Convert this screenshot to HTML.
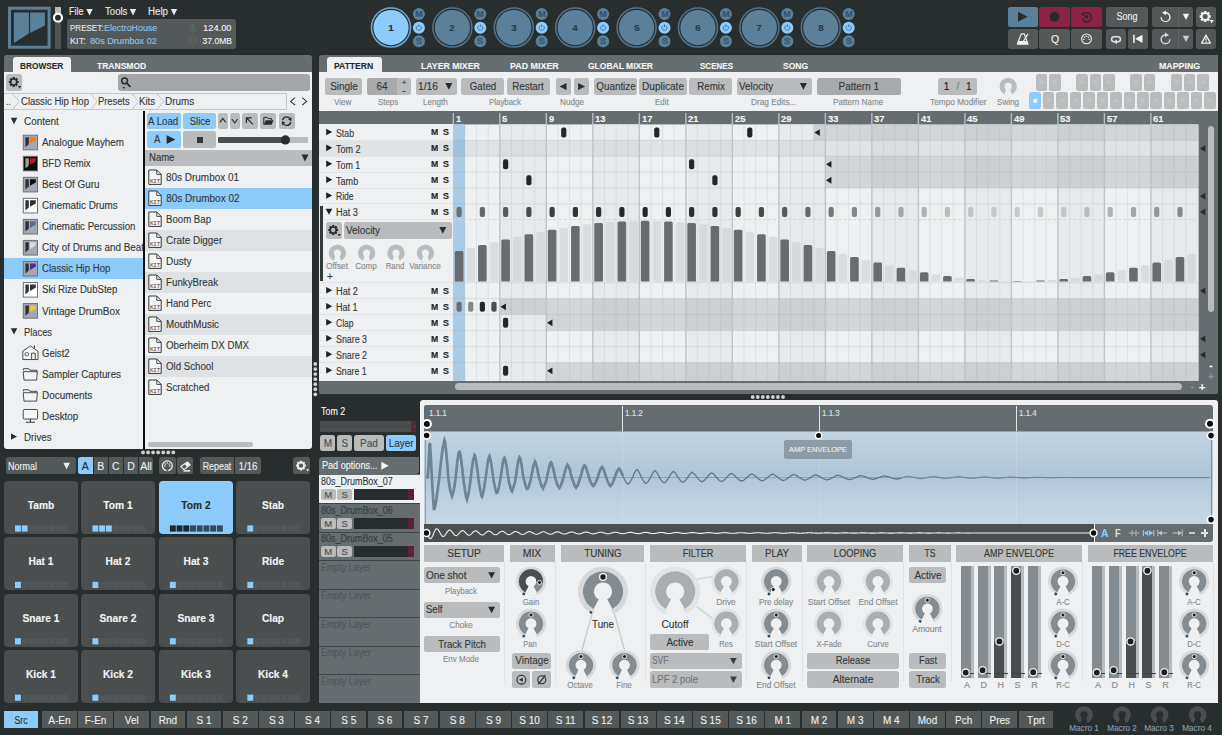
<!DOCTYPE html>
<html><head><meta charset="utf-8"><title>Geist2</title>
<style>
html,body{margin:0;padding:0;}
body{width:1222px;height:735px;overflow:hidden;background:#282e2e;position:relative;font-family:"Liberation Sans",sans-serif;}
div,span,svg{position:absolute;}
.t{white-space:nowrap;line-height:14px;height:14px;-webkit-text-stroke:0.12px currentColor;}
</style></head><body>
<svg style="left:6px;top:5px;" width="49" height="47" viewBox="0 0 49 47"><rect x="3.5" y="3.2" width="39.6" height="39" fill="none" stroke="#5a809a" stroke-width="3"/><polygon points="7.9,7.6 22.9,7.6 22.9,28.5 7.9,38" fill="#5a809a"/><polygon points="24.1,7.6 38.9,7.6 38.9,20.5 24.1,27.9" fill="#5a809a"/></svg>
<div style="left:55.20px;top:6.70px;width:5.70px;height:42.00px;background:#4e5354;"></div>
<div style="left:55.20px;top:6.70px;width:5.70px;height:6.30px;background:#b9bbbc;"></div>
<svg style="left:52px;top:11px;" width="13" height="13" viewBox="0 0 13 13"><g transform="translate(0.00,0.70)"><circle cx="6" cy="6" r="4" fill="#282e2e" stroke="#fff" stroke-width="2.2"/></g></svg>
<span class="t" style="top:5.00px;left:69.00px;transform-origin:0 50%;transform:scaleX(0.894);font-size:10px;color:#e8eaeb;">File</span>
<span class="t" style="top:5.00px;left:104.60px;transform-origin:0 50%;transform:scaleX(0.960);font-size:10px;color:#e8eaeb;">Tools</span>
<span class="t" style="top:5.00px;left:148.00px;transform-origin:0 50%;transform:scaleX(0.972);font-size:10px;color:#e8eaeb;">Help</span>
<svg style="left:85px;top:8px;" width="9" height="9" viewBox="0 0 9 9"><g transform="translate(0.50,0.00)"><polygon points="0.8,1 7.2,1 4,7.4" fill="#e8eaeb"/></g></svg>
<svg style="left:129px;top:8px;" width="9" height="9" viewBox="0 0 9 9"><polygon points="0.8,1 7.2,1 4,7.4" fill="#e8eaeb"/></svg>
<svg style="left:170px;top:8px;" width="9" height="9" viewBox="0 0 9 9"><polygon points="0.8,1 7.2,1 4,7.4" fill="#e8eaeb"/></svg>
<div style="left:67.40px;top:19.40px;width:168.20px;height:29.40px;background:#535858;border-radius:3px;"></div>
<span class="t" style="top:21.00px;left:69.60px;transform-origin:0 50%;transform:scaleX(0.890);font-size:9px;color:#e3e5e6;">PRESET:</span>
<span class="t" style="top:21.00px;left:103.80px;transform-origin:0 50%;transform:scaleX(0.985);font-size:9px;color:#8fc3ec;">ElectroHouse</span>
<span class="t" style="top:34.00px;left:69.60px;transform-origin:0 50%;transform:scaleX(1.019);font-size:9px;color:#e3e5e6;">KIT:</span>
<span class="t" style="top:34.00px;left:89.60px;transform-origin:0 50%;transform:scaleX(1.012);font-size:9px;color:#8fc3ec;">80s Drumbox 02</span>
<span class="t" style="top:21.00px;right:990.40px;transform-origin:100% 50%;transform:scaleX(1.032);font-size:9px;color:#f2f3f3;">124.00</span>
<span class="t" style="top:34.00px;right:990.00px;transform-origin:100% 50%;transform:scaleX(0.948);font-size:9px;color:#f2f3f3;">37.0MB</span>
<svg style="left:188px;top:23px;" width="9" height="9" viewBox="0 0 9 9"><g transform="translate(0.40,0.40)"><polygon points="4,0.8 7.4,7.2 0.6,7.2" fill="none" stroke="#666b6c" stroke-width="0.9"/><rect x="3.6" y="3" width="0.8" height="3" fill="#666b6c"/></g></svg>
<svg style="left:188px;top:36px;" width="9" height="9" viewBox="0 0 9 9"><g transform="translate(0.40,0.00)"><circle cx="4" cy="4" r="3.4" fill="none" stroke="#666b6c" stroke-width="0.9"/></g></svg>
<svg style="left:370px;top:6px;" width="43" height="43" viewBox="0 0 43 43"><g transform="translate(0.00,0.60)"><circle cx="21" cy="21" r="19.5" fill="none" stroke="#6ea6d6" stroke-width="1.5"/><circle cx="21" cy="21" r="17.6" fill="#8ccbfa"/></g></svg>
<span class="t" style="top:21.00px;left:391.00px;transform:translateX(-50%) scaleX(1.150);font-size:8.5px;color:#1f2a3a;font-weight:bold;">1</span>
<svg style="left:411px;top:7px;" width="15" height="15" viewBox="0 0 15 15"><g transform="translate(0.90,0.00)"><circle cx="7" cy="7" r="6" fill="#5a809a"/></g></svg>
<span class="t" style="top:7.00px;left:418.90px;transform:translateX(-50%) scaleX(1.080);font-size:8.5px;color:#35526a;font-weight:bold;">M</span>
<svg style="left:411px;top:20px;" width="15" height="15" viewBox="0 0 15 15"><g transform="translate(0.90,0.70)"><circle cx="7" cy="7" r="6" fill="#8ccbfa"/><path d="M5.4,5 A2.6,2.6 0 1 0 8.6,5" fill="none" stroke="#3b6d94" stroke-width="0.9"/><line x1="7" y1="3.6" x2="7" y2="6.6" stroke="#3b6d94" stroke-width="0.9"/></g></svg>
<svg style="left:411px;top:34px;" width="15" height="15" viewBox="0 0 15 15"><g transform="translate(0.90,0.20)"><circle cx="7" cy="7" r="6" fill="#5a809a"/></g></svg>
<span class="t" style="top:34.00px;left:418.90px;transform:translateX(-50%) scaleX(1.080);font-size:8.5px;color:#35526a;font-weight:bold;">S</span>
<svg style="left:431px;top:6px;" width="43" height="43" viewBox="0 0 43 43"><g transform="translate(0.40,0.60)"><circle cx="21" cy="21" r="19.5" fill="none" stroke="#4f748d" stroke-width="1.5"/><circle cx="21" cy="21" r="17.6" fill="#5a809a"/></g></svg>
<span class="t" style="top:21.00px;left:452.40px;transform:translateX(-50%) scaleX(1.150);font-size:8.5px;color:#2a3a46;font-weight:bold;">2</span>
<svg style="left:473px;top:7px;" width="15" height="15" viewBox="0 0 15 15"><g transform="translate(0.30,0.00)"><circle cx="7" cy="7" r="6" fill="#5a809a"/></g></svg>
<span class="t" style="top:7.00px;left:480.30px;transform:translateX(-50%) scaleX(1.080);font-size:8.5px;color:#35526a;font-weight:bold;">M</span>
<svg style="left:473px;top:20px;" width="15" height="15" viewBox="0 0 15 15"><g transform="translate(0.30,0.70)"><circle cx="7" cy="7" r="6" fill="#8ccbfa"/><path d="M5.4,5 A2.6,2.6 0 1 0 8.6,5" fill="none" stroke="#3b6d94" stroke-width="0.9"/><line x1="7" y1="3.6" x2="7" y2="6.6" stroke="#3b6d94" stroke-width="0.9"/></g></svg>
<svg style="left:473px;top:34px;" width="15" height="15" viewBox="0 0 15 15"><g transform="translate(0.30,0.20)"><circle cx="7" cy="7" r="6" fill="#5a809a"/></g></svg>
<span class="t" style="top:34.00px;left:480.30px;transform:translateX(-50%) scaleX(1.080);font-size:8.5px;color:#35526a;font-weight:bold;">S</span>
<svg style="left:492px;top:6px;" width="43" height="43" viewBox="0 0 43 43"><g transform="translate(0.80,0.60)"><circle cx="21" cy="21" r="19.5" fill="none" stroke="#4f748d" stroke-width="1.5"/><circle cx="21" cy="21" r="17.6" fill="#5a809a"/></g></svg>
<span class="t" style="top:21.00px;left:513.80px;transform:translateX(-50%) scaleX(1.150);font-size:8.5px;color:#2a3a46;font-weight:bold;">3</span>
<svg style="left:534px;top:7px;" width="15" height="15" viewBox="0 0 15 15"><g transform="translate(0.70,0.00)"><circle cx="7" cy="7" r="6" fill="#5a809a"/></g></svg>
<span class="t" style="top:7.00px;left:541.70px;transform:translateX(-50%) scaleX(1.080);font-size:8.5px;color:#35526a;font-weight:bold;">M</span>
<svg style="left:534px;top:20px;" width="15" height="15" viewBox="0 0 15 15"><g transform="translate(0.70,0.70)"><circle cx="7" cy="7" r="6" fill="#8ccbfa"/><path d="M5.4,5 A2.6,2.6 0 1 0 8.6,5" fill="none" stroke="#3b6d94" stroke-width="0.9"/><line x1="7" y1="3.6" x2="7" y2="6.6" stroke="#3b6d94" stroke-width="0.9"/></g></svg>
<svg style="left:534px;top:34px;" width="15" height="15" viewBox="0 0 15 15"><g transform="translate(0.70,0.20)"><circle cx="7" cy="7" r="6" fill="#5a809a"/></g></svg>
<span class="t" style="top:34.00px;left:541.70px;transform:translateX(-50%) scaleX(1.080);font-size:8.5px;color:#35526a;font-weight:bold;">S</span>
<svg style="left:554px;top:6px;" width="43" height="43" viewBox="0 0 43 43"><g transform="translate(0.20,0.60)"><circle cx="21" cy="21" r="19.5" fill="none" stroke="#4f748d" stroke-width="1.5"/><circle cx="21" cy="21" r="17.6" fill="#5a809a"/></g></svg>
<span class="t" style="top:21.00px;left:575.20px;transform:translateX(-50%) scaleX(1.150);font-size:8.5px;color:#2a3a46;font-weight:bold;">4</span>
<svg style="left:596px;top:7px;" width="15" height="15" viewBox="0 0 15 15"><g transform="translate(0.10,0.00)"><circle cx="7" cy="7" r="6" fill="#5a809a"/></g></svg>
<span class="t" style="top:7.00px;left:603.10px;transform:translateX(-50%) scaleX(1.080);font-size:8.5px;color:#35526a;font-weight:bold;">M</span>
<svg style="left:596px;top:20px;" width="15" height="15" viewBox="0 0 15 15"><g transform="translate(0.10,0.70)"><circle cx="7" cy="7" r="6" fill="#8ccbfa"/><path d="M5.4,5 A2.6,2.6 0 1 0 8.6,5" fill="none" stroke="#3b6d94" stroke-width="0.9"/><line x1="7" y1="3.6" x2="7" y2="6.6" stroke="#3b6d94" stroke-width="0.9"/></g></svg>
<svg style="left:596px;top:34px;" width="15" height="15" viewBox="0 0 15 15"><g transform="translate(0.10,0.20)"><circle cx="7" cy="7" r="6" fill="#5a809a"/></g></svg>
<span class="t" style="top:34.00px;left:603.10px;transform:translateX(-50%) scaleX(1.080);font-size:8.5px;color:#35526a;font-weight:bold;">S</span>
<svg style="left:615px;top:6px;" width="43" height="43" viewBox="0 0 43 43"><g transform="translate(0.60,0.60)"><circle cx="21" cy="21" r="19.5" fill="none" stroke="#4f748d" stroke-width="1.5"/><circle cx="21" cy="21" r="17.6" fill="#5a809a"/></g></svg>
<span class="t" style="top:21.00px;left:636.60px;transform:translateX(-50%) scaleX(1.150);font-size:8.5px;color:#2a3a46;font-weight:bold;">5</span>
<svg style="left:657px;top:7px;" width="15" height="15" viewBox="0 0 15 15"><g transform="translate(0.50,0.00)"><circle cx="7" cy="7" r="6" fill="#5a809a"/></g></svg>
<span class="t" style="top:7.00px;left:664.50px;transform:translateX(-50%) scaleX(1.080);font-size:8.5px;color:#35526a;font-weight:bold;">M</span>
<svg style="left:657px;top:20px;" width="15" height="15" viewBox="0 0 15 15"><g transform="translate(0.50,0.70)"><circle cx="7" cy="7" r="6" fill="#8ccbfa"/><path d="M5.4,5 A2.6,2.6 0 1 0 8.6,5" fill="none" stroke="#3b6d94" stroke-width="0.9"/><line x1="7" y1="3.6" x2="7" y2="6.6" stroke="#3b6d94" stroke-width="0.9"/></g></svg>
<svg style="left:657px;top:34px;" width="15" height="15" viewBox="0 0 15 15"><g transform="translate(0.50,0.20)"><circle cx="7" cy="7" r="6" fill="#5a809a"/></g></svg>
<span class="t" style="top:34.00px;left:664.50px;transform:translateX(-50%) scaleX(1.080);font-size:8.5px;color:#35526a;font-weight:bold;">S</span>
<svg style="left:677px;top:6px;" width="43" height="43" viewBox="0 0 43 43"><g transform="translate(0.00,0.60)"><circle cx="21" cy="21" r="19.5" fill="none" stroke="#4f748d" stroke-width="1.5"/><circle cx="21" cy="21" r="17.6" fill="#5a809a"/></g></svg>
<span class="t" style="top:21.00px;left:698.00px;transform:translateX(-50%) scaleX(1.150);font-size:8.5px;color:#2a3a46;font-weight:bold;">6</span>
<svg style="left:718px;top:7px;" width="15" height="15" viewBox="0 0 15 15"><g transform="translate(0.90,0.00)"><circle cx="7" cy="7" r="6" fill="#5a809a"/></g></svg>
<span class="t" style="top:7.00px;left:725.90px;transform:translateX(-50%) scaleX(1.080);font-size:8.5px;color:#35526a;font-weight:bold;">M</span>
<svg style="left:718px;top:20px;" width="15" height="15" viewBox="0 0 15 15"><g transform="translate(0.90,0.70)"><circle cx="7" cy="7" r="6" fill="#8ccbfa"/><path d="M5.4,5 A2.6,2.6 0 1 0 8.6,5" fill="none" stroke="#3b6d94" stroke-width="0.9"/><line x1="7" y1="3.6" x2="7" y2="6.6" stroke="#3b6d94" stroke-width="0.9"/></g></svg>
<svg style="left:718px;top:34px;" width="15" height="15" viewBox="0 0 15 15"><g transform="translate(0.90,0.20)"><circle cx="7" cy="7" r="6" fill="#5a809a"/></g></svg>
<span class="t" style="top:34.00px;left:725.90px;transform:translateX(-50%) scaleX(1.080);font-size:8.5px;color:#35526a;font-weight:bold;">S</span>
<svg style="left:738px;top:6px;" width="43" height="43" viewBox="0 0 43 43"><g transform="translate(0.40,0.60)"><circle cx="21" cy="21" r="19.5" fill="none" stroke="#4f748d" stroke-width="1.5"/><circle cx="21" cy="21" r="17.6" fill="#5a809a"/></g></svg>
<span class="t" style="top:21.00px;left:759.40px;transform:translateX(-50%) scaleX(1.150);font-size:8.5px;color:#2a3a46;font-weight:bold;">7</span>
<svg style="left:780px;top:7px;" width="15" height="15" viewBox="0 0 15 15"><g transform="translate(0.30,0.00)"><circle cx="7" cy="7" r="6" fill="#5a809a"/></g></svg>
<span class="t" style="top:7.00px;left:787.30px;transform:translateX(-50%) scaleX(1.080);font-size:8.5px;color:#35526a;font-weight:bold;">M</span>
<svg style="left:780px;top:20px;" width="15" height="15" viewBox="0 0 15 15"><g transform="translate(0.30,0.70)"><circle cx="7" cy="7" r="6" fill="#8ccbfa"/><path d="M5.4,5 A2.6,2.6 0 1 0 8.6,5" fill="none" stroke="#3b6d94" stroke-width="0.9"/><line x1="7" y1="3.6" x2="7" y2="6.6" stroke="#3b6d94" stroke-width="0.9"/></g></svg>
<svg style="left:780px;top:34px;" width="15" height="15" viewBox="0 0 15 15"><g transform="translate(0.30,0.20)"><circle cx="7" cy="7" r="6" fill="#5a809a"/></g></svg>
<span class="t" style="top:34.00px;left:787.30px;transform:translateX(-50%) scaleX(1.080);font-size:8.5px;color:#35526a;font-weight:bold;">S</span>
<svg style="left:799px;top:6px;" width="43" height="43" viewBox="0 0 43 43"><g transform="translate(0.80,0.60)"><circle cx="21" cy="21" r="19.5" fill="none" stroke="#4f748d" stroke-width="1.5"/><circle cx="21" cy="21" r="17.6" fill="#5a809a"/></g></svg>
<span class="t" style="top:21.00px;left:820.80px;transform:translateX(-50%) scaleX(1.150);font-size:8.5px;color:#2a3a46;font-weight:bold;">8</span>
<svg style="left:841px;top:7px;" width="15" height="15" viewBox="0 0 15 15"><g transform="translate(0.70,0.00)"><circle cx="7" cy="7" r="6" fill="#5a809a"/></g></svg>
<span class="t" style="top:7.00px;left:848.70px;transform:translateX(-50%) scaleX(1.080);font-size:8.5px;color:#35526a;font-weight:bold;">M</span>
<svg style="left:841px;top:20px;" width="15" height="15" viewBox="0 0 15 15"><g transform="translate(0.70,0.70)"><circle cx="7" cy="7" r="6" fill="#8ccbfa"/><path d="M5.4,5 A2.6,2.6 0 1 0 8.6,5" fill="none" stroke="#3b6d94" stroke-width="0.9"/><line x1="7" y1="3.6" x2="7" y2="6.6" stroke="#3b6d94" stroke-width="0.9"/></g></svg>
<svg style="left:841px;top:34px;" width="15" height="15" viewBox="0 0 15 15"><g transform="translate(0.70,0.20)"><circle cx="7" cy="7" r="6" fill="#5a809a"/></g></svg>
<span class="t" style="top:34.00px;left:848.70px;transform:translateX(-50%) scaleX(1.080);font-size:8.5px;color:#35526a;font-weight:bold;">S</span>
<div style="left:1007.60px;top:6.60px;width:30.20px;height:20.20px;background:#5a809a;border-radius:2.5px;"></div>
<div style="left:1039.40px;top:6.60px;width:30.20px;height:20.20px;background:#8e2246;border-radius:2.5px;"></div>
<div style="left:1071.40px;top:6.60px;width:30.40px;height:20.20px;background:#8e2246;border-radius:2.5px;"></div>
<div style="left:1106.00px;top:6.60px;width:42.00px;height:20.20px;background:#535858;border-radius:2.5px;"></div>
<div style="left:1152.20px;top:6.60px;width:41.20px;height:20.20px;background:#535858;border-radius:2.5px;"></div>
<div style="left:1178.00px;top:6.60px;width:1.00px;height:20.20px;background:#5f6465;"></div>
<div style="left:1196.00px;top:6.60px;width:20.00px;height:20.20px;background:#535858;border-radius:2.5px;"></div>
<div style="left:1007.60px;top:28.80px;width:30.20px;height:20.10px;background:#535858;border-radius:2.5px;"></div>
<div style="left:1039.40px;top:28.80px;width:30.20px;height:20.10px;background:#535858;border-radius:2.5px;"></div>
<div style="left:1071.40px;top:28.80px;width:30.40px;height:20.10px;background:#535858;border-radius:2.5px;"></div>
<div style="left:1106.00px;top:28.80px;width:20.00px;height:20.10px;background:#535858;border-radius:2.5px;"></div>
<div style="left:1128.00px;top:28.80px;width:20.00px;height:20.10px;background:#535858;border-radius:2.5px;"></div>
<div style="left:1152.20px;top:28.80px;width:41.20px;height:20.10px;background:#535858;border-radius:2.5px;"></div>
<div style="left:1178.00px;top:28.80px;width:1.00px;height:20.10px;background:#5f6465;"></div>
<div style="left:1196.00px;top:28.80px;width:20.00px;height:20.10px;background:#535858;border-radius:2.5px;"></div>
<svg style="left:1017px;top:10px;" width="13" height="13" viewBox="0 0 13 13"><g transform="translate(0.00,0.70)"><polygon points="1,1 10.5,6 1,11" fill="#272d2e"/></g></svg>
<svg style="left:1048px;top:10px;" width="13" height="13" viewBox="0 0 13 13"><g transform="translate(0.50,0.70)"><circle cx="6" cy="6" r="5" fill="#272d2e"/></g></svg>
<svg style="left:1080px;top:10px;" width="14" height="14" viewBox="0 0 14 14"><g transform="translate(0.00,0.20)"><path d="M3.2,4.2 A4.6,4.6 0 1 1 2.3,8.2" fill="none" stroke="#272d2e" stroke-width="1.5"/><polygon points="0.6,3.2 5,2.2 4.2,6.4" fill="#272d2e"/><circle cx="6.6" cy="6.6" r="1.7" fill="#272d2e"/></g></svg>
<span class="t" style="top:10.00px;left:1127.00px;transform:translateX(-50%) scaleX(0.899);font-size:10px;color:#eceeee;">Song</span>
<svg style="left:1159px;top:10px;" width="14" height="14" viewBox="0 0 14 14"><g transform="translate(0.00,0.40)"><path d="M6.5,2.4 A4.4,4.4 0 1 1 2.1,6.8" fill="none" stroke="#f0f1f1" stroke-width="1.4"/><polygon points="7,0 7,4.8 3,2.4" fill="#f0f1f1"/></g></svg>
<svg style="left:1182px;top:12px;" width="9" height="9" viewBox="0 0 9 9"><g transform="translate(0.00,0.70)"><polygon points="0.8,1 7.2,1 4,7.2" fill="#f0f1f1"/></g></svg>
<svg style="left:1198px;top:9px;" width="14" height="15" viewBox="0 0 14 15"><g transform="translate(0.50,0.80)"><path fill-rule="evenodd" fill="#f0f1f1" d="M12.29,5.57 L12.29,7.83 L10.50,8.26 L10.49,8.28 L11.45,9.85 L9.85,11.45 L8.28,10.49 L8.26,10.50 L7.83,12.29 L5.57,12.29 L5.14,10.50 L5.12,10.49 L3.55,11.45 L1.95,9.85 L2.91,8.28 L2.90,8.26 L1.11,7.83 L1.11,5.57 L2.90,5.14 L2.91,5.12 L1.95,3.55 L3.55,1.95 L5.12,2.91 L5.14,2.90 L5.57,1.11 L7.83,1.11 L8.26,2.90 L8.28,2.91 L9.85,1.95 L11.45,3.55 L10.49,5.12 L10.50,5.14 Z M9.2,6.7 a2.5,2.5 0 1 0 -5.0,0 a2.5,2.5 0 1 0 5.0,0 Z"/></g></svg>
<svg style="left:1209px;top:20px;" width="6" height="4" viewBox="0 0 6 4"><g transform="translate(0.60,0.10)"><polygon points="0,0 4.2,0 2.1,3.2" fill="#f0f1f1"/></g></svg>
<svg style="left:1016px;top:32px;" width="15" height="14" viewBox="0 0 15 14"><g transform="translate(0.00,0.65)"><polygon points="5.2,1.2 8.2,1.2 12,11.4 1.4,11.4" fill="none" stroke="#f0f1f1" stroke-width="1.2" stroke-linejoin="round"/><polygon points="2.3,8.4 11.1,8.4 12.2,11.6 1.2,11.6" fill="#f0f1f1"/><line x1="12" y1="1.2" x2="7.4" y2="8.6" stroke="#f0f1f1" stroke-width="1.2"/></g></svg>
<span class="t" style="top:33.00px;left:1054.50px;transform:translateX(-50%) scaleX(1.050);font-size:10px;color:#f0f1f1;">Q</span>
<svg style="left:1080px;top:32px;" width="13" height="13" viewBox="0 0 13 13"><g transform="translate(0.50,0.85)"><circle cx="6" cy="6" r="4.9" fill="none" stroke="#f0f1f1" stroke-width="1.1"/><circle cx="3.4" cy="6.4" r="0.8" fill="#f0f1f1"/><circle cx="8.6" cy="6.4" r="0.8" fill="#f0f1f1"/><circle cx="6" cy="3.4" r="0.8" fill="#f0f1f1"/><circle cx="4.1" cy="4.2" r="0.8" fill="#f0f1f1"/><circle cx="7.9" cy="4.2" r="0.8" fill="#f0f1f1"/></g></svg>
<svg style="left:1110px;top:34px;" width="13" height="12" viewBox="0 0 13 12"><g transform="translate(0.40,0.25)"><path d="M4,7.4 H3.6 A2.4,2.4 0 0 1 3.6,2.6 H7.6 A2.4,2.4 0 0 1 7.6,7.4 H6.6" fill="none" stroke="#dfe1e2" stroke-width="1.5"/><polygon points="3,7.6 6.6,5.2 6.6,10" fill="#dfe1e2"/></g></svg>
<svg style="left:1132px;top:34px;" width="12" height="10" viewBox="0 0 12 10"><g transform="translate(0.50,0.35)"><rect x="0.6" y="0.4" width="1.6" height="8.2" fill="#f0f1f1"/><polygon points="10,0.4 10,8.6 2.6,4.5" fill="#f0f1f1"/></g></svg>
<svg style="left:1159px;top:32px;" width="14" height="14" viewBox="0 0 14 14"><g transform="translate(0.00,0.55)"><path d="M6.5,2.4 A4.4,4.4 0 1 0 10.9,6.8" fill="none" stroke="#d3d6d7" stroke-width="1.4"/><polygon points="6,0 6,4.8 10,2.4" fill="#d3d6d7"/></g></svg>
<svg style="left:1182px;top:34px;" width="9" height="9" viewBox="0 0 9 9"><g transform="translate(0.00,0.85)"><polygon points="0.8,1 7.2,1 4,7.2" fill="#c9cccd"/></g></svg>
<svg style="left:1200px;top:33px;" width="13" height="12" viewBox="0 0 13 12"><g transform="translate(0.00,0.35)"><polygon points="6,1.8 10.4,9.8 1.6,9.8" fill="none" stroke="#f0f1f1" stroke-width="1.2" stroke-linejoin="round"/><rect x="5.5" y="4.4" width="1.1" height="3" fill="#f0f1f1"/><rect x="5.5" y="7.9" width="1.1" height="1" fill="#f0f1f1"/></g></svg>
<div style="left:4.00px;top:55.30px;width:308.00px;height:17.70px;background:#656d71;border-radius:3px 3px 0px 0px;"></div>
<div style="left:4.00px;top:72.00px;width:308.00px;height:377.00px;background:#eef0f1;border-radius:0px 0px 3px 3px;"></div>
<div style="left:13.00px;top:57.40px;width:58.00px;height:15.10px;background:#eef0f1;border-radius:3px 3px 0px 0px;"></div>
<span class="t" style="top:59.00px;left:20.40px;transform-origin:0 50%;transform:scaleX(0.919);font-size:9px;color:#272d2e;font-weight:bold;">BROWSER</span>
<span class="t" style="top:59.00px;left:96.60px;transform-origin:0 50%;transform:scaleX(0.946);font-size:9px;color:#f4f5f5;font-weight:bold;">TRANSMOD</span>
<div style="left:6.00px;top:74.40px;width:16.40px;height:16.20px;background:#b9bbbc;border-radius:2.5px;"></div>
<svg style="left:7px;top:76px;" width="13" height="13" viewBox="0 0 13 13"><g transform="translate(0.70,0.00)"><path fill-rule="evenodd" fill="#272d2e" d="M10.90,5.01 L10.90,6.99 L9.33,7.37 L9.32,7.39 L10.17,8.76 L8.76,10.17 L7.39,9.32 L7.37,9.33 L6.99,10.90 L5.01,10.90 L4.63,9.33 L4.61,9.32 L3.24,10.17 L1.83,8.76 L2.68,7.39 L2.67,7.37 L1.10,6.99 L1.10,5.01 L2.67,4.63 L2.68,4.61 L1.83,3.24 L3.24,1.83 L4.61,2.68 L4.63,2.67 L5.01,1.10 L6.99,1.10 L7.37,2.67 L7.39,2.68 L8.76,1.83 L10.17,3.24 L9.32,4.61 L9.33,4.63 Z M8.2,6.0 a2.2,2.2 0 1 0 -4.4,0 a2.2,2.2 0 1 0 4.4,0 Z"/></g></svg>
<svg style="left:18px;top:86px;" width="5" height="4" viewBox="0 0 5 4"><polygon points="0,0 3.2,0 1.6,2.4" fill="#272d2e"/></svg>
<div style="left:118.00px;top:74.40px;width:192.00px;height:16.20px;background:#a4a6a7;border-radius:3px;"></div>
<svg style="left:120px;top:76px;" width="13" height="15" viewBox="0 0 13 15"><circle cx="4.6" cy="4.8" r="2.9" fill="none" stroke="#272d2e" stroke-width="1.5"/><line x1="6.8" y1="7.2" x2="10.4" y2="11" stroke="#272d2e" stroke-width="1.8"/><polygon points="2.4,11 5.2,11 3.8,13" fill="#272d2e"/></svg>
<div style="left:4.00px;top:92.60px;width:282.50px;height:17.80px;background:#eef0f1;border:1px solid #c6c9ca;box-sizing:border-box;border-left:none;"></div>
<span class="t" style="top:95.00px;left:5.60px;transform-origin:0 50%;transform:scaleX(0.864);font-size:10px;color:#33383a;">..</span>
<span class="t" style="top:95.00px;left:21.00px;transform-origin:0 50%;transform:scaleX(0.956);font-size:10px;color:#33383a;">Classic Hip Hop</span>
<span class="t" style="top:95.00px;left:98.40px;transform-origin:0 50%;transform:scaleX(0.932);font-size:10px;color:#33383a;">Presets</span>
<span class="t" style="top:95.00px;left:139.40px;transform-origin:0 50%;transform:scaleX(0.960);font-size:10px;color:#33383a;">Kits</span>
<span class="t" style="top:95.00px;left:164.60px;transform-origin:0 50%;transform:scaleX(0.992);font-size:10px;color:#33383a;">Drums</span>
<svg style="left:11px;top:93px;" width="10" height="18" viewBox="0 0 10 18"><g transform="translate(0.60,0.40)"><polyline points="0.5,0 7.6,8.1 0.5,16.4" fill="none" stroke="#c0c3c4" stroke-width="1"/></g></svg>
<svg style="left:89px;top:93px;" width="10" height="18" viewBox="0 0 10 18"><g transform="translate(0.80,0.40)"><polyline points="0.5,0 7.6,8.1 0.5,16.4" fill="none" stroke="#c0c3c4" stroke-width="1"/></g></svg>
<svg style="left:131px;top:93px;" width="10" height="18" viewBox="0 0 10 18"><g transform="translate(0.00,0.40)"><polyline points="0.5,0 7.6,8.1 0.5,16.4" fill="none" stroke="#c0c3c4" stroke-width="1"/></g></svg>
<svg style="left:156px;top:93px;" width="10" height="18" viewBox="0 0 10 18"><g transform="translate(0.20,0.40)"><polyline points="0.5,0 7.6,8.1 0.5,16.4" fill="none" stroke="#c0c3c4" stroke-width="1"/></g></svg>
<svg style="left:289px;top:97px;" width="8" height="10" viewBox="0 0 8 10"><g transform="translate(0.50,0.00)"><polyline points="5.6,0.6 1.2,4.4 5.6,8.2" fill="none" stroke="#33383a" stroke-width="1.1"/></g></svg>
<svg style="left:301px;top:97px;" width="8" height="10" viewBox="0 0 8 10"><polyline points="1.2,0.6 5.6,4.4 1.2,8.2" fill="none" stroke="#33383a" stroke-width="1.1"/></svg>
<div style="left:4px;top:111px;width:139px;height:338px;overflow:hidden;">
<svg style="left:6px;top:6px;" width="8" height="8" viewBox="0 0 8 8"><g transform="translate(0.80,0.80)"><polygon points="0,0 6.4,0 3.2,6.4" fill="#272d2e"/></g></svg>
<span class="t" style="top:4.00px;left:19.60px;transform-origin:0 50%;transform:scaleX(0.994);font-size:10px;color:#33383a;">Content</span>
<svg style="left:18px;top:23px;" width="17" height="17" viewBox="0 0 17 17"><g transform="translate(0.80,0.74)"><rect x="0.5" y="0.5" width="14.2" height="14.6" fill="#a3a8b3" stroke="#6e7275" stroke-width="1"/><polygon points="2.6,2.4 6,2.4 6,9.6 2.6,12.6" fill="#2e3133"/><polygon points="7.2,2.4 13,2.4 13,5.6 7.2,9" fill="#f47b20"/></g></svg>
<span class="t" style="top:25.00px;left:37.60px;transform-origin:0 50%;transform:scaleX(0.983);font-size:10px;color:#33383a;">Analogue Mayhem</span>
<svg style="left:18px;top:44px;" width="17" height="17" viewBox="0 0 17 17"><g transform="translate(0.80,0.78)"><rect x="0.5" y="0.5" width="14.2" height="14.6" fill="#0a0a0a" stroke="#6e7275" stroke-width="1"/><polygon points="2.6,2.4 6,2.4 6,9.6 2.6,12.6" fill="#a0a29f"/><polygon points="7.2,2.4 13,2.4 13,5.6 7.2,9" fill="#b5172b"/></g></svg>
<span class="t" style="top:46.00px;left:37.60px;transform-origin:0 50%;transform:scaleX(0.951);font-size:10px;color:#33383a;">BFD Remix</span>
<svg style="left:18px;top:65px;" width="17" height="17" viewBox="0 0 17 17"><g transform="translate(0.80,0.82)"><rect x="0.5" y="0.5" width="14.2" height="14.6" fill="#a3a8b3" stroke="#6e7275" stroke-width="1"/><polygon points="2.6,2.4 6,2.4 6,9.6 2.6,12.6" fill="#2e3133"/><polygon points="7.2,2.4 13,2.4 13,5.6 7.2,9" fill="#0a0a0a"/></g></svg>
<span class="t" style="top:67.00px;left:37.60px;transform-origin:0 50%;transform:scaleX(0.984);font-size:10px;color:#33383a;">Best Of Guru</span>
<svg style="left:18px;top:86px;" width="17" height="17" viewBox="0 0 17 17"><g transform="translate(0.80,0.86)"><rect x="0.5" y="0.5" width="14.2" height="14.6" fill="#ffffff" stroke="#6e7275" stroke-width="1"/><polygon points="2.6,2.4 6,2.4 6,9.6 2.6,12.6" fill="#2e3133"/><polygon points="7.2,2.4 13,2.4 13,5.6 7.2,9" fill="#2e3133"/></g></svg>
<span class="t" style="top:88.00px;left:37.60px;transform-origin:0 50%;transform:scaleX(0.988);font-size:10px;color:#33383a;">Cinematic Drums</span>
<svg style="left:18px;top:107px;" width="17" height="17" viewBox="0 0 17 17"><g transform="translate(0.80,0.90)"><rect x="0.5" y="0.5" width="14.2" height="14.6" fill="#a3a8b3" stroke="#6e7275" stroke-width="1"/><polygon points="2.6,2.4 6,2.4 6,9.6 2.6,12.6" fill="#2e3133"/><polygon points="7.2,2.4 13,2.4 13,5.6 7.2,9" fill="#5a6e8c"/></g></svg>
<span class="t" style="top:109.00px;left:37.60px;transform-origin:0 50%;transform:scaleX(0.966);font-size:10px;color:#33383a;">Cinematic Percussion</span>
<svg style="left:18px;top:128px;" width="17" height="17" viewBox="0 0 17 17"><g transform="translate(0.80,0.94)"><rect x="0.5" y="0.5" width="14.2" height="14.6" fill="#a3a8b3" stroke="#6e7275" stroke-width="1"/><polygon points="2.6,2.4 6,2.4 6,9.6 2.6,12.6" fill="#2e3133"/><polygon points="7.2,2.4 13,2.4 13,5.6 7.2,9" fill="#d9dce2"/></g></svg>
<span class="t" style="top:130.00px;left:37.60px;transform-origin:0 50%;transform:scaleX(0.987);font-size:10px;color:#33383a;">City of Drums and Beats</span>
<div style="left:0.00px;top:147.40px;width:139.00px;height:20.40px;background:#8ccbfa;"></div>
<svg style="left:18px;top:149px;" width="17" height="17" viewBox="0 0 17 17"><g transform="translate(0.80,0.98)"><rect x="0.5" y="0.5" width="14.2" height="14.6" fill="#a3a8b3" stroke="#6e7275" stroke-width="1"/><polygon points="2.6,2.4 6,2.4 6,9.6 2.6,12.6" fill="#2e3133"/><polygon points="7.2,2.4 13,2.4 13,5.6 7.2,9" fill="#4a2c9a"/></g></svg>
<span class="t" style="top:151.00px;left:37.60px;transform-origin:0 50%;transform:scaleX(0.962);font-size:10px;color:#33383a;">Classic Hip Hop</span>
<svg style="left:18px;top:171px;" width="17" height="16" viewBox="0 0 17 16"><g transform="translate(0.80,0.02)"><rect x="0.5" y="0.5" width="14.2" height="14.6" fill="#ffffff" stroke="#6e7275" stroke-width="1"/><polygon points="2.6,2.4 6,2.4 6,9.6 2.6,12.6" fill="#2e3133"/><polygon points="7.2,2.4 13,2.4 13,5.6 7.2,9" fill="#2e3133"/></g></svg>
<span class="t" style="top:172.00px;left:37.60px;transform-origin:0 50%;transform:scaleX(0.960);font-size:10px;color:#33383a;">Ski Rize DubStep</span>
<svg style="left:18px;top:192px;" width="17" height="16" viewBox="0 0 17 16"><g transform="translate(0.80,0.06)"><rect x="0.5" y="0.5" width="14.2" height="14.6" fill="#a3a8b3" stroke="#6e7275" stroke-width="1"/><polygon points="2.6,2.4 6,2.4 6,9.6 2.6,12.6" fill="#2e3133"/><polygon points="7.2,2.4 13,2.4 13,5.6 7.2,9" fill="#e8c840"/></g></svg>
<span class="t" style="top:194.00px;left:37.60px;transform-origin:0 50%;transform:scaleX(0.998);font-size:10px;color:#33383a;">Vintage DrumBox</span>
<svg style="left:6px;top:217px;" width="8" height="7" viewBox="0 0 8 7"><g transform="translate(0.80,0.20)"><polygon points="0,0 6.4,0 3.2,6.4" fill="#272d2e"/></g></svg>
<span class="t" style="top:215.00px;left:19.60px;transform-origin:0 50%;transform:scaleX(0.933);font-size:10px;color:#33383a;">Places</span>
<svg style="left:18px;top:233px;" width="18" height="17" viewBox="0 0 18 17"><g transform="translate(0.00,0.54)"><path d="M0.8,6.6 L8.4,1.4 L16,6.6 V15 H0.8 Z" fill="#f4f5f6" stroke="#33383a" stroke-width="0.9"/><rect x="3" y="8.2" width="3.6" height="3" rx="1" fill="none" stroke="#33383a" stroke-width="0.8"/><path d="M9.6,15 V8.6 H13.2 V15" fill="none" stroke="#33383a" stroke-width="0.9"/><path d="M12.4,3.6 V0.8" stroke="#33383a" stroke-width="1"/></g></svg>
<span class="t" style="top:236.00px;left:37.60px;transform-origin:0 50%;transform:scaleX(0.955);font-size:10px;color:#33383a;">Geist2</span>
<svg style="left:18px;top:256px;" width="17" height="15" viewBox="0 0 17 15"><g transform="translate(0.40,0.08)"><path d="M1,3.2 V1.6 H6.4 L7.6,3.2 H14.6 V4.6" fill="none" stroke="#33383a" stroke-width="0.9"/><path d="M1.6,13 L0.8,4.6 H15 L14.2,13 Z" fill="#f4f5f6" stroke="#33383a" stroke-width="0.9"/></g></svg>
<span class="t" style="top:257.00px;left:37.60px;transform-origin:0 50%;transform:scaleX(0.980);font-size:10px;color:#33383a;">Sampler Captures</span>
<svg style="left:18px;top:277px;" width="17" height="15" viewBox="0 0 17 15"><g transform="translate(0.40,0.12)"><path d="M1,3.2 V1.6 H6.4 L7.6,3.2 H14.6 V4.6" fill="none" stroke="#33383a" stroke-width="0.9"/><path d="M1.6,13 L0.8,4.6 H15 L14.2,13 Z" fill="#f4f5f6" stroke="#33383a" stroke-width="0.9"/></g></svg>
<span class="t" style="top:278.00px;left:37.60px;transform-origin:0 50%;transform:scaleX(0.993);font-size:10px;color:#33383a;">Documents</span>
<svg style="left:18px;top:297px;" width="17" height="16" viewBox="0 0 17 16"><g transform="translate(0.40,0.66)"><rect x="0.8" y="0.8" width="14.4" height="9.6" rx="1" fill="#f4f5f6" stroke="#33383a" stroke-width="0.9"/><path d="M8,10.4 V13.4 M3.4,13.6 H12.6" stroke="#33383a" stroke-width="1.1"/></g></svg>
<span class="t" style="top:299.00px;left:37.60px;transform-origin:0 50%;transform:scaleX(0.992);font-size:10px;color:#33383a;">Desktop</span>
<svg style="left:7px;top:322px;" width="7" height="7" viewBox="0 0 7 7"><g transform="translate(0.00,0.40)"><polygon points="0,0 6,3.2 0,6.4" fill="#272d2e"/></g></svg>
<span class="t" style="top:320.00px;left:19.60px;transform-origin:0 50%;transform:scaleX(0.974);font-size:10px;color:#33383a;">Drives</span>
</div>
<div style="left:143.00px;top:111.00px;width:2.30px;height:338.00px;background:#0c0e0f;"></div>
<div style="left:147.30px;top:112.90px;width:33.50px;height:16.10px;background:#8ccbfa;border-radius:2.5px;"></div>
<div style="left:183.00px;top:112.90px;width:33.00px;height:16.10px;background:#8ccbfa;border-radius:2.5px;"></div>
<div style="left:218.10px;top:112.90px;width:9.50px;height:16.10px;background:#b9bbbc;border-radius:2.5px;"></div>
<div style="left:230.00px;top:112.90px;width:9.50px;height:16.10px;background:#b9bbbc;border-radius:2.5px;"></div>
<div style="left:241.60px;top:112.90px;width:16.20px;height:16.10px;background:#b9bbbc;border-radius:2.5px;"></div>
<div style="left:260.20px;top:112.90px;width:16.20px;height:16.10px;background:#b9bbbc;border-radius:2.5px;"></div>
<div style="left:278.80px;top:112.90px;width:15.90px;height:16.10px;background:#b9bbbc;border-radius:2.5px;"></div>
<div style="left:147.30px;top:131.40px;width:33.50px;height:16.20px;background:#8ccbfa;border-radius:2.5px;"></div>
<div style="left:183.00px;top:131.40px;width:33.00px;height:16.20px;background:#b9bbbc;border-radius:2.5px;"></div>
<span class="t" style="top:115.00px;left:148.20px;transform-origin:0 50%;transform:scaleX(0.970);font-size:10px;color:#33383a;">A Load</span>
<span class="t" style="top:115.00px;left:199.50px;transform:translateX(-50%) scaleX(0.950);font-size:10px;color:#33383a;">Slice</span>
<svg style="left:219px;top:117px;" width="8" height="7" viewBox="0 0 8 7"><g transform="translate(0.30,0.50)"><polyline points="0.6,4.8 3.5,1 6.4,4.8" fill="none" stroke="#272d2e" stroke-width="1.1"/></g></svg>
<svg style="left:231px;top:118px;" width="8" height="7" viewBox="0 0 8 7"><g transform="translate(0.20,0.00)"><polyline points="0.6,1 3.5,4.8 6.4,1" fill="none" stroke="#272d2e" stroke-width="1.1"/></g></svg>
<svg style="left:245px;top:116px;" width="10" height="10" viewBox="0 0 10 10"><g transform="translate(0.00,0.40)"><path d="M1.4,6.6 V1.4 H6.6 M1.6,1.6 L8,8" fill="none" stroke="#272d2e" stroke-width="1.2"/></g></svg>
<svg style="left:263px;top:116px;" width="12" height="11" viewBox="0 0 12 11"><path d="M0.8,8.6 V1.4 H4.2 L5.2,2.6 H8.6 V4" fill="none" stroke="#272d2e" stroke-width="1"/><path d="M0.8,8.8 L2.8,4.2 H10.6 L8.6,8.8 Z" fill="#272d2e"/></svg>
<svg style="left:281px;top:115px;" width="12" height="12" viewBox="0 0 12 12"><g transform="translate(0.00,0.40)"><path d="M1.6,4.8 A4.2,4.2 0 0 1 9.4,3.6" fill="none" stroke="#272d2e" stroke-width="1.3"/><polygon points="10.6,1.6 10.4,5.6 7,4.2" fill="#272d2e"/><path d="M9.8,6.6 A4.2,4.2 0 0 1 2,7.8" fill="none" stroke="#272d2e" stroke-width="1.3"/><polygon points="0.8,9.8 1,5.8 4.4,7.2" fill="#272d2e"/></g></svg>
<span class="t" style="top:133.00px;left:153.60px;transform-origin:0 50%;transform:scaleX(0.959);font-size:10px;color:#33383a;">A</span>
<svg style="left:166px;top:134px;" width="11" height="11" viewBox="0 0 11 11"><g transform="translate(0.00,0.60)"><polygon points="0.6,0.6 9.4,5 0.6,9.4" fill="#272d2e"/></g></svg>
<div style="left:196.60px;top:136.60px;width:6.00px;height:6.00px;background:#33383a;"></div>
<div style="left:218.00px;top:137.00px;width:68.00px;height:5.80px;background:#4a4e4f;border-radius:1px;"></div>
<div style="left:286.00px;top:137.00px;width:22.00px;height:5.80px;background:#b9bbbc;border-radius:0px 1px 1px 0px;"></div>
<svg style="left:280px;top:134px;" width="11" height="11" viewBox="0 0 11 11"><g transform="translate(0.40,0.90)"><circle cx="5" cy="5" r="4.6" fill="#272d2e"/></g></svg>
<div style="left:145.30px;top:150.20px;width:166.50px;height:15.80px;background:#b9bbbc;"></div>
<span class="t" style="top:151.00px;left:149.00px;transform-origin:0 50%;transform:scaleX(0.952);font-size:10px;color:#33383a;">Name</span>
<svg style="left:301px;top:154px;" width="8" height="8" viewBox="0 0 8 8"><g transform="translate(0.50,0.50)"><polygon points="0,0 7,0 3.5,7" fill="#272d2e"/></g></svg>
<svg style="left:148px;top:169px;" width="15" height="17" viewBox="0 0 15 17"><g transform="translate(0.20,0.40)"><path d="M0.6,0.6 H8.6 L13,5 V15 H0.6 Z" fill="#f4f5f6" stroke="#33383a" stroke-width="1"/><path d="M8.6,0.6 V5 H13" fill="none" stroke="#33383a" stroke-width="0.9"/><text x="6.9" y="13.4" font-size="5.2" font-family="Liberation Mono,monospace" text-anchor="middle" fill="#33383a" textLength="10.4" lengthAdjust="spacingAndGlyphs">KIT</text></g></svg>
<span class="t" style="top:171.00px;left:166.20px;transform-origin:0 50%;transform:scaleX(0.995);font-size:10px;color:#33383a;">80s Drumbox 01</span>
<div style="left:145.30px;top:188.20px;width:166.50px;height:20.40px;background:#8ccbfa;"></div>
<svg style="left:148px;top:190px;" width="15" height="17" viewBox="0 0 15 17"><g transform="translate(0.20,0.40)"><path d="M0.6,0.6 H8.6 L13,5 V15 H0.6 Z" fill="#f4f5f6" stroke="#33383a" stroke-width="1"/><path d="M8.6,0.6 V5 H13" fill="none" stroke="#33383a" stroke-width="0.9"/><text x="6.9" y="13.4" font-size="5.2" font-family="Liberation Mono,monospace" text-anchor="middle" fill="#33383a" textLength="10.4" lengthAdjust="spacingAndGlyphs">KIT</text></g></svg>
<span class="t" style="top:192.00px;left:166.20px;transform-origin:0 50%;transform:scaleX(1.000);font-size:10px;color:#33383a;">80s Drumbox 02</span>
<svg style="left:148px;top:211px;" width="15" height="17" viewBox="0 0 15 17"><g transform="translate(0.20,0.40)"><path d="M0.6,0.6 H8.6 L13,5 V15 H0.6 Z" fill="#f4f5f6" stroke="#33383a" stroke-width="1"/><path d="M8.6,0.6 V5 H13" fill="none" stroke="#33383a" stroke-width="0.9"/><text x="6.9" y="13.4" font-size="5.2" font-family="Liberation Mono,monospace" text-anchor="middle" fill="#33383a" textLength="10.4" lengthAdjust="spacingAndGlyphs">KIT</text></g></svg>
<span class="t" style="top:213.00px;left:166.20px;transform-origin:0 50%;transform:scaleX(0.964);font-size:10px;color:#33383a;">Boom Bap</span>
<div style="left:145.30px;top:230.20px;width:166.50px;height:20.40px;background:#dfe2e5;"></div>
<svg style="left:148px;top:232px;" width="15" height="17" viewBox="0 0 15 17"><g transform="translate(0.20,0.40)"><path d="M0.6,0.6 H8.6 L13,5 V15 H0.6 Z" fill="#f4f5f6" stroke="#33383a" stroke-width="1"/><path d="M8.6,0.6 V5 H13" fill="none" stroke="#33383a" stroke-width="0.9"/><text x="6.9" y="13.4" font-size="5.2" font-family="Liberation Mono,monospace" text-anchor="middle" fill="#33383a" textLength="10.4" lengthAdjust="spacingAndGlyphs">KIT</text></g></svg>
<span class="t" style="top:234.00px;left:166.20px;transform-origin:0 50%;transform:scaleX(0.991);font-size:10px;color:#33383a;">Crate Digger</span>
<svg style="left:148px;top:253px;" width="15" height="17" viewBox="0 0 15 17"><g transform="translate(0.20,0.40)"><path d="M0.6,0.6 H8.6 L13,5 V15 H0.6 Z" fill="#f4f5f6" stroke="#33383a" stroke-width="1"/><path d="M8.6,0.6 V5 H13" fill="none" stroke="#33383a" stroke-width="0.9"/><text x="6.9" y="13.4" font-size="5.2" font-family="Liberation Mono,monospace" text-anchor="middle" fill="#33383a" textLength="10.4" lengthAdjust="spacingAndGlyphs">KIT</text></g></svg>
<span class="t" style="top:255.00px;left:166.20px;transform-origin:0 50%;transform:scaleX(0.994);font-size:10px;color:#33383a;">Dusty</span>
<div style="left:145.30px;top:272.20px;width:166.50px;height:20.40px;background:#dfe2e5;"></div>
<svg style="left:148px;top:274px;" width="15" height="17" viewBox="0 0 15 17"><g transform="translate(0.20,0.40)"><path d="M0.6,0.6 H8.6 L13,5 V15 H0.6 Z" fill="#f4f5f6" stroke="#33383a" stroke-width="1"/><path d="M8.6,0.6 V5 H13" fill="none" stroke="#33383a" stroke-width="0.9"/><text x="6.9" y="13.4" font-size="5.2" font-family="Liberation Mono,monospace" text-anchor="middle" fill="#33383a" textLength="10.4" lengthAdjust="spacingAndGlyphs">KIT</text></g></svg>
<span class="t" style="top:276.00px;left:166.20px;transform-origin:0 50%;transform:scaleX(0.975);font-size:10px;color:#33383a;">FunkyBreak</span>
<svg style="left:148px;top:295px;" width="15" height="17" viewBox="0 0 15 17"><g transform="translate(0.20,0.40)"><path d="M0.6,0.6 H8.6 L13,5 V15 H0.6 Z" fill="#f4f5f6" stroke="#33383a" stroke-width="1"/><path d="M8.6,0.6 V5 H13" fill="none" stroke="#33383a" stroke-width="0.9"/><text x="6.9" y="13.4" font-size="5.2" font-family="Liberation Mono,monospace" text-anchor="middle" fill="#33383a" textLength="10.4" lengthAdjust="spacingAndGlyphs">KIT</text></g></svg>
<span class="t" style="top:297.00px;left:166.20px;transform-origin:0 50%;transform:scaleX(0.957);font-size:10px;color:#33383a;">Hand Perc</span>
<div style="left:145.30px;top:314.20px;width:166.50px;height:20.40px;background:#dfe2e5;"></div>
<svg style="left:148px;top:316px;" width="15" height="17" viewBox="0 0 15 17"><g transform="translate(0.20,0.40)"><path d="M0.6,0.6 H8.6 L13,5 V15 H0.6 Z" fill="#f4f5f6" stroke="#33383a" stroke-width="1"/><path d="M8.6,0.6 V5 H13" fill="none" stroke="#33383a" stroke-width="0.9"/><text x="6.9" y="13.4" font-size="5.2" font-family="Liberation Mono,monospace" text-anchor="middle" fill="#33383a" textLength="10.4" lengthAdjust="spacingAndGlyphs">KIT</text></g></svg>
<span class="t" style="top:318.00px;left:166.20px;transform-origin:0 50%;transform:scaleX(0.983);font-size:10px;color:#33383a;">MouthMusic</span>
<svg style="left:148px;top:337px;" width="15" height="17" viewBox="0 0 15 17"><g transform="translate(0.20,0.40)"><path d="M0.6,0.6 H8.6 L13,5 V15 H0.6 Z" fill="#f4f5f6" stroke="#33383a" stroke-width="1"/><path d="M8.6,0.6 V5 H13" fill="none" stroke="#33383a" stroke-width="0.9"/><text x="6.9" y="13.4" font-size="5.2" font-family="Liberation Mono,monospace" text-anchor="middle" fill="#33383a" textLength="10.4" lengthAdjust="spacingAndGlyphs">KIT</text></g></svg>
<span class="t" style="top:339.00px;left:166.20px;transform-origin:0 50%;transform:scaleX(0.970);font-size:10px;color:#33383a;">Oberheim DX DMX</span>
<div style="left:145.30px;top:356.20px;width:166.50px;height:20.40px;background:#dfe2e5;"></div>
<svg style="left:148px;top:358px;" width="15" height="17" viewBox="0 0 15 17"><g transform="translate(0.20,0.40)"><path d="M0.6,0.6 H8.6 L13,5 V15 H0.6 Z" fill="#f4f5f6" stroke="#33383a" stroke-width="1"/><path d="M8.6,0.6 V5 H13" fill="none" stroke="#33383a" stroke-width="0.9"/><text x="6.9" y="13.4" font-size="5.2" font-family="Liberation Mono,monospace" text-anchor="middle" fill="#33383a" textLength="10.4" lengthAdjust="spacingAndGlyphs">KIT</text></g></svg>
<span class="t" style="top:360.00px;left:166.20px;transform-origin:0 50%;transform:scaleX(0.969);font-size:10px;color:#33383a;">Old School</span>
<svg style="left:148px;top:379px;" width="15" height="17" viewBox="0 0 15 17"><g transform="translate(0.20,0.40)"><path d="M0.6,0.6 H8.6 L13,5 V15 H0.6 Z" fill="#f4f5f6" stroke="#33383a" stroke-width="1"/><path d="M8.6,0.6 V5 H13" fill="none" stroke="#33383a" stroke-width="0.9"/><text x="6.9" y="13.4" font-size="5.2" font-family="Liberation Mono,monospace" text-anchor="middle" fill="#33383a" textLength="10.4" lengthAdjust="spacingAndGlyphs">KIT</text></g></svg>
<span class="t" style="top:381.00px;left:166.20px;transform-origin:0 50%;transform:scaleX(0.964);font-size:10px;color:#33383a;">Scratched</span>
<div style="left:147.50px;top:442.40px;width:105.50px;height:4.60px;background:#b9bbbc;border-radius:2.3px;"></div>
<svg style="left:140px;top:449px;" width="41" height="7" viewBox="0 0 41 7"><g transform="translate(0.00,0.40)"><circle cx="3.00" cy="3" r="1.9" fill="#cfd2d3"/><circle cx="8.05" cy="3" r="1.9" fill="#cfd2d3"/><circle cx="13.10" cy="3" r="1.9" fill="#cfd2d3"/><circle cx="18.15" cy="3" r="1.9" fill="#cfd2d3"/><circle cx="23.20" cy="3" r="1.9" fill="#cfd2d3"/><circle cx="28.25" cy="3" r="1.9" fill="#cfd2d3"/><circle cx="33.30" cy="3" r="1.9" fill="#cfd2d3"/></g></svg>
<div style="left:319.00px;top:55.30px;width:899.00px;height:17.70px;background:#656d71;border-radius:3px 0px 0px 0px;"></div>
<div style="left:319.00px;top:72.00px;width:899.00px;height:39.00px;background:#eef0f1;"></div>
<div style="left:319.00px;top:111.00px;width:899.00px;height:283.00px;background:#656d71;border-radius:0px 0px 2px 2px;"></div>
<div style="left:327.00px;top:57.40px;width:55.00px;height:15.10px;background:#eef0f1;border-radius:3px 3px 0px 0px;"></div>
<span class="t" style="top:59.00px;left:334.40px;transform-origin:0 50%;transform:scaleX(0.952);font-size:9px;color:#272d2e;font-weight:bold;">PATTERN</span>
<span class="t" style="top:59.00px;left:420.80px;transform-origin:0 50%;transform:scaleX(0.969);font-size:9px;color:#f4f5f5;font-weight:bold;">LAYER MIXER</span>
<span class="t" style="top:59.00px;left:510.00px;transform-origin:0 50%;transform:scaleX(0.989);font-size:9px;color:#f4f5f5;font-weight:bold;">PAD MIXER</span>
<span class="t" style="top:59.00px;left:588.00px;transform-origin:0 50%;transform:scaleX(0.944);font-size:9px;color:#f4f5f5;font-weight:bold;">GLOBAL MIXER</span>
<span class="t" style="top:59.00px;left:699.60px;transform-origin:0 50%;transform:scaleX(0.892);font-size:9px;color:#f4f5f5;font-weight:bold;">SCENES</span>
<span class="t" style="top:59.00px;left:782.60px;transform-origin:0 50%;transform:scaleX(0.943);font-size:9px;color:#f4f5f5;font-weight:bold;">SONG</span>
<span class="t" style="top:59.00px;left:1158.80px;transform-origin:0 50%;transform:scaleX(0.978);font-size:9px;color:#f4f5f5;font-weight:bold;">MAPPING</span>
<div style="left:325.00px;top:78.00px;width:37.00px;height:16.60px;background:#b9bbbc;border-radius:2.5px;"></div>
<span class="t" style="top:80.00px;left:343.50px;transform:translateX(-50%) scaleX(0.993);font-size:10px;color:#33383a;">Single</span>
<div style="left:367.00px;top:78.00px;width:30.40px;height:16.60px;background:#a8aaab;border-radius:2.5px 0px 0px 2.5px;"></div>
<div style="left:397.40px;top:78.00px;width:13.60px;height:16.60px;background:#b9bbbc;border-radius:0px 2.5px 2.5px 0px;"></div>
<span class="t" style="top:80.00px;left:382.00px;transform:translateX(-50%) scaleX(0.989);font-size:10px;color:#33383a;">64</span>
<span class="t" style="top:76.00px;left:404.00px;transform:translateX(-50%) scaleX(1.000);font-size:8px;color:#33383a;">+</span>
<span class="t" style="top:84.00px;left:404.00px;transform:translateX(-50%) scaleX(1.300);font-size:9px;color:#33383a;">-</span>
<div style="left:415.60px;top:78.00px;width:41.40px;height:16.60px;background:#b9bbbc;border-radius:2.5px;"></div>
<span class="t" style="top:80.00px;left:418.00px;transform-origin:0 50%;transform:scaleX(1.028);font-size:10px;color:#33383a;">1/16</span>
<svg style="left:445px;top:83px;" width="8" height="7" viewBox="0 0 8 7"><g transform="translate(0.30,0.10)"><polygon points="0,0 7,0 3.5,6.6" fill="#272d2e"/></g></svg>
<div style="left:461.00px;top:78.00px;width:43.00px;height:16.60px;background:#b9bbbc;border-radius:2.5px;"></div>
<span class="t" style="top:80.00px;left:482.50px;transform:translateX(-50%) scaleX(0.969);font-size:10px;color:#33383a;">Gated</span>
<div style="left:506.60px;top:78.00px;width:43.20px;height:16.60px;background:#b9bbbc;border-radius:2.5px;"></div>
<span class="t" style="top:80.00px;left:528.20px;transform:translateX(-50%) scaleX(0.980);font-size:10px;color:#33383a;">Restart</span>
<div style="left:556.00px;top:78.00px;width:14.80px;height:16.60px;background:#b9bbbc;border-radius:2.5px;"></div>
<svg style="left:559px;top:82px;" width="8" height="8" viewBox="0 0 8 8"><g transform="translate(0.50,0.90)"><polygon points="7,0 0,3.5 7,7" fill="#272d2e"/></g></svg>
<div style="left:574.00px;top:78.00px;width:14.60px;height:16.60px;background:#b9bbbc;border-radius:2.5px;"></div>
<svg style="left:578px;top:82px;" width="8" height="8" viewBox="0 0 8 8"><g transform="translate(0.10,0.90)"><polygon points="0,0 7,3.5 0,7" fill="#272d2e"/></g></svg>
<div style="left:594.00px;top:78.00px;width:43.00px;height:16.60px;background:#b9bbbc;border-radius:2.5px;"></div>
<span class="t" style="top:80.00px;left:615.50px;transform:translateX(-50%) scaleX(0.984);font-size:10px;color:#33383a;">Quantize</span>
<div style="left:639.40px;top:78.00px;width:47.20px;height:16.60px;background:#b9bbbc;border-radius:2.5px;"></div>
<span class="t" style="top:80.00px;left:663.00px;transform:translateX(-50%) scaleX(1.007);font-size:10px;color:#33383a;">Duplicate</span>
<div style="left:689.00px;top:78.00px;width:43.40px;height:16.60px;background:#b9bbbc;border-radius:2.5px;"></div>
<span class="t" style="top:80.00px;left:710.70px;transform:translateX(-50%) scaleX(0.974);font-size:10px;color:#33383a;">Remix</span>
<div style="left:737.00px;top:78.00px;width:75.00px;height:16.60px;background:#b9bbbc;border-radius:2.5px;"></div>
<span class="t" style="top:80.00px;left:738.60px;transform-origin:0 50%;transform:scaleX(0.992);font-size:10px;color:#33383a;">Velocity</span>
<svg style="left:799px;top:83px;" width="8" height="7" viewBox="0 0 8 7"><g transform="translate(0.90,0.10)"><polygon points="0,0 7,0 3.5,6.6" fill="#272d2e"/></g></svg>
<div style="left:817.00px;top:78.00px;width:83.60px;height:16.60px;background:#a8aaab;border-radius:2.5px;"></div>
<span class="t" style="top:80.00px;left:858.80px;transform:translateX(-50%) scaleX(1.000);font-size:10px;color:#33383a;">Pattern 1</span>
<div style="left:938.40px;top:78.00px;width:38.60px;height:16.60px;background:#b9bbbc;border-radius:2.5px;"></div>
<span class="t" style="top:80.00px;left:946.60px;transform:translateX(-50%) scaleX(1.000);font-size:10px;color:#1b2021;">1</span>
<span class="t" style="top:80.00px;left:957.80px;transform:translateX(-50%) scaleX(1.000);font-size:10px;color:#7d8285;">/</span>
<span class="t" style="top:80.00px;left:968.80px;transform:translateX(-50%) scaleX(1.000);font-size:10px;color:#1b2021;">1</span>
<span class="t" style="top:95.00px;left:334.00px;transform-origin:0 50%;transform:scaleX(0.899);font-size:9px;color:#858b8e;">View</span>
<span class="t" style="top:95.00px;left:378.40px;transform-origin:0 50%;transform:scaleX(0.878);font-size:9px;color:#858b8e;">Steps</span>
<span class="t" style="top:95.00px;left:423.40px;transform-origin:0 50%;transform:scaleX(0.894);font-size:9px;color:#858b8e;">Length</span>
<span class="t" style="top:95.00px;left:489.00px;transform-origin:0 50%;transform:scaleX(0.876);font-size:9px;color:#858b8e;">Playback</span>
<span class="t" style="top:95.00px;left:560.40px;transform-origin:0 50%;transform:scaleX(0.905);font-size:9px;color:#858b8e;">Nudge</span>
<span class="t" style="top:95.00px;left:655.40px;transform-origin:0 50%;transform:scaleX(0.877);font-size:9px;color:#858b8e;">Edit</span>
<span class="t" style="top:95.00px;left:751.00px;transform-origin:0 50%;transform:scaleX(0.917);font-size:9px;color:#858b8e;">Drag Edits...</span>
<span class="t" style="top:95.00px;left:832.60px;transform-origin:0 50%;transform:scaleX(0.908);font-size:9px;color:#858b8e;">Pattern Name</span>
<span class="t" style="top:95.00px;left:929.80px;transform-origin:0 50%;transform:scaleX(0.920);font-size:9px;color:#858b8e;">Tempo Modifier</span>
<span class="t" style="top:95.00px;left:996.70px;transform-origin:0 50%;transform:scaleX(0.897);font-size:9px;color:#858b8e;">Swing</span>
<svg style="left:998px;top:76px;" width="20" height="21" viewBox="0 0 20 21"><g transform="translate(0.60,0.80)"><circle cx="9.6" cy="9.6" r="8.6" fill="#b9bbbc"/><polygon points="7.61,11.77 11.59,11.77 13.50,18.37 5.70,18.37" fill="#eef0f1"/><circle cx="9.6" cy="9.6" r="3.61" fill="#eef0f1"/></g></svg>
<div style="left:1029.40px;top:92.40px;width:11.60px;height:16.80px;background:#8ccbfa;border-radius:2.5px;"></div>
<svg style="left:1032px;top:98px;" width="6" height="6" viewBox="0 0 6 6"><g transform="translate(0.70,0.40)"><circle cx="2.5" cy="2.5" r="2.1" fill="#ffffff"/></g></svg>
<div style="left:1042.85px;top:92.40px;width:11.60px;height:16.80px;background:#b9bbbc;border-radius:2.5px;"></div>
<svg style="left:1046px;top:98px;" width="6" height="6" viewBox="0 0 6 6"><g transform="translate(0.15,0.40)"><circle cx="2.5" cy="2.5" r="2.1" fill="#c1c3c4"/></g></svg>
<div style="left:1056.30px;top:92.40px;width:11.60px;height:16.80px;background:#b9bbbc;border-radius:2.5px;"></div>
<svg style="left:1059px;top:98px;" width="6" height="6" viewBox="0 0 6 6"><g transform="translate(0.60,0.40)"><circle cx="2.5" cy="2.5" r="2.1" fill="#c1c3c4"/></g></svg>
<div style="left:1069.75px;top:92.40px;width:11.60px;height:16.80px;background:#b9bbbc;border-radius:2.5px;"></div>
<svg style="left:1073px;top:98px;" width="6" height="6" viewBox="0 0 6 6"><g transform="translate(0.05,0.40)"><circle cx="2.5" cy="2.5" r="2.1" fill="#c1c3c4"/></g></svg>
<div style="left:1083.20px;top:92.40px;width:11.60px;height:16.80px;background:#b9bbbc;border-radius:2.5px;"></div>
<svg style="left:1086px;top:98px;" width="6" height="6" viewBox="0 0 6 6"><g transform="translate(0.50,0.40)"><circle cx="2.5" cy="2.5" r="2.1" fill="#c1c3c4"/></g></svg>
<div style="left:1096.65px;top:92.40px;width:11.60px;height:16.80px;background:#b9bbbc;border-radius:2.5px;"></div>
<svg style="left:1099px;top:98px;" width="6" height="6" viewBox="0 0 6 6"><g transform="translate(0.95,0.40)"><circle cx="2.5" cy="2.5" r="2.1" fill="#c1c3c4"/></g></svg>
<div style="left:1110.10px;top:92.40px;width:11.60px;height:16.80px;background:#b9bbbc;border-radius:2.5px;"></div>
<svg style="left:1113px;top:98px;" width="6" height="6" viewBox="0 0 6 6"><g transform="translate(0.40,0.40)"><circle cx="2.5" cy="2.5" r="2.1" fill="#c1c3c4"/></g></svg>
<div style="left:1123.55px;top:92.40px;width:11.60px;height:16.80px;background:#b9bbbc;border-radius:2.5px;"></div>
<svg style="left:1126px;top:98px;" width="6" height="6" viewBox="0 0 6 6"><g transform="translate(0.85,0.40)"><circle cx="2.5" cy="2.5" r="2.1" fill="#c1c3c4"/></g></svg>
<div style="left:1137.00px;top:92.40px;width:11.60px;height:16.80px;background:#b9bbbc;border-radius:2.5px;"></div>
<svg style="left:1140px;top:98px;" width="6" height="6" viewBox="0 0 6 6"><g transform="translate(0.30,0.40)"><circle cx="2.5" cy="2.5" r="2.1" fill="#c1c3c4"/></g></svg>
<div style="left:1150.45px;top:92.40px;width:11.60px;height:16.80px;background:#b9bbbc;border-radius:2.5px;"></div>
<svg style="left:1153px;top:98px;" width="6" height="6" viewBox="0 0 6 6"><g transform="translate(0.75,0.40)"><circle cx="2.5" cy="2.5" r="2.1" fill="#c1c3c4"/></g></svg>
<div style="left:1163.90px;top:92.40px;width:11.60px;height:16.80px;background:#b9bbbc;border-radius:2.5px;"></div>
<svg style="left:1167px;top:98px;" width="6" height="6" viewBox="0 0 6 6"><g transform="translate(0.20,0.40)"><circle cx="2.5" cy="2.5" r="2.1" fill="#c1c3c4"/></g></svg>
<div style="left:1177.35px;top:92.40px;width:11.60px;height:16.80px;background:#b9bbbc;border-radius:2.5px;"></div>
<svg style="left:1180px;top:98px;" width="6" height="6" viewBox="0 0 6 6"><g transform="translate(0.65,0.40)"><circle cx="2.5" cy="2.5" r="2.1" fill="#c1c3c4"/></g></svg>
<div style="left:1190.80px;top:92.40px;width:11.60px;height:16.80px;background:#b9bbbc;border-radius:2.5px;"></div>
<svg style="left:1194px;top:98px;" width="6" height="6" viewBox="0 0 6 6"><g transform="translate(0.10,0.40)"><circle cx="2.5" cy="2.5" r="2.1" fill="#c1c3c4"/></g></svg>
<div style="left:1204.25px;top:92.40px;width:11.60px;height:16.80px;background:#b9bbbc;border-radius:2.5px;"></div>
<svg style="left:1207px;top:98px;" width="6" height="6" viewBox="0 0 6 6"><g transform="translate(0.55,0.40)"><circle cx="2.5" cy="2.5" r="2.1" fill="#c1c3c4"/></g></svg>
<div style="left:1036.00px;top:74.00px;width:11.40px;height:16.60px;background:#b9bbbc;border-radius:2.5px;"></div>
<svg style="left:1039px;top:79px;" width="6" height="6" viewBox="0 0 6 6"><g transform="translate(0.20,0.80)"><circle cx="2.5" cy="2.5" r="2.1" fill="#c1c3c4"/></g></svg>
<div style="left:1049.45px;top:74.00px;width:11.40px;height:16.60px;background:#b9bbbc;border-radius:2.5px;"></div>
<svg style="left:1052px;top:79px;" width="6" height="6" viewBox="0 0 6 6"><g transform="translate(0.65,0.80)"><circle cx="2.5" cy="2.5" r="2.1" fill="#c1c3c4"/></g></svg>
<div style="left:1076.35px;top:74.00px;width:11.40px;height:16.60px;background:#b9bbbc;border-radius:2.5px;"></div>
<svg style="left:1079px;top:79px;" width="6" height="6" viewBox="0 0 6 6"><g transform="translate(0.55,0.80)"><circle cx="2.5" cy="2.5" r="2.1" fill="#c1c3c4"/></g></svg>
<div style="left:1089.80px;top:74.00px;width:11.40px;height:16.60px;background:#b9bbbc;border-radius:2.5px;"></div>
<svg style="left:1093px;top:79px;" width="6" height="6" viewBox="0 0 6 6"><g transform="translate(0.00,0.80)"><circle cx="2.5" cy="2.5" r="2.1" fill="#c1c3c4"/></g></svg>
<div style="left:1103.25px;top:74.00px;width:11.40px;height:16.60px;background:#b9bbbc;border-radius:2.5px;"></div>
<svg style="left:1106px;top:79px;" width="6" height="6" viewBox="0 0 6 6"><g transform="translate(0.45,0.80)"><circle cx="2.5" cy="2.5" r="2.1" fill="#c1c3c4"/></g></svg>
<div style="left:1130.15px;top:74.00px;width:11.40px;height:16.60px;background:#b9bbbc;border-radius:2.5px;"></div>
<svg style="left:1133px;top:79px;" width="6" height="6" viewBox="0 0 6 6"><g transform="translate(0.35,0.80)"><circle cx="2.5" cy="2.5" r="2.1" fill="#c1c3c4"/></g></svg>
<div style="left:1143.60px;top:74.00px;width:11.40px;height:16.60px;background:#b9bbbc;border-radius:2.5px;"></div>
<svg style="left:1146px;top:79px;" width="6" height="6" viewBox="0 0 6 6"><g transform="translate(0.80,0.80)"><circle cx="2.5" cy="2.5" r="2.1" fill="#c1c3c4"/></g></svg>
<div style="left:1170.50px;top:74.00px;width:11.40px;height:16.60px;background:#b9bbbc;border-radius:2.5px;"></div>
<svg style="left:1173px;top:79px;" width="6" height="6" viewBox="0 0 6 6"><g transform="translate(0.70,0.80)"><circle cx="2.5" cy="2.5" r="2.1" fill="#c1c3c4"/></g></svg>
<div style="left:1183.95px;top:74.00px;width:11.40px;height:16.60px;background:#b9bbbc;border-radius:2.5px;"></div>
<svg style="left:1187px;top:79px;" width="6" height="6" viewBox="0 0 6 6"><g transform="translate(0.15,0.80)"><circle cx="2.5" cy="2.5" r="2.1" fill="#c1c3c4"/></g></svg>
<div style="left:1197.40px;top:74.00px;width:11.40px;height:16.60px;background:#b9bbbc;border-radius:2.5px;"></div>
<svg style="left:1200px;top:79px;" width="6" height="6" viewBox="0 0 6 6"><g transform="translate(0.60,0.80)"><circle cx="2.5" cy="2.5" r="2.1" fill="#c1c3c4"/></g></svg>
<svg style="left:451px;top:113px;" width="5" height="12" viewBox="0 0 5 12"><g transform="translate(0.30,0.00)"><rect x="1.3" y="0" width="1.4" height="11.4" fill="#b9bdbf"/></g></svg>
<span class="t" style="top:112.00px;left:455.50px;transform-origin:0 50%;transform:scaleX(1.100);font-size:8.5px;color:#f4f5f5;font-weight:bold;">1</span>
<svg style="left:497px;top:113px;" width="5" height="12" viewBox="0 0 5 12"><g transform="translate(0.81,0.00)"><rect x="1.3" y="0" width="1.4" height="11.4" fill="#b9bdbf"/></g></svg>
<span class="t" style="top:112.00px;left:502.01px;transform-origin:0 50%;transform:scaleX(1.100);font-size:8.5px;color:#f4f5f5;font-weight:bold;">5</span>
<svg style="left:544px;top:113px;" width="5" height="12" viewBox="0 0 5 12"><g transform="translate(0.32,0.00)"><rect x="1.3" y="0" width="1.4" height="11.4" fill="#b9bdbf"/></g></svg>
<span class="t" style="top:112.00px;left:548.52px;transform-origin:0 50%;transform:scaleX(1.100);font-size:8.5px;color:#f4f5f5;font-weight:bold;">9</span>
<svg style="left:590px;top:113px;" width="5" height="12" viewBox="0 0 5 12"><g transform="translate(0.82,0.00)"><rect x="1.3" y="0" width="1.4" height="11.4" fill="#b9bdbf"/></g></svg>
<span class="t" style="top:112.00px;left:595.02px;transform-origin:0 50%;transform:scaleX(1.100);font-size:8.5px;color:#f4f5f5;font-weight:bold;">13</span>
<svg style="left:637px;top:113px;" width="5" height="12" viewBox="0 0 5 12"><g transform="translate(0.33,0.00)"><rect x="1.3" y="0" width="1.4" height="11.4" fill="#b9bdbf"/></g></svg>
<span class="t" style="top:112.00px;left:641.53px;transform-origin:0 50%;transform:scaleX(1.100);font-size:8.5px;color:#f4f5f5;font-weight:bold;">17</span>
<svg style="left:683px;top:113px;" width="5" height="12" viewBox="0 0 5 12"><g transform="translate(0.84,0.00)"><rect x="1.3" y="0" width="1.4" height="11.4" fill="#b9bdbf"/></g></svg>
<span class="t" style="top:112.00px;left:688.04px;transform-origin:0 50%;transform:scaleX(1.100);font-size:8.5px;color:#f4f5f5;font-weight:bold;">21</span>
<svg style="left:730px;top:113px;" width="5" height="12" viewBox="0 0 5 12"><g transform="translate(0.35,0.00)"><rect x="1.3" y="0" width="1.4" height="11.4" fill="#b9bdbf"/></g></svg>
<span class="t" style="top:112.00px;left:734.55px;transform-origin:0 50%;transform:scaleX(1.100);font-size:8.5px;color:#f4f5f5;font-weight:bold;">25</span>
<svg style="left:776px;top:113px;" width="5" height="12" viewBox="0 0 5 12"><g transform="translate(0.86,0.00)"><rect x="1.3" y="0" width="1.4" height="11.4" fill="#b9bdbf"/></g></svg>
<span class="t" style="top:112.00px;left:781.06px;transform-origin:0 50%;transform:scaleX(1.100);font-size:8.5px;color:#f4f5f5;font-weight:bold;">29</span>
<svg style="left:823px;top:113px;" width="5" height="12" viewBox="0 0 5 12"><g transform="translate(0.36,0.00)"><rect x="1.3" y="0" width="1.4" height="11.4" fill="#b9bdbf"/></g></svg>
<span class="t" style="top:112.00px;left:827.56px;transform-origin:0 50%;transform:scaleX(1.100);font-size:8.5px;color:#f4f5f5;font-weight:bold;">33</span>
<svg style="left:869px;top:113px;" width="5" height="12" viewBox="0 0 5 12"><g transform="translate(0.87,0.00)"><rect x="1.3" y="0" width="1.4" height="11.4" fill="#b9bdbf"/></g></svg>
<span class="t" style="top:112.00px;left:874.07px;transform-origin:0 50%;transform:scaleX(1.100);font-size:8.5px;color:#f4f5f5;font-weight:bold;">37</span>
<svg style="left:916px;top:113px;" width="5" height="12" viewBox="0 0 5 12"><g transform="translate(0.38,0.00)"><rect x="1.3" y="0" width="1.4" height="11.4" fill="#b9bdbf"/></g></svg>
<span class="t" style="top:112.00px;left:920.58px;transform-origin:0 50%;transform:scaleX(1.100);font-size:8.5px;color:#f4f5f5;font-weight:bold;">41</span>
<svg style="left:962px;top:113px;" width="5" height="12" viewBox="0 0 5 12"><g transform="translate(0.89,0.00)"><rect x="1.3" y="0" width="1.4" height="11.4" fill="#b9bdbf"/></g></svg>
<span class="t" style="top:112.00px;left:967.09px;transform-origin:0 50%;transform:scaleX(1.100);font-size:8.5px;color:#f4f5f5;font-weight:bold;">45</span>
<svg style="left:1009px;top:113px;" width="5" height="12" viewBox="0 0 5 12"><g transform="translate(0.40,0.00)"><rect x="1.3" y="0" width="1.4" height="11.4" fill="#b9bdbf"/></g></svg>
<span class="t" style="top:112.00px;left:1013.60px;transform-origin:0 50%;transform:scaleX(1.100);font-size:8.5px;color:#f4f5f5;font-weight:bold;">49</span>
<svg style="left:1055px;top:113px;" width="5" height="12" viewBox="0 0 5 12"><g transform="translate(0.90,0.00)"><rect x="1.3" y="0" width="1.4" height="11.4" fill="#b9bdbf"/></g></svg>
<span class="t" style="top:112.00px;left:1060.10px;transform-origin:0 50%;transform:scaleX(1.100);font-size:8.5px;color:#f4f5f5;font-weight:bold;">53</span>
<svg style="left:1102px;top:113px;" width="5" height="12" viewBox="0 0 5 12"><g transform="translate(0.41,0.00)"><rect x="1.3" y="0" width="1.4" height="11.4" fill="#b9bdbf"/></g></svg>
<span class="t" style="top:112.00px;left:1106.61px;transform-origin:0 50%;transform:scaleX(1.100);font-size:8.5px;color:#f4f5f5;font-weight:bold;">57</span>
<svg style="left:1148px;top:113px;" width="5" height="12" viewBox="0 0 5 12"><g transform="translate(0.92,0.00)"><rect x="1.3" y="0" width="1.4" height="11.4" fill="#b9bdbf"/></g></svg>
<span class="t" style="top:112.00px;left:1153.12px;transform-origin:0 50%;transform:scaleX(1.100);font-size:8.5px;color:#f4f5f5;font-weight:bold;">61</span>
<svg style="left:453px;top:124px;" width="746" height="258" viewBox="0 0 746 258"><g transform="translate(0.30,0.40)"><rect x="0.00" y="0.00" width="745.30" height="256.60" fill="#eef0f1"/><rect x="46.51" y="0.00" width="46.51" height="256.60" fill="#e7eaec"/><rect x="139.52" y="0.00" width="46.51" height="256.60" fill="#e7eaec"/><rect x="232.54" y="0.00" width="46.51" height="256.60" fill="#e7eaec"/><rect x="325.56" y="0.00" width="46.51" height="256.60" fill="#e7eaec"/><rect x="418.57" y="0.00" width="46.51" height="256.60" fill="#e7eaec"/><rect x="511.59" y="0.00" width="46.51" height="256.60" fill="#e7eaec"/><rect x="604.60" y="0.00" width="46.51" height="256.60" fill="#e7eaec"/><rect x="697.62" y="0.00" width="46.51" height="256.60" fill="#e7eaec"/><rect x="360.44" y="0.00" width="384.86" height="15.90" fill="rgba(40,45,48,0.135)"/><rect x="0.00" y="15.90" width="745.30" height="15.90" fill="rgba(120,140,160,0.12)"/><rect x="372.06" y="31.80" width="373.24" height="15.90" fill="rgba(40,45,48,0.135)"/><rect x="372.06" y="47.70" width="373.24" height="15.90" fill="rgba(40,45,48,0.135)"/><rect x="46.51" y="174.20" width="698.79" height="16.00" fill="rgba(40,45,48,0.135)"/><rect x="93.02" y="190.20" width="652.28" height="16.00" fill="rgba(40,45,48,0.135)"/><rect x="93.02" y="238.20" width="652.28" height="18.40" fill="rgba(40,45,48,0.135)"/><rect x="0.00" y="0.00" width="11.60" height="256.60" fill="#a9cbe6"/><rect x="0.00" y="15.90" width="11.60" height="15.90" fill="#a0c2df"/><rect x="11.13" y="0.00" width="1.00" height="256.60" fill="rgba(150,156,160,0.17)"/><rect x="22.75" y="0.00" width="1.00" height="256.60" fill="rgba(150,156,160,0.17)"/><rect x="34.38" y="0.00" width="1.00" height="256.60" fill="rgba(150,156,160,0.17)"/><rect x="45.81" y="0.00" width="1.40" height="256.60" fill="#c0c4c6"/><rect x="57.63" y="0.00" width="1.00" height="256.60" fill="rgba(150,156,160,0.17)"/><rect x="69.26" y="0.00" width="1.00" height="256.60" fill="rgba(150,156,160,0.17)"/><rect x="80.89" y="0.00" width="1.00" height="256.60" fill="rgba(150,156,160,0.17)"/><rect x="92.32" y="0.00" width="1.40" height="256.60" fill="#c0c4c6"/><rect x="104.14" y="0.00" width="1.00" height="256.60" fill="rgba(150,156,160,0.17)"/><rect x="115.77" y="0.00" width="1.00" height="256.60" fill="rgba(150,156,160,0.17)"/><rect x="127.40" y="0.00" width="1.00" height="256.60" fill="rgba(150,156,160,0.17)"/><rect x="138.82" y="0.00" width="1.40" height="256.60" fill="#c0c4c6"/><rect x="150.65" y="0.00" width="1.00" height="256.60" fill="rgba(150,156,160,0.17)"/><rect x="162.28" y="0.00" width="1.00" height="256.60" fill="rgba(150,156,160,0.17)"/><rect x="173.91" y="0.00" width="1.00" height="256.60" fill="rgba(150,156,160,0.17)"/><rect x="185.33" y="0.00" width="1.40" height="256.60" fill="#c0c4c6"/><rect x="197.16" y="0.00" width="1.00" height="256.60" fill="rgba(150,156,160,0.17)"/><rect x="208.79" y="0.00" width="1.00" height="256.60" fill="rgba(150,156,160,0.17)"/><rect x="220.41" y="0.00" width="1.00" height="256.60" fill="rgba(150,156,160,0.17)"/><rect x="231.84" y="0.00" width="1.40" height="256.60" fill="#c0c4c6"/><rect x="243.67" y="0.00" width="1.00" height="256.60" fill="rgba(150,156,160,0.17)"/><rect x="255.29" y="0.00" width="1.00" height="256.60" fill="rgba(150,156,160,0.17)"/><rect x="266.92" y="0.00" width="1.00" height="256.60" fill="rgba(150,156,160,0.17)"/><rect x="278.35" y="0.00" width="1.40" height="256.60" fill="#c0c4c6"/><rect x="290.18" y="0.00" width="1.00" height="256.60" fill="rgba(150,156,160,0.17)"/><rect x="301.80" y="0.00" width="1.00" height="256.60" fill="rgba(150,156,160,0.17)"/><rect x="313.43" y="0.00" width="1.00" height="256.60" fill="rgba(150,156,160,0.17)"/><rect x="324.86" y="0.00" width="1.40" height="256.60" fill="#c0c4c6"/><rect x="336.68" y="0.00" width="1.00" height="256.60" fill="rgba(150,156,160,0.17)"/><rect x="348.31" y="0.00" width="1.00" height="256.60" fill="rgba(150,156,160,0.17)"/><rect x="359.94" y="0.00" width="1.00" height="256.60" fill="rgba(150,156,160,0.17)"/><rect x="371.36" y="0.00" width="1.40" height="256.60" fill="#c0c4c6"/><rect x="383.19" y="0.00" width="1.00" height="256.60" fill="rgba(150,156,160,0.17)"/><rect x="394.82" y="0.00" width="1.00" height="256.60" fill="rgba(150,156,160,0.17)"/><rect x="406.45" y="0.00" width="1.00" height="256.60" fill="rgba(150,156,160,0.17)"/><rect x="417.87" y="0.00" width="1.40" height="256.60" fill="#c0c4c6"/><rect x="429.70" y="0.00" width="1.00" height="256.60" fill="rgba(150,156,160,0.17)"/><rect x="441.33" y="0.00" width="1.00" height="256.60" fill="rgba(150,156,160,0.17)"/><rect x="452.95" y="0.00" width="1.00" height="256.60" fill="rgba(150,156,160,0.17)"/><rect x="464.38" y="0.00" width="1.40" height="256.60" fill="#c0c4c6"/><rect x="476.21" y="0.00" width="1.00" height="256.60" fill="rgba(150,156,160,0.17)"/><rect x="487.83" y="0.00" width="1.00" height="256.60" fill="rgba(150,156,160,0.17)"/><rect x="499.46" y="0.00" width="1.00" height="256.60" fill="rgba(150,156,160,0.17)"/><rect x="510.89" y="0.00" width="1.40" height="256.60" fill="#c0c4c6"/><rect x="522.72" y="0.00" width="1.00" height="256.60" fill="rgba(150,156,160,0.17)"/><rect x="534.34" y="0.00" width="1.00" height="256.60" fill="rgba(150,156,160,0.17)"/><rect x="545.97" y="0.00" width="1.00" height="256.60" fill="rgba(150,156,160,0.17)"/><rect x="557.40" y="0.00" width="1.40" height="256.60" fill="#c0c4c6"/><rect x="569.22" y="0.00" width="1.00" height="256.60" fill="rgba(150,156,160,0.17)"/><rect x="580.85" y="0.00" width="1.00" height="256.60" fill="rgba(150,156,160,0.17)"/><rect x="592.48" y="0.00" width="1.00" height="256.60" fill="rgba(150,156,160,0.17)"/><rect x="603.90" y="0.00" width="1.40" height="256.60" fill="#c0c4c6"/><rect x="615.73" y="0.00" width="1.00" height="256.60" fill="rgba(150,156,160,0.17)"/><rect x="627.36" y="0.00" width="1.00" height="256.60" fill="rgba(150,156,160,0.17)"/><rect x="638.99" y="0.00" width="1.00" height="256.60" fill="rgba(150,156,160,0.17)"/><rect x="650.41" y="0.00" width="1.40" height="256.60" fill="#c0c4c6"/><rect x="662.24" y="0.00" width="1.00" height="256.60" fill="rgba(150,156,160,0.17)"/><rect x="673.87" y="0.00" width="1.00" height="256.60" fill="rgba(150,156,160,0.17)"/><rect x="685.49" y="0.00" width="1.00" height="256.60" fill="rgba(150,156,160,0.17)"/><rect x="696.92" y="0.00" width="1.40" height="256.60" fill="#c0c4c6"/><rect x="708.75" y="0.00" width="1.00" height="256.60" fill="rgba(150,156,160,0.17)"/><rect x="720.37" y="0.00" width="1.00" height="256.60" fill="rgba(150,156,160,0.17)"/><rect x="732.00" y="0.00" width="1.00" height="256.60" fill="rgba(150,156,160,0.17)"/><rect x="0.00" y="15.40" width="745.30" height="1.00" fill="rgba(150,156,160,0.22)"/><rect x="0.00" y="31.30" width="745.30" height="1.00" fill="rgba(150,156,160,0.22)"/><rect x="0.00" y="47.20" width="745.30" height="1.00" fill="rgba(150,156,160,0.22)"/><rect x="0.00" y="63.10" width="745.30" height="1.00" fill="rgba(150,156,160,0.22)"/><rect x="0.00" y="79.00" width="745.30" height="1.00" fill="rgba(150,156,160,0.22)"/><line x1="0" y1="95.20" x2="745.30" y2="95.20" stroke="#d3d6d8" stroke-width="1" stroke-dasharray="3 2"/><rect x="0.00" y="157.70" width="745.30" height="1.00" fill="rgba(150,156,160,0.22)"/><rect x="0.00" y="173.70" width="745.30" height="1.00" fill="rgba(150,156,160,0.22)"/><rect x="0.00" y="189.70" width="745.30" height="1.00" fill="rgba(150,156,160,0.22)"/><rect x="0.00" y="205.70" width="745.30" height="1.00" fill="rgba(150,156,160,0.22)"/><rect x="0.00" y="221.70" width="745.30" height="1.00" fill="rgba(150,156,160,0.22)"/><rect x="0.00" y="237.70" width="745.30" height="1.00" fill="rgba(150,156,160,0.22)"/><rect x="107.86" y="3.05" width="5.20" height="10.00" fill="#22282a" rx="2"/><rect x="200.87" y="3.05" width="5.20" height="10.00" fill="#22282a" rx="2"/><rect x="293.89" y="3.05" width="5.20" height="10.00" fill="#22282a" rx="2"/><rect x="49.72" y="34.85" width="5.20" height="10.00" fill="#22282a" rx="2"/><rect x="235.75" y="34.85" width="5.20" height="10.00" fill="#22282a" rx="2"/><rect x="72.98" y="50.75" width="5.20" height="10.00" fill="#22282a" rx="2"/><rect x="259.01" y="50.75" width="5.20" height="10.00" fill="#22282a" rx="2"/><rect x="3.21" y="177.30" width="5.20" height="10.00" fill="#6c7072" rx="2"/><rect x="14.84" y="177.30" width="5.20" height="10.00" fill="#85898a" rx="2"/><rect x="26.47" y="177.30" width="5.20" height="10.00" fill="#22282a" rx="2"/><rect x="38.09" y="177.30" width="5.20" height="10.00" fill="#4a4e4f" rx="2"/><rect x="49.72" y="193.30" width="5.20" height="10.00" fill="#22282a" rx="2"/><rect x="49.72" y="241.30" width="5.20" height="10.00" fill="#22282a" rx="2"/><rect x="3.21" y="82.55" width="5.20" height="10.00" fill="#6a7074" rx="2"/><path d="M1.50,157.20 V128.10 Q1.50,126.60 3.00,126.60 H8.60 Q10.10,126.60 10.10,128.10 V157.20 Z" fill="#686c6e"/><path d="M13.13,157.20 V125.14 Q13.13,123.64 14.63,123.64 H20.23 Q21.73,123.64 21.73,125.14 V157.20 Z" fill="rgba(205,208,210,0.62)"/><rect x="26.47" y="82.55" width="5.20" height="10.00" fill="rgb(101,104,105)" rx="2"/><path d="M24.75,157.20 V122.21 Q24.75,120.71 26.25,120.71 H31.85 Q33.35,120.71 33.35,122.21 V157.20 Z" fill="#686c6e"/><path d="M36.38,157.20 V119.33 Q36.38,117.83 37.88,117.83 H43.48 Q44.98,117.83 44.98,119.33 V157.20 Z" fill="rgba(205,208,210,0.62)"/><rect x="49.72" y="82.55" width="5.20" height="10.00" fill="rgb(86,89,90)" rx="2"/><path d="M48.01,157.20 V116.54 Q48.01,115.04 49.51,115.04 H55.11 Q56.61,115.04 56.61,116.54 V157.20 Z" fill="#686c6e"/><path d="M59.63,157.20 V113.86 Q59.63,112.36 61.13,112.36 H66.73 Q68.23,112.36 68.23,113.86 V157.20 Z" fill="rgba(205,208,210,0.62)"/><rect x="72.98" y="82.55" width="5.20" height="10.00" fill="rgb(72,75,76)" rx="2"/><path d="M71.26,157.20 V111.32 Q71.26,109.82 72.76,109.82 H78.36 Q79.86,109.82 79.86,111.32 V157.20 Z" fill="#686c6e"/><path d="M82.89,157.20 V108.94 Q82.89,107.44 84.39,107.44 H89.99 Q91.49,107.44 91.49,108.94 V157.20 Z" fill="rgba(205,208,210,0.62)"/><rect x="96.23" y="82.55" width="5.20" height="10.00" fill="rgb(59,62,63)" rx="2"/><path d="M94.52,157.20 V106.75 Q94.52,105.25 96.02,105.25 H101.62 Q103.12,105.25 103.12,106.75 V157.20 Z" fill="#686c6e"/><path d="M106.14,157.20 V104.76 Q106.14,103.26 107.64,103.26 H113.24 Q114.74,103.26 114.74,104.76 V157.20 Z" fill="rgba(205,208,210,0.62)"/><rect x="119.48" y="82.55" width="5.20" height="10.00" fill="rgb(49,52,53)" rx="2"/><path d="M117.77,157.20 V102.99 Q117.77,101.49 119.27,101.49 H124.87 Q126.37,101.49 126.37,102.99 V157.20 Z" fill="#686c6e"/><path d="M129.40,157.20 V101.47 Q129.40,99.97 130.90,99.97 H136.50 Q138.00,99.97 138.00,101.47 V157.20 Z" fill="rgba(205,208,210,0.62)"/><rect x="142.74" y="82.55" width="5.20" height="10.00" fill="rgb(42,45,46)" rx="2"/><path d="M141.02,157.20 V100.20 Q141.02,98.70 142.52,98.70 H148.12 Q149.62,98.70 149.62,100.20 V157.20 Z" fill="#686c6e"/><path d="M152.65,157.20 V99.20 Q152.65,97.70 154.15,97.70 H159.75 Q161.25,97.70 161.25,99.20 V157.20 Z" fill="rgba(205,208,210,0.62)"/><rect x="165.99" y="82.55" width="5.20" height="10.00" fill="rgb(37,40,41)" rx="2"/><path d="M164.28,157.20 V98.48 Q164.28,96.98 165.78,96.98 H171.38 Q172.88,96.98 172.88,98.48 V157.20 Z" fill="#686c6e"/><path d="M175.91,157.20 V98.05 Q175.91,96.55 177.41,96.55 H183.01 Q184.51,96.55 184.51,98.05 V157.20 Z" fill="rgba(205,208,210,0.62)"/><rect x="189.25" y="82.55" width="5.20" height="10.00" fill="rgb(36,39,40)" rx="2"/><path d="M187.53,157.20 V97.90 Q187.53,96.40 189.03,96.40 H194.63 Q196.13,96.40 196.13,97.90 V157.20 Z" fill="#686c6e"/><path d="M199.16,157.20 V98.05 Q199.16,96.55 200.66,96.55 H206.26 Q207.76,96.55 207.76,98.05 V157.20 Z" fill="rgba(205,208,210,0.62)"/><rect x="212.50" y="82.55" width="5.20" height="10.00" fill="rgb(37,40,41)" rx="2"/><path d="M210.79,157.20 V98.48 Q210.79,96.98 212.29,96.98 H217.89 Q219.39,96.98 219.39,98.48 V157.20 Z" fill="#686c6e"/><path d="M222.41,157.20 V99.20 Q222.41,97.70 223.91,97.70 H229.51 Q231.01,97.70 231.01,99.20 V157.20 Z" fill="rgba(205,208,210,0.62)"/><rect x="235.75" y="82.55" width="5.20" height="10.00" fill="rgb(42,45,46)" rx="2"/><path d="M234.04,157.20 V100.20 Q234.04,98.70 235.54,98.70 H241.14 Q242.64,98.70 242.64,100.20 V157.20 Z" fill="#686c6e"/><path d="M245.67,157.20 V101.47 Q245.67,99.97 247.17,99.97 H252.77 Q254.27,99.97 254.27,101.47 V157.20 Z" fill="rgba(205,208,210,0.62)"/><rect x="259.01" y="82.55" width="5.20" height="10.00" fill="rgb(49,52,53)" rx="2"/><path d="M257.29,157.20 V102.99 Q257.29,101.49 258.79,101.49 H264.39 Q265.89,101.49 265.89,102.99 V157.20 Z" fill="#686c6e"/><path d="M268.92,157.20 V104.76 Q268.92,103.26 270.42,103.26 H276.02 Q277.52,103.26 277.52,104.76 V157.20 Z" fill="rgba(205,208,210,0.62)"/><rect x="282.26" y="82.55" width="5.20" height="10.00" fill="rgb(59,62,63)" rx="2"/><path d="M280.55,157.20 V106.75 Q280.55,105.25 282.05,105.25 H287.65 Q289.15,105.25 289.15,106.75 V157.20 Z" fill="#686c6e"/><path d="M292.18,157.20 V108.94 Q292.18,107.44 293.68,107.44 H299.28 Q300.78,107.44 300.78,108.94 V157.20 Z" fill="rgba(205,208,210,0.62)"/><rect x="305.52" y="82.55" width="5.20" height="10.00" fill="rgb(72,75,76)" rx="2"/><path d="M303.80,157.20 V111.32 Q303.80,109.82 305.30,109.82 H310.90 Q312.40,109.82 312.40,111.32 V157.20 Z" fill="#686c6e"/><path d="M315.43,157.20 V113.86 Q315.43,112.36 316.93,112.36 H322.53 Q324.03,112.36 324.03,113.86 V157.20 Z" fill="rgba(205,208,210,0.62)"/><rect x="328.77" y="82.55" width="5.20" height="10.00" fill="rgb(86,89,90)" rx="2"/><path d="M327.06,157.20 V116.54 Q327.06,115.04 328.56,115.04 H334.16 Q335.66,115.04 335.66,116.54 V157.20 Z" fill="#686c6e"/><path d="M338.68,157.20 V119.33 Q338.68,117.83 340.18,117.83 H345.78 Q347.28,117.83 347.28,119.33 V157.20 Z" fill="rgba(205,208,210,0.62)"/><rect x="352.02" y="82.55" width="5.20" height="10.00" fill="rgb(101,104,105)" rx="2"/><path d="M350.31,157.20 V122.21 Q350.31,120.71 351.81,120.71 H357.41 Q358.91,120.71 358.91,122.21 V157.20 Z" fill="#686c6e"/><path d="M361.94,157.20 V125.14 Q361.94,123.64 363.44,123.64 H369.04 Q370.54,123.64 370.54,125.14 V157.20 Z" fill="rgba(205,208,210,0.62)"/><rect x="375.28" y="82.55" width="5.20" height="10.00" fill="rgb(117,120,121)" rx="2"/><path d="M373.56,157.20 V128.10 Q373.56,126.60 375.06,126.60 H380.66 Q382.16,126.60 382.16,128.10 V157.20 Z" fill="#686c6e"/><path d="M385.19,157.20 V131.06 Q385.19,129.56 386.69,129.56 H392.29 Q393.79,129.56 393.79,131.06 V157.20 Z" fill="rgba(205,208,210,0.62)"/><rect x="398.53" y="82.55" width="5.20" height="10.00" fill="rgb(133,136,137)" rx="2"/><path d="M396.82,157.20 V133.99 Q396.82,132.49 398.32,132.49 H403.92 Q405.42,132.49 405.42,133.99 V157.20 Z" fill="#686c6e"/><path d="M408.45,157.20 V136.87 Q408.45,135.37 409.95,135.37 H415.55 Q417.05,135.37 417.05,136.87 V157.20 Z" fill="rgba(205,208,210,0.62)"/><rect x="421.79" y="82.55" width="5.20" height="10.00" fill="rgb(148,151,152)" rx="2"/><path d="M420.07,157.20 V139.66 Q420.07,138.16 421.57,138.16 H427.17 Q428.67,138.16 428.67,139.66 V157.20 Z" fill="#686c6e"/><path d="M431.70,157.20 V142.34 Q431.70,140.84 433.20,140.84 H438.80 Q440.30,140.84 440.30,142.34 V157.20 Z" fill="rgba(205,208,210,0.62)"/><rect x="445.04" y="82.55" width="5.20" height="10.00" fill="rgb(163,166,167)" rx="2"/><path d="M443.33,157.20 V144.88 Q443.33,143.38 444.83,143.38 H450.43 Q451.93,143.38 451.93,144.88 V157.20 Z" fill="#686c6e"/><path d="M454.95,157.20 V147.26 Q454.95,145.76 456.45,145.76 H462.05 Q463.55,145.76 463.55,147.26 V157.20 Z" fill="rgba(205,208,210,0.62)"/><rect x="468.29" y="82.55" width="5.20" height="10.00" fill="rgb(175,178,179)" rx="2"/><path d="M466.58,157.20 V149.45 Q466.58,147.95 468.08,147.95 H473.68 Q475.18,147.95 475.18,149.45 V157.20 Z" fill="#686c6e"/><path d="M478.21,157.20 V151.44 Q478.21,149.94 479.71,149.94 H485.31 Q486.81,149.94 486.81,151.44 V157.20 Z" fill="rgba(205,208,210,0.62)"/><rect x="491.55" y="82.55" width="5.20" height="10.00" fill="rgb(185,188,189)" rx="2"/><path d="M489.83,157.20 V153.21 Q489.83,151.71 491.33,151.71 H496.93 Q498.43,151.71 498.43,153.21 V157.20 Z" fill="#686c6e"/><path d="M501.46,157.20 V154.73 Q501.46,153.23 502.96,153.23 H508.56 Q510.06,153.23 510.06,154.73 V157.20 Z" fill="rgba(205,208,210,0.62)"/><rect x="514.80" y="82.55" width="5.20" height="10.00" fill="rgb(193,196,197)" rx="2"/><path d="M513.09,157.20 V155.85 Q513.09,154.50 514.44,154.50 H520.34 Q521.69,154.50 521.69,155.85 V157.20 Z" fill="#686c6e"/><path d="M524.72,157.20 V156.35 Q524.72,155.50 525.57,155.50 H532.46 Q533.32,155.50 533.32,156.35 V157.20 Z" fill="rgba(205,208,210,0.62)"/><rect x="538.06" y="82.55" width="5.20" height="10.00" fill="rgb(197,200,201)" rx="2"/><path d="M536.34,157.20 V156.71 Q536.34,156.22 536.83,156.22 H544.45 Q544.94,156.22 544.94,156.71 V157.20 Z" fill="#686c6e"/><path d="M547.97,157.20 V156.90 Q547.97,156.60 548.27,156.60 H556.27 Q556.57,156.60 556.57,156.90 V157.20 Z" fill="rgba(205,208,210,0.62)"/><rect x="561.31" y="82.55" width="5.20" height="10.00" fill="rgb(198,201,202)" rx="2"/><path d="M559.60,157.20 V156.90 Q559.60,156.60 559.90,156.60 H567.90 Q568.20,156.60 568.20,156.90 V157.20 Z" fill="#686c6e"/><path d="M571.22,157.20 V156.90 Q571.22,156.60 571.52,156.60 H579.52 Q579.82,156.60 579.82,156.90 V157.20 Z" fill="rgba(205,208,210,0.62)"/><rect x="584.56" y="82.55" width="5.20" height="10.00" fill="rgb(197,200,201)" rx="2"/><path d="M582.85,157.20 V156.71 Q582.85,156.22 583.34,156.22 H590.96 Q591.45,156.22 591.45,156.71 V157.20 Z" fill="#686c6e"/><path d="M594.48,157.20 V156.35 Q594.48,155.50 595.33,155.50 H602.23 Q603.08,155.50 603.08,156.35 V157.20 Z" fill="rgba(205,208,210,0.62)"/><rect x="607.82" y="82.55" width="5.20" height="10.00" fill="rgb(193,196,197)" rx="2"/><path d="M606.10,157.20 V155.85 Q606.10,154.50 607.45,154.50 H613.35 Q614.70,154.50 614.70,155.85 V157.20 Z" fill="#686c6e"/><path d="M617.73,157.20 V154.73 Q617.73,153.23 619.23,153.23 H624.83 Q626.33,153.23 626.33,154.73 V157.20 Z" fill="rgba(205,208,210,0.62)"/><rect x="631.07" y="82.55" width="5.20" height="10.00" fill="rgb(185,188,189)" rx="2"/><path d="M629.36,157.20 V153.21 Q629.36,151.71 630.86,151.71 H636.46 Q637.96,151.71 637.96,153.21 V157.20 Z" fill="#686c6e"/><path d="M640.99,157.20 V151.44 Q640.99,149.94 642.49,149.94 H648.09 Q649.59,149.94 649.59,151.44 V157.20 Z" fill="rgba(205,208,210,0.62)"/><rect x="654.33" y="82.55" width="5.20" height="10.00" fill="rgb(175,178,179)" rx="2"/><path d="M652.61,157.20 V149.45 Q652.61,147.95 654.11,147.95 H659.71 Q661.21,147.95 661.21,149.45 V157.20 Z" fill="#686c6e"/><path d="M664.24,157.20 V147.26 Q664.24,145.76 665.74,145.76 H671.34 Q672.84,145.76 672.84,147.26 V157.20 Z" fill="rgba(205,208,210,0.62)"/><rect x="677.58" y="82.55" width="5.20" height="10.00" fill="rgb(163,166,167)" rx="2"/><path d="M675.87,157.20 V144.88 Q675.87,143.38 677.37,143.38 H682.97 Q684.47,143.38 684.47,144.88 V157.20 Z" fill="#686c6e"/><path d="M687.49,157.20 V142.34 Q687.49,140.84 688.99,140.84 H694.59 Q696.09,140.84 696.09,142.34 V157.20 Z" fill="rgba(205,208,210,0.62)"/><rect x="700.83" y="82.55" width="5.20" height="10.00" fill="rgb(148,151,152)" rx="2"/><path d="M699.12,157.20 V139.66 Q699.12,138.16 700.62,138.16 H706.22 Q707.72,138.16 707.72,139.66 V157.20 Z" fill="#686c6e"/><path d="M710.75,157.20 V136.87 Q710.75,135.37 712.25,135.37 H717.85 Q719.35,135.37 719.35,136.87 V157.20 Z" fill="rgba(205,208,210,0.62)"/><rect x="724.09" y="82.55" width="5.20" height="10.00" fill="rgb(133,136,137)" rx="2"/><path d="M722.37,157.20 V133.99 Q722.37,132.49 723.87,132.49 H729.47 Q730.97,132.49 730.97,133.99 V157.20 Z" fill="#686c6e"/><path d="M734.00,157.20 V131.06 Q734.00,129.56 735.50,129.56 H741.10 Q742.60,129.56 742.60,131.06 V157.20 Z" fill="rgba(205,208,210,0.62)"/><polygon points="366.54,4.75 361.14,8.15 366.54,11.55" fill="#1b2021"/><polygon points="378.16,36.55 372.76,39.95 378.16,43.35" fill="#1b2021"/><polygon points="378.16,52.45 372.76,55.85 378.16,59.25" fill="#1b2021"/><polygon points="52.61,179.00 47.21,182.40 52.61,185.80" fill="#1b2021"/><polygon points="99.12,195.00 93.72,198.40 99.12,201.80" fill="#1b2021"/><polygon points="99.12,243.00 93.72,246.40 99.12,249.80" fill="#1b2021"/></g></svg>
<svg style="left:1199px;top:145px;" width="7" height="7" viewBox="0 0 7 7"><g transform="translate(0.90,0.05)"><polygon points="5.4,0 0,3.4 5.4,6.8" fill="#272d2e"/></g></svg>
<svg style="left:1199px;top:192px;" width="7" height="8" viewBox="0 0 7 8"><g transform="translate(0.90,0.75)"><polygon points="5.4,0 0,3.4 5.4,6.8" fill="#272d2e"/></g></svg>
<svg style="left:1199px;top:208px;" width="7" height="8" viewBox="0 0 7 8"><g transform="translate(0.90,0.55)"><polygon points="5.4,0 0,3.4 5.4,6.8" fill="#272d2e"/></g></svg>
<svg style="left:1199px;top:287px;" width="7" height="8" viewBox="0 0 7 8"><g transform="translate(0.90,0.40)"><polygon points="5.4,0 0,3.4 5.4,6.8" fill="#272d2e"/></g></svg>
<svg style="left:1199px;top:335px;" width="7" height="8" viewBox="0 0 7 8"><g transform="translate(0.90,0.40)"><polygon points="5.4,0 0,3.4 5.4,6.8" fill="#272d2e"/></g></svg>
<svg style="left:1199px;top:351px;" width="7" height="8" viewBox="0 0 7 8"><g transform="translate(0.90,0.40)"><polygon points="5.4,0 0,3.4 5.4,6.8" fill="#272d2e"/></g></svg>
<div style="left:319.00px;top:124.40px;width:134.30px;height:256.60px;background:#eef0f1;"></div>
<div style="left:319.00px;top:140.30px;width:134.30px;height:15.90px;background:#dfe3e6;"></div>
<div style="left:319.00px;top:139.80px;width:134.30px;height:1.00px;background:#e1e4e6;"></div>
<div style="left:319.00px;top:155.70px;width:134.30px;height:1.00px;background:#e1e4e6;"></div>
<div style="left:319.00px;top:171.60px;width:134.30px;height:1.00px;background:#e1e4e6;"></div>
<div style="left:319.00px;top:187.50px;width:134.30px;height:1.00px;background:#e1e4e6;"></div>
<div style="left:319.00px;top:203.40px;width:134.30px;height:1.00px;background:#e1e4e6;"></div>
<div style="left:319.00px;top:219.10px;width:134.30px;height:1.00px;background:#e1e4e6;"></div>
<div style="left:319.00px;top:282.10px;width:134.30px;height:1.00px;background:#e1e4e6;"></div>
<div style="left:319.00px;top:298.10px;width:134.30px;height:1.00px;background:#e1e4e6;"></div>
<div style="left:319.00px;top:314.10px;width:134.30px;height:1.00px;background:#e1e4e6;"></div>
<div style="left:319.00px;top:330.10px;width:134.30px;height:1.00px;background:#e1e4e6;"></div>
<div style="left:319.00px;top:346.10px;width:134.30px;height:1.00px;background:#e1e4e6;"></div>
<div style="left:319.00px;top:362.10px;width:134.30px;height:1.00px;background:#e1e4e6;"></div>
<svg style="left:326px;top:128px;" width="7" height="8" viewBox="0 0 7 8"><g transform="translate(0.20,0.65)"><polygon points="0,0 6,3.3 0,6.6" fill="#1b2021"/></g></svg>
<span class="t" style="top:127.00px;left:336.00px;transform-origin:0 50%;transform:scaleX(0.875);font-size:10px;color:#33383a;">Stab</span>
<span class="t" style="top:125.00px;left:430.90px;transform-origin:0 50%;transform:scaleX(0.960);font-size:9px;color:#1b2021;font-weight:bold;">M</span>
<span class="t" style="top:125.00px;left:443.20px;transform-origin:0 50%;transform:scaleX(0.983);font-size:9px;color:#1b2021;font-weight:bold;">S</span>
<svg style="left:326px;top:144px;" width="7" height="8" viewBox="0 0 7 8"><g transform="translate(0.20,0.55)"><polygon points="0,0 6,3.3 0,6.6" fill="#1b2021"/></g></svg>
<span class="t" style="top:143.00px;left:336.00px;transform-origin:0 50%;transform:scaleX(0.903);font-size:10px;color:#33383a;">Tom 2</span>
<span class="t" style="top:141.00px;left:430.90px;transform-origin:0 50%;transform:scaleX(0.960);font-size:9px;color:#1b2021;font-weight:bold;">M</span>
<span class="t" style="top:141.00px;left:443.20px;transform-origin:0 50%;transform:scaleX(0.983);font-size:9px;color:#1b2021;font-weight:bold;">S</span>
<svg style="left:326px;top:160px;" width="7" height="8" viewBox="0 0 7 8"><g transform="translate(0.20,0.45)"><polygon points="0,0 6,3.3 0,6.6" fill="#1b2021"/></g></svg>
<span class="t" style="top:159.00px;left:336.00px;transform-origin:0 50%;transform:scaleX(0.889);font-size:10px;color:#33383a;">Tom 1</span>
<span class="t" style="top:157.00px;left:430.90px;transform-origin:0 50%;transform:scaleX(0.960);font-size:9px;color:#1b2021;font-weight:bold;">M</span>
<span class="t" style="top:157.00px;left:443.20px;transform-origin:0 50%;transform:scaleX(0.983);font-size:9px;color:#1b2021;font-weight:bold;">S</span>
<svg style="left:326px;top:176px;" width="7" height="7" viewBox="0 0 7 7"><g transform="translate(0.20,0.35)"><polygon points="0,0 6,3.3 0,6.6" fill="#1b2021"/></g></svg>
<span class="t" style="top:175.00px;left:336.00px;transform-origin:0 50%;transform:scaleX(0.908);font-size:10px;color:#33383a;">Tamb</span>
<span class="t" style="top:173.00px;left:430.90px;transform-origin:0 50%;transform:scaleX(0.960);font-size:9px;color:#1b2021;font-weight:bold;">M</span>
<span class="t" style="top:173.00px;left:443.20px;transform-origin:0 50%;transform:scaleX(0.983);font-size:9px;color:#1b2021;font-weight:bold;">S</span>
<svg style="left:326px;top:192px;" width="7" height="7" viewBox="0 0 7 7"><g transform="translate(0.20,0.25)"><polygon points="0,0 6,3.3 0,6.6" fill="#1b2021"/></g></svg>
<span class="t" style="top:190.00px;left:336.00px;transform-origin:0 50%;transform:scaleX(0.856);font-size:10px;color:#33383a;">Ride</span>
<span class="t" style="top:189.00px;left:430.90px;transform-origin:0 50%;transform:scaleX(0.960);font-size:9px;color:#1b2021;font-weight:bold;">M</span>
<span class="t" style="top:189.00px;left:443.20px;transform-origin:0 50%;transform:scaleX(0.983);font-size:9px;color:#1b2021;font-weight:bold;">S</span>
<svg style="left:325px;top:208px;" width="8" height="7" viewBox="0 0 8 7"><g transform="translate(0.70,0.75)"><polygon points="0,0 6.6,0 3.3,6" fill="#1b2021"/></g></svg>
<span class="t" style="top:206.00px;left:336.00px;transform-origin:0 50%;transform:scaleX(0.920);font-size:10px;color:#33383a;">Hat 3</span>
<span class="t" style="top:205.00px;left:430.90px;transform-origin:0 50%;transform:scaleX(0.960);font-size:9px;color:#1b2021;font-weight:bold;">M</span>
<span class="t" style="top:205.00px;left:443.20px;transform-origin:0 50%;transform:scaleX(0.983);font-size:9px;color:#1b2021;font-weight:bold;">S</span>
<svg style="left:326px;top:286px;" width="7" height="8" viewBox="0 0 7 8"><g transform="translate(0.20,0.90)"><polygon points="0,0 6,3.3 0,6.6" fill="#1b2021"/></g></svg>
<span class="t" style="top:285.00px;left:336.00px;transform-origin:0 50%;transform:scaleX(0.920);font-size:10px;color:#33383a;">Hat 2</span>
<span class="t" style="top:284.00px;left:430.90px;transform-origin:0 50%;transform:scaleX(0.960);font-size:9px;color:#1b2021;font-weight:bold;">M</span>
<span class="t" style="top:284.00px;left:443.20px;transform-origin:0 50%;transform:scaleX(0.983);font-size:9px;color:#1b2021;font-weight:bold;">S</span>
<svg style="left:326px;top:302px;" width="7" height="8" viewBox="0 0 7 8"><g transform="translate(0.20,0.90)"><polygon points="0,0 6,3.3 0,6.6" fill="#1b2021"/></g></svg>
<span class="t" style="top:301.00px;left:336.00px;transform-origin:0 50%;transform:scaleX(0.904);font-size:10px;color:#33383a;">Hat 1</span>
<span class="t" style="top:300.00px;left:430.90px;transform-origin:0 50%;transform:scaleX(0.960);font-size:9px;color:#1b2021;font-weight:bold;">M</span>
<span class="t" style="top:300.00px;left:443.20px;transform-origin:0 50%;transform:scaleX(0.983);font-size:9px;color:#1b2021;font-weight:bold;">S</span>
<svg style="left:326px;top:318px;" width="7" height="8" viewBox="0 0 7 8"><g transform="translate(0.20,0.90)"><polygon points="0,0 6,3.3 0,6.6" fill="#1b2021"/></g></svg>
<span class="t" style="top:317.00px;left:336.00px;transform-origin:0 50%;transform:scaleX(0.856);font-size:10px;color:#33383a;">Clap</span>
<span class="t" style="top:316.00px;left:430.90px;transform-origin:0 50%;transform:scaleX(0.960);font-size:9px;color:#1b2021;font-weight:bold;">M</span>
<span class="t" style="top:316.00px;left:443.20px;transform-origin:0 50%;transform:scaleX(0.983);font-size:9px;color:#1b2021;font-weight:bold;">S</span>
<svg style="left:326px;top:334px;" width="7" height="8" viewBox="0 0 7 8"><g transform="translate(0.20,0.90)"><polygon points="0,0 6,3.3 0,6.6" fill="#1b2021"/></g></svg>
<span class="t" style="top:333.00px;left:336.00px;transform-origin:0 50%;transform:scaleX(0.885);font-size:10px;color:#33383a;">Snare 3</span>
<span class="t" style="top:332.00px;left:430.90px;transform-origin:0 50%;transform:scaleX(0.960);font-size:9px;color:#1b2021;font-weight:bold;">M</span>
<span class="t" style="top:332.00px;left:443.20px;transform-origin:0 50%;transform:scaleX(0.983);font-size:9px;color:#1b2021;font-weight:bold;">S</span>
<svg style="left:326px;top:350px;" width="7" height="8" viewBox="0 0 7 8"><g transform="translate(0.20,0.90)"><polygon points="0,0 6,3.3 0,6.6" fill="#1b2021"/></g></svg>
<span class="t" style="top:349.00px;left:336.00px;transform-origin:0 50%;transform:scaleX(0.885);font-size:10px;color:#33383a;">Snare 2</span>
<span class="t" style="top:348.00px;left:430.90px;transform-origin:0 50%;transform:scaleX(0.960);font-size:9px;color:#1b2021;font-weight:bold;">M</span>
<span class="t" style="top:348.00px;left:443.20px;transform-origin:0 50%;transform:scaleX(0.983);font-size:9px;color:#1b2021;font-weight:bold;">S</span>
<svg style="left:326px;top:366px;" width="7" height="8" viewBox="0 0 7 8"><g transform="translate(0.20,0.90)"><polygon points="0,0 6,3.3 0,6.6" fill="#1b2021"/></g></svg>
<span class="t" style="top:365.00px;left:336.00px;transform-origin:0 50%;transform:scaleX(0.874);font-size:10px;color:#33383a;">Snare 1</span>
<span class="t" style="top:364.00px;left:430.90px;transform-origin:0 50%;transform:scaleX(0.960);font-size:9px;color:#1b2021;font-weight:bold;">M</span>
<span class="t" style="top:364.00px;left:443.20px;transform-origin:0 50%;transform:scaleX(0.983);font-size:9px;color:#1b2021;font-weight:bold;">S</span>
<div style="left:320.00px;top:206.00px;width:2.80px;height:75.40px;background:#33383a;"></div>
<div style="left:325.60px;top:222.40px;width:16.40px;height:16.20px;background:#b9bbbc;border-radius:2.5px;"></div>
<svg style="left:327px;top:224px;" width="13" height="13" viewBox="0 0 13 13"><g transform="translate(0.20,0.00)"><path fill-rule="evenodd" fill="#272d2e" d="M10.90,5.01 L10.90,6.99 L9.33,7.37 L9.32,7.39 L10.17,8.76 L8.76,10.17 L7.39,9.32 L7.37,9.33 L6.99,10.90 L5.01,10.90 L4.63,9.33 L4.61,9.32 L3.24,10.17 L1.83,8.76 L2.68,7.39 L2.67,7.37 L1.10,6.99 L1.10,5.01 L2.67,4.63 L2.68,4.61 L1.83,3.24 L3.24,1.83 L4.61,2.68 L4.63,2.67 L5.01,1.10 L6.99,1.10 L7.37,2.67 L7.39,2.68 L8.76,1.83 L10.17,3.24 L9.32,4.61 L9.33,4.63 Z M8.2,6.0 a2.2,2.2 0 1 0 -4.4,0 a2.2,2.2 0 1 0 4.4,0 Z"/></g></svg>
<svg style="left:337px;top:234px;" width="5" height="4" viewBox="0 0 5 4"><g transform="translate(0.60,0.00)"><polygon points="0,0 3.2,0 1.6,2.4" fill="#272d2e"/></g></svg>
<div style="left:344.00px;top:222.40px;width:107.60px;height:16.20px;background:#b9bbbc;border-radius:2.5px;"></div>
<span class="t" style="top:224.00px;left:346.00px;transform-origin:0 50%;transform:scaleX(0.987);font-size:10px;color:#33383a;">Velocity</span>
<svg style="left:439px;top:227px;" width="8" height="7" viewBox="0 0 8 7"><g transform="translate(0.30,0.10)"><polygon points="0,0 7,0 3.5,6.6" fill="#272d2e"/></g></svg>
<svg style="left:327px;top:243px;" width="21" height="20" viewBox="0 0 21 20"><g transform="translate(0.80,0.40)"><circle cx="9.6" cy="9.6" r="8.6" fill="#b9bbbc"/><polygon points="7.61,11.77 11.59,11.77 13.50,18.37 5.70,18.37" fill="#eef0f1"/><circle cx="9.6" cy="9.6" r="3.61" fill="#eef0f1"/></g></svg>
<span class="t" style="top:259.00px;left:336.80px;transform:translateX(-50%) scaleX(0.923);font-size:9px;color:#858b8e;">Offset</span>
<svg style="left:357px;top:243px;" width="20" height="20" viewBox="0 0 20 20"><g transform="translate(0.00,0.40)"><circle cx="9.6" cy="9.6" r="8.6" fill="#b9bbbc"/><polygon points="7.61,11.77 11.59,11.77 13.50,18.37 5.70,18.37" fill="#eef0f1"/><circle cx="9.6" cy="9.6" r="3.61" fill="#eef0f1"/></g></svg>
<span class="t" style="top:259.00px;left:366.00px;transform:translateX(-50%) scaleX(0.891);font-size:9px;color:#858b8e;">Comp</span>
<svg style="left:386px;top:243px;" width="20" height="20" viewBox="0 0 20 20"><g transform="translate(0.40,0.40)"><circle cx="9.6" cy="9.6" r="8.6" fill="#b9bbbc"/><polygon points="7.61,11.77 11.59,11.77 13.50,18.37 5.70,18.37" fill="#eef0f1"/><circle cx="9.6" cy="9.6" r="3.61" fill="#eef0f1"/></g></svg>
<span class="t" style="top:259.00px;left:395.40px;transform:translateX(-50%) scaleX(0.864);font-size:9px;color:#858b8e;">Rand</span>
<svg style="left:415px;top:243px;" width="21" height="20" viewBox="0 0 21 20"><g transform="translate(0.80,0.40)"><circle cx="9.6" cy="9.6" r="8.6" fill="#b9bbbc"/><polygon points="7.61,11.77 11.59,11.77 13.50,18.37 5.70,18.37" fill="#eef0f1"/><circle cx="9.6" cy="9.6" r="3.61" fill="#eef0f1"/></g></svg>
<span class="t" style="top:259.00px;left:424.80px;transform:translateX(-50%) scaleX(0.907);font-size:9px;color:#858b8e;">Variance</span>
<span class="t" style="top:270.00px;left:330.00px;transform:translateX(-50%) scaleX(1.000);font-size:10px;color:#33383a;">+</span>
<div style="left:455.00px;top:383.00px;width:726.60px;height:7.00px;background:#b9bbbc;border-radius:3.5px;"></div>
<span class="t" style="top:380.00px;left:1192.00px;transform:translateX(-50%) scaleX(1.040);font-size:10px;color:#8d9396;font-weight:bold;">-</span>
<span class="t" style="top:380.00px;left:1202.40px;transform:translateX(-50%) scaleX(1.040);font-size:11px;color:#f4f5f5;font-weight:bold;">+</span>
<div style="left:1207.60px;top:126.00px;width:6.80px;height:186.40px;background:#b9bbbc;border-radius:3.4px;"></div>
<span class="t" style="top:359.00px;left:1210.60px;transform:translateX(-50%) scaleX(1.040);font-size:10px;color:#f4f5f5;font-weight:bold;">-</span>
<span class="t" style="top:370.00px;left:1210.60px;transform:translateX(-50%) scaleX(1.040);font-size:10px;color:#8d9396;font-weight:bold;">+</span>
<svg style="left:750px;top:394px;" width="41" height="7" viewBox="0 0 41 7"><circle cx="2.70" cy="3" r="1.9" fill="#cfd2d3"/><circle cx="7.75" cy="3" r="1.9" fill="#cfd2d3"/><circle cx="12.80" cy="3" r="1.9" fill="#cfd2d3"/><circle cx="17.85" cy="3" r="1.9" fill="#cfd2d3"/><circle cx="22.90" cy="3" r="1.9" fill="#cfd2d3"/><circle cx="27.95" cy="3" r="1.9" fill="#cfd2d3"/><circle cx="33.00" cy="3" r="1.9" fill="#cfd2d3"/></svg>
<svg style="left:312px;top:361px;" width="7" height="41" viewBox="0 0 7 41"><circle cx="3.3" cy="3.00" r="1.9" fill="#cfd2d3"/><circle cx="3.3" cy="8.05" r="1.9" fill="#cfd2d3"/><circle cx="3.3" cy="13.10" r="1.9" fill="#cfd2d3"/><circle cx="3.3" cy="18.15" r="1.9" fill="#cfd2d3"/><circle cx="3.3" cy="23.20" r="1.9" fill="#cfd2d3"/><circle cx="3.3" cy="28.25" r="1.9" fill="#cfd2d3"/><circle cx="3.3" cy="33.30" r="1.9" fill="#cfd2d3"/></svg>
<div style="left:6.00px;top:457.40px;width:69.60px;height:17.00px;background:#535858;border-radius:2.5px;"></div>
<span class="t" style="top:460.00px;left:8.00px;transform-origin:0 50%;transform:scaleX(0.900);font-size:10px;color:#eceeee;">Normal</span>
<svg style="left:63px;top:462px;" width="7" height="8" viewBox="0 0 7 8"><g transform="translate(0.30,0.80)"><polygon points="0,0 6.6,0 3.3,6.4" fill="#eceeee"/></g></svg>
<div style="left:78.00px;top:457.40px;width:14.60px;height:17.00px;background:#8ccbfa;border-radius:2.5px 0px 0px 2.5px;"></div>
<span class="t" style="top:459.00px;left:85.30px;transform:translateX(-50%) scaleX(1.000);font-size:10.5px;color:#272d2e;">A</span>
<div style="left:93.60px;top:457.40px;width:14.20px;height:17.00px;background:#535858;"></div>
<span class="t" style="top:459.00px;left:100.70px;transform:translateX(-50%) scaleX(1.000);font-size:10.5px;color:#eceeee;">B</span>
<div style="left:108.80px;top:457.40px;width:14.00px;height:17.00px;background:#535858;"></div>
<span class="t" style="top:459.00px;left:115.80px;transform:translateX(-50%) scaleX(1.000);font-size:10.5px;color:#eceeee;">C</span>
<div style="left:124.00px;top:457.40px;width:14.00px;height:17.00px;background:#535858;"></div>
<span class="t" style="top:459.00px;left:131.00px;transform:translateX(-50%) scaleX(1.000);font-size:10.5px;color:#eceeee;">D</span>
<div style="left:139.00px;top:457.40px;width:14.00px;height:17.00px;background:#535858;border-radius:0px 2.5px 2.5px 0px;"></div>
<span class="t" style="top:459.00px;left:146.00px;transform:translateX(-50%) scaleX(1.000);font-size:10.5px;color:#eceeee;">All</span>
<div style="left:159.00px;top:457.40px;width:17.00px;height:17.00px;background:#535858;border-radius:2.5px;"></div>
<div style="left:177.00px;top:457.40px;width:16.40px;height:17.00px;background:#535858;border-radius:2.5px;"></div>
<svg style="left:161px;top:459px;" width="13" height="13" viewBox="0 0 13 13"><g transform="translate(0.30,0.80)"><circle cx="6" cy="6" r="4.9" fill="none" stroke="#f0f1f1" stroke-width="1.3"/><circle cx="3.5" cy="6.2" r="0.75" fill="#f0f1f1"/><circle cx="8.5" cy="6.2" r="0.75" fill="#f0f1f1"/><circle cx="6" cy="3.3" r="0.75" fill="#f0f1f1"/><circle cx="4.1" cy="4.1" r="0.75" fill="#f0f1f1"/><circle cx="7.9" cy="4.1" r="0.75" fill="#f0f1f1"/><rect x="5.2" y="10" width="1.6" height="1.6" fill="#535858"/></g></svg>
<svg style="left:179px;top:460px;" width="14" height="13" viewBox="0 0 14 13"><polygon points="1.8,6.6 8.4,2 11.2,4.8 5,9.6" fill="none" stroke="#f0f1f1" stroke-width="1.2" stroke-linejoin="round"/><polygon points="5.6,4 8.4,2 11.2,4.8 8.2,7.2" fill="#f0f1f1"/><line x1="4.6" y1="10.9" x2="11" y2="10.9" stroke="#f0f1f1" stroke-width="1.5"/></svg>
<div style="left:200.00px;top:457.40px;width:33.60px;height:17.00px;background:#535858;border-radius:2.5px 0px 0px 2.5px;"></div>
<span class="t" style="top:460.00px;left:216.80px;transform:translateX(-50%) scaleX(0.887);font-size:10px;color:#eceeee;">Repeat</span>
<div style="left:235.00px;top:457.40px;width:26.00px;height:17.00px;background:#535858;border-radius:0px 2.5px 2.5px 0px;"></div>
<span class="t" style="top:460.00px;left:248.00px;transform:translateX(-50%) scaleX(0.956);font-size:10px;color:#eceeee;">1/16</span>
<div style="left:293.40px;top:457.40px;width:17.00px;height:17.00px;background:#535858;border-radius:2.5px;"></div>
<svg style="left:295px;top:459px;" width="13" height="13" viewBox="0 0 13 13"><g transform="translate(0.00,0.60)"><path fill-rule="evenodd" fill="#f0f1f1" d="M10.90,5.01 L10.90,6.99 L9.33,7.37 L9.32,7.39 L10.17,8.76 L8.76,10.17 L7.39,9.32 L7.37,9.33 L6.99,10.90 L5.01,10.90 L4.63,9.33 L4.61,9.32 L3.24,10.17 L1.83,8.76 L2.68,7.39 L2.67,7.37 L1.10,6.99 L1.10,5.01 L2.67,4.63 L2.68,4.61 L1.83,3.24 L3.24,1.83 L4.61,2.68 L4.63,2.67 L5.01,1.10 L6.99,1.10 L7.37,2.67 L7.39,2.68 L8.76,1.83 L10.17,3.24 L9.32,4.61 L9.33,4.63 Z M8.2,6.0 a2.2,2.2 0 1 0 -4.4,0 a2.2,2.2 0 1 0 4.4,0 Z"/></g></svg>
<svg style="left:306px;top:469px;" width="5" height="4" viewBox="0 0 5 4"><g transform="translate(0.00,0.20)"><polygon points="0,0 3.2,0 1.6,2.4" fill="#f0f1f1"/></g></svg>
<div style="left:4.00px;top:481.00px;width:74.00px;height:53.00px;background:#4a4e4f;border-radius:4px;"></div>
<span class="t" style="top:499.00px;left:41.00px;transform:translateX(-50%) scaleX(1.020);font-size:10px;color:#f4f5f5;font-weight:bold;">Tamb</span>
<svg style="left:15px;top:525px;" width="55" height="7" viewBox="0 0 55 7"><g transform="translate(0.00,0.40)"><rect x="0.00" y="0" width="5.9" height="6.2" fill="#8ccbfa"/><rect x="6.72" y="0" width="5.9" height="6.2" fill="#8ccbfa"/><rect x="13.44" y="0" width="5.9" height="6.2" fill="#515657"/><rect x="20.16" y="0" width="5.9" height="6.2" fill="#515657"/><rect x="26.88" y="0" width="5.9" height="6.2" fill="#515657"/><rect x="33.60" y="0" width="5.9" height="6.2" fill="#515657"/><rect x="40.32" y="0" width="5.9" height="6.2" fill="#515657"/><rect x="47.04" y="0" width="5.9" height="6.2" fill="#515657"/></g></svg>
<div style="left:81.45px;top:481.00px;width:74.00px;height:53.00px;background:#4a4e4f;border-radius:4px;"></div>
<span class="t" style="top:499.00px;left:118.45px;transform:translateX(-50%) scaleX(1.020);font-size:10px;color:#f4f5f5;font-weight:bold;">Tom 1</span>
<svg style="left:92px;top:525px;" width="55" height="7" viewBox="0 0 55 7"><g transform="translate(0.45,0.40)"><rect x="0.00" y="0" width="5.9" height="6.2" fill="#8ccbfa"/><rect x="6.72" y="0" width="5.9" height="6.2" fill="#8ccbfa"/><rect x="13.44" y="0" width="5.9" height="6.2" fill="#8ccbfa"/><rect x="20.16" y="0" width="5.9" height="6.2" fill="#515657"/><rect x="26.88" y="0" width="5.9" height="6.2" fill="#515657"/><rect x="33.60" y="0" width="5.9" height="6.2" fill="#515657"/><rect x="40.32" y="0" width="5.9" height="6.2" fill="#515657"/><rect x="47.04" y="0" width="5.9" height="6.2" fill="#515657"/></g></svg>
<div style="left:158.90px;top:481.00px;width:74.00px;height:53.00px;background:#8ccbfa;border-radius:4px;"></div>
<span class="t" style="top:499.00px;left:195.90px;transform:translateX(-50%) scaleX(1.020);font-size:10px;color:#272d2e;font-weight:bold;">Tom 2</span>
<svg style="left:169px;top:525px;" width="55" height="7" viewBox="0 0 55 7"><g transform="translate(0.90,0.40)"><rect x="0.00" y="0" width="5.9" height="6.2" fill="#20262a"/><rect x="6.72" y="0" width="5.9" height="6.2" fill="#20262a"/><rect x="13.44" y="0" width="5.9" height="6.2" fill="#20262a"/><rect x="20.16" y="0" width="5.9" height="6.2" fill="#33485a"/><rect x="26.88" y="0" width="5.9" height="6.2" fill="#33485a"/><rect x="33.60" y="0" width="5.9" height="6.2" fill="#33485a"/><rect x="40.32" y="0" width="5.9" height="6.2" fill="#33485a"/><rect x="47.04" y="0" width="5.9" height="6.2" fill="#33485a"/></g></svg>
<div style="left:236.35px;top:481.00px;width:74.00px;height:53.00px;background:#4a4e4f;border-radius:4px;"></div>
<span class="t" style="top:499.00px;left:273.35px;transform:translateX(-50%) scaleX(1.020);font-size:10px;color:#f4f5f5;font-weight:bold;">Stab</span>
<svg style="left:247px;top:525px;" width="55" height="7" viewBox="0 0 55 7"><g transform="translate(0.35,0.40)"><rect x="0.00" y="0" width="5.9" height="6.2" fill="#8ccbfa"/><rect x="6.72" y="0" width="5.9" height="6.2" fill="#515657"/><rect x="13.44" y="0" width="5.9" height="6.2" fill="#515657"/><rect x="20.16" y="0" width="5.9" height="6.2" fill="#515657"/><rect x="26.88" y="0" width="5.9" height="6.2" fill="#515657"/><rect x="33.60" y="0" width="5.9" height="6.2" fill="#515657"/><rect x="40.32" y="0" width="5.9" height="6.2" fill="#515657"/><rect x="47.04" y="0" width="5.9" height="6.2" fill="#515657"/></g></svg>
<div style="left:4.00px;top:537.40px;width:74.00px;height:53.00px;background:#4a4e4f;border-radius:4px;"></div>
<span class="t" style="top:555.00px;left:41.00px;transform:translateX(-50%) scaleX(1.020);font-size:10px;color:#f4f5f5;font-weight:bold;">Hat 1</span>
<svg style="left:15px;top:581px;" width="55" height="8" viewBox="0 0 55 8"><g transform="translate(0.00,0.80)"><rect x="0.00" y="0" width="5.9" height="6.2" fill="#8ccbfa"/><rect x="6.72" y="0" width="5.9" height="6.2" fill="#515657"/><rect x="13.44" y="0" width="5.9" height="6.2" fill="#515657"/><rect x="20.16" y="0" width="5.9" height="6.2" fill="#515657"/><rect x="26.88" y="0" width="5.9" height="6.2" fill="#515657"/><rect x="33.60" y="0" width="5.9" height="6.2" fill="#515657"/><rect x="40.32" y="0" width="5.9" height="6.2" fill="#515657"/><rect x="47.04" y="0" width="5.9" height="6.2" fill="#515657"/></g></svg>
<div style="left:81.45px;top:537.40px;width:74.00px;height:53.00px;background:#4a4e4f;border-radius:4px;"></div>
<span class="t" style="top:555.00px;left:118.45px;transform:translateX(-50%) scaleX(1.020);font-size:10px;color:#f4f5f5;font-weight:bold;">Hat 2</span>
<svg style="left:92px;top:581px;" width="55" height="8" viewBox="0 0 55 8"><g transform="translate(0.45,0.80)"><rect x="0.00" y="0" width="5.9" height="6.2" fill="#8ccbfa"/><rect x="6.72" y="0" width="5.9" height="6.2" fill="#515657"/><rect x="13.44" y="0" width="5.9" height="6.2" fill="#515657"/><rect x="20.16" y="0" width="5.9" height="6.2" fill="#515657"/><rect x="26.88" y="0" width="5.9" height="6.2" fill="#515657"/><rect x="33.60" y="0" width="5.9" height="6.2" fill="#515657"/><rect x="40.32" y="0" width="5.9" height="6.2" fill="#515657"/><rect x="47.04" y="0" width="5.9" height="6.2" fill="#515657"/></g></svg>
<div style="left:158.90px;top:537.40px;width:74.00px;height:53.00px;background:#4a4e4f;border-radius:4px;"></div>
<span class="t" style="top:555.00px;left:195.90px;transform:translateX(-50%) scaleX(1.020);font-size:10px;color:#f4f5f5;font-weight:bold;">Hat 3</span>
<svg style="left:169px;top:581px;" width="55" height="8" viewBox="0 0 55 8"><g transform="translate(0.90,0.80)"><rect x="0.00" y="0" width="5.9" height="6.2" fill="#8ccbfa"/><rect x="6.72" y="0" width="5.9" height="6.2" fill="#515657"/><rect x="13.44" y="0" width="5.9" height="6.2" fill="#515657"/><rect x="20.16" y="0" width="5.9" height="6.2" fill="#515657"/><rect x="26.88" y="0" width="5.9" height="6.2" fill="#515657"/><rect x="33.60" y="0" width="5.9" height="6.2" fill="#515657"/><rect x="40.32" y="0" width="5.9" height="6.2" fill="#515657"/><rect x="47.04" y="0" width="5.9" height="6.2" fill="#515657"/></g></svg>
<div style="left:236.35px;top:537.40px;width:74.00px;height:53.00px;background:#4a4e4f;border-radius:4px;"></div>
<span class="t" style="top:555.00px;left:273.35px;transform:translateX(-50%) scaleX(1.020);font-size:10px;color:#f4f5f5;font-weight:bold;">Ride</span>
<svg style="left:247px;top:581px;" width="55" height="8" viewBox="0 0 55 8"><g transform="translate(0.35,0.80)"><rect x="0.00" y="0" width="5.9" height="6.2" fill="#8ccbfa"/><rect x="6.72" y="0" width="5.9" height="6.2" fill="#515657"/><rect x="13.44" y="0" width="5.9" height="6.2" fill="#515657"/><rect x="20.16" y="0" width="5.9" height="6.2" fill="#515657"/><rect x="26.88" y="0" width="5.9" height="6.2" fill="#515657"/><rect x="33.60" y="0" width="5.9" height="6.2" fill="#515657"/><rect x="40.32" y="0" width="5.9" height="6.2" fill="#515657"/><rect x="47.04" y="0" width="5.9" height="6.2" fill="#515657"/></g></svg>
<div style="left:4.00px;top:593.80px;width:74.00px;height:53.00px;background:#4a4e4f;border-radius:4px;"></div>
<span class="t" style="top:612.00px;left:41.00px;transform:translateX(-50%) scaleX(1.020);font-size:10px;color:#f4f5f5;font-weight:bold;">Snare 1</span>
<svg style="left:15px;top:638px;" width="55" height="7" viewBox="0 0 55 7"><g transform="translate(0.00,0.20)"><rect x="0.00" y="0" width="5.9" height="6.2" fill="#8ccbfa"/><rect x="6.72" y="0" width="5.9" height="6.2" fill="#515657"/><rect x="13.44" y="0" width="5.9" height="6.2" fill="#515657"/><rect x="20.16" y="0" width="5.9" height="6.2" fill="#515657"/><rect x="26.88" y="0" width="5.9" height="6.2" fill="#515657"/><rect x="33.60" y="0" width="5.9" height="6.2" fill="#515657"/><rect x="40.32" y="0" width="5.9" height="6.2" fill="#515657"/><rect x="47.04" y="0" width="5.9" height="6.2" fill="#515657"/></g></svg>
<div style="left:81.45px;top:593.80px;width:74.00px;height:53.00px;background:#4a4e4f;border-radius:4px;"></div>
<span class="t" style="top:612.00px;left:118.45px;transform:translateX(-50%) scaleX(1.020);font-size:10px;color:#f4f5f5;font-weight:bold;">Snare 2</span>
<svg style="left:92px;top:638px;" width="55" height="7" viewBox="0 0 55 7"><g transform="translate(0.45,0.20)"><rect x="0.00" y="0" width="5.9" height="6.2" fill="#8ccbfa"/><rect x="6.72" y="0" width="5.9" height="6.2" fill="#515657"/><rect x="13.44" y="0" width="5.9" height="6.2" fill="#515657"/><rect x="20.16" y="0" width="5.9" height="6.2" fill="#515657"/><rect x="26.88" y="0" width="5.9" height="6.2" fill="#515657"/><rect x="33.60" y="0" width="5.9" height="6.2" fill="#515657"/><rect x="40.32" y="0" width="5.9" height="6.2" fill="#515657"/><rect x="47.04" y="0" width="5.9" height="6.2" fill="#515657"/></g></svg>
<div style="left:158.90px;top:593.80px;width:74.00px;height:53.00px;background:#4a4e4f;border-radius:4px;"></div>
<span class="t" style="top:612.00px;left:195.90px;transform:translateX(-50%) scaleX(1.020);font-size:10px;color:#f4f5f5;font-weight:bold;">Snare 3</span>
<svg style="left:169px;top:638px;" width="55" height="7" viewBox="0 0 55 7"><g transform="translate(0.90,0.20)"><rect x="0.00" y="0" width="5.9" height="6.2" fill="#8ccbfa"/><rect x="6.72" y="0" width="5.9" height="6.2" fill="#515657"/><rect x="13.44" y="0" width="5.9" height="6.2" fill="#515657"/><rect x="20.16" y="0" width="5.9" height="6.2" fill="#515657"/><rect x="26.88" y="0" width="5.9" height="6.2" fill="#515657"/><rect x="33.60" y="0" width="5.9" height="6.2" fill="#515657"/><rect x="40.32" y="0" width="5.9" height="6.2" fill="#515657"/><rect x="47.04" y="0" width="5.9" height="6.2" fill="#515657"/></g></svg>
<div style="left:236.35px;top:593.80px;width:74.00px;height:53.00px;background:#4a4e4f;border-radius:4px;"></div>
<span class="t" style="top:612.00px;left:273.35px;transform:translateX(-50%) scaleX(1.020);font-size:10px;color:#f4f5f5;font-weight:bold;">Clap</span>
<svg style="left:247px;top:638px;" width="55" height="7" viewBox="0 0 55 7"><g transform="translate(0.35,0.20)"><rect x="0.00" y="0" width="5.9" height="6.2" fill="#8ccbfa"/><rect x="6.72" y="0" width="5.9" height="6.2" fill="#515657"/><rect x="13.44" y="0" width="5.9" height="6.2" fill="#515657"/><rect x="20.16" y="0" width="5.9" height="6.2" fill="#515657"/><rect x="26.88" y="0" width="5.9" height="6.2" fill="#515657"/><rect x="33.60" y="0" width="5.9" height="6.2" fill="#515657"/><rect x="40.32" y="0" width="5.9" height="6.2" fill="#515657"/><rect x="47.04" y="0" width="5.9" height="6.2" fill="#515657"/></g></svg>
<div style="left:4.00px;top:650.20px;width:74.00px;height:53.00px;background:#4a4e4f;border-radius:4px;"></div>
<span class="t" style="top:668.00px;left:41.00px;transform:translateX(-50%) scaleX(1.020);font-size:10px;color:#f4f5f5;font-weight:bold;">Kick 1</span>
<svg style="left:15px;top:694px;" width="55" height="8" viewBox="0 0 55 8"><g transform="translate(0.00,0.60)"><rect x="0.00" y="0" width="5.9" height="6.2" fill="#8ccbfa"/><rect x="6.72" y="0" width="5.9" height="6.2" fill="#515657"/><rect x="13.44" y="0" width="5.9" height="6.2" fill="#515657"/><rect x="20.16" y="0" width="5.9" height="6.2" fill="#515657"/><rect x="26.88" y="0" width="5.9" height="6.2" fill="#515657"/><rect x="33.60" y="0" width="5.9" height="6.2" fill="#515657"/><rect x="40.32" y="0" width="5.9" height="6.2" fill="#515657"/><rect x="47.04" y="0" width="5.9" height="6.2" fill="#515657"/></g></svg>
<div style="left:81.45px;top:650.20px;width:74.00px;height:53.00px;background:#4a4e4f;border-radius:4px;"></div>
<span class="t" style="top:668.00px;left:118.45px;transform:translateX(-50%) scaleX(1.020);font-size:10px;color:#f4f5f5;font-weight:bold;">Kick 2</span>
<svg style="left:92px;top:694px;" width="55" height="8" viewBox="0 0 55 8"><g transform="translate(0.45,0.60)"><rect x="0.00" y="0" width="5.9" height="6.2" fill="#8ccbfa"/><rect x="6.72" y="0" width="5.9" height="6.2" fill="#515657"/><rect x="13.44" y="0" width="5.9" height="6.2" fill="#515657"/><rect x="20.16" y="0" width="5.9" height="6.2" fill="#515657"/><rect x="26.88" y="0" width="5.9" height="6.2" fill="#515657"/><rect x="33.60" y="0" width="5.9" height="6.2" fill="#515657"/><rect x="40.32" y="0" width="5.9" height="6.2" fill="#515657"/><rect x="47.04" y="0" width="5.9" height="6.2" fill="#515657"/></g></svg>
<div style="left:158.90px;top:650.20px;width:74.00px;height:53.00px;background:#4a4e4f;border-radius:4px;"></div>
<span class="t" style="top:668.00px;left:195.90px;transform:translateX(-50%) scaleX(1.020);font-size:10px;color:#f4f5f5;font-weight:bold;">Kick 3</span>
<svg style="left:169px;top:694px;" width="55" height="8" viewBox="0 0 55 8"><g transform="translate(0.90,0.60)"><rect x="0.00" y="0" width="5.9" height="6.2" fill="#8ccbfa"/><rect x="6.72" y="0" width="5.9" height="6.2" fill="#515657"/><rect x="13.44" y="0" width="5.9" height="6.2" fill="#515657"/><rect x="20.16" y="0" width="5.9" height="6.2" fill="#515657"/><rect x="26.88" y="0" width="5.9" height="6.2" fill="#515657"/><rect x="33.60" y="0" width="5.9" height="6.2" fill="#515657"/><rect x="40.32" y="0" width="5.9" height="6.2" fill="#515657"/><rect x="47.04" y="0" width="5.9" height="6.2" fill="#515657"/></g></svg>
<div style="left:236.35px;top:650.20px;width:74.00px;height:53.00px;background:#4a4e4f;border-radius:4px;"></div>
<span class="t" style="top:668.00px;left:273.35px;transform:translateX(-50%) scaleX(1.020);font-size:10px;color:#f4f5f5;font-weight:bold;">Kick 4</span>
<svg style="left:247px;top:694px;" width="55" height="8" viewBox="0 0 55 8"><g transform="translate(0.35,0.60)"><rect x="0.00" y="0" width="5.9" height="6.2" fill="#8ccbfa"/><rect x="6.72" y="0" width="5.9" height="6.2" fill="#515657"/><rect x="13.44" y="0" width="5.9" height="6.2" fill="#515657"/><rect x="20.16" y="0" width="5.9" height="6.2" fill="#515657"/><rect x="26.88" y="0" width="5.9" height="6.2" fill="#515657"/><rect x="33.60" y="0" width="5.9" height="6.2" fill="#515657"/><rect x="40.32" y="0" width="5.9" height="6.2" fill="#515657"/><rect x="47.04" y="0" width="5.9" height="6.2" fill="#515657"/></g></svg>
<span class="t" style="top:405.00px;left:321.40px;transform-origin:0 50%;transform:scaleX(0.889);font-size:10px;color:#f4f5f5;">Tom 2</span>
<div style="left:320.40px;top:421.00px;width:95.60px;height:11.40px;background:#414647;"></div>
<div style="left:320.40px;top:421.00px;width:95.60px;height:5.40px;background:#4a4e4f;"></div>
<div style="left:320.40px;top:427.00px;width:95.60px;height:5.40px;background:#4a4e4f;"></div>
<div style="left:410.60px;top:421.00px;width:5.40px;height:5.40px;background:#5e2436;"></div>
<div style="left:410.60px;top:427.00px;width:5.40px;height:5.40px;background:#5e2436;"></div>
<div style="left:320.40px;top:435.40px;width:15.00px;height:15.50px;background:#b9bbbc;border-radius:2.5px;"></div>
<span class="t" style="top:437.00px;left:327.90px;transform:translateX(-50%) scaleX(1.000);font-size:10px;color:#4a4e4f;">M</span>
<div style="left:337.20px;top:435.40px;width:15.20px;height:15.50px;background:#b9bbbc;border-radius:2.5px;"></div>
<span class="t" style="top:437.00px;left:344.80px;transform:translateX(-50%) scaleX(1.000);font-size:10px;color:#4a4e4f;">S</span>
<div style="left:354.00px;top:435.40px;width:30.00px;height:15.50px;background:#b9bbbc;border-radius:2.5px;"></div>
<span class="t" style="top:437.00px;left:369.00px;transform:translateX(-50%) scaleX(1.000);font-size:10px;color:#4a4e4f;">Pad</span>
<div style="left:386.00px;top:435.40px;width:30.40px;height:15.50px;background:#8ccbfa;border-radius:2.5px;"></div>
<span class="t" style="top:437.00px;left:401.20px;transform:translateX(-50%) scaleX(1.000);font-size:10px;color:#33383a;">Layer</span>
<div style="left:319.00px;top:457.00px;width:99.80px;height:17.40px;background:#656d71;border-radius:4px 0px 3px 0px;"></div>
<span class="t" style="top:459.00px;left:322.00px;transform-origin:0 50%;transform:scaleX(0.909);font-size:10px;color:#f4f5f5;">Pad options...</span>
<svg style="left:381px;top:461px;" width="8" height="9" viewBox="0 0 8 9"><g transform="translate(0.30,0.80)"><polygon points="0,0 7.4,4.0 0,8" fill="#f4f5f5"/></g></svg>
<div style="left:319.00px;top:474.40px;width:100.60px;height:228.60px;background:#656d71;"></div>
<div style="left:319.00px;top:475.00px;width:101.50px;height:27.80px;background:#eef0f1;"></div>
<span class="t" style="top:475.00px;left:320.60px;transform-origin:0 50%;transform:scaleX(0.897);font-size:10px;color:#33383a;">80s_DrumBox_07</span>
<div style="left:320.60px;top:489.00px;width:15.00px;height:11.00px;background:#b9bbbc;border-radius:2px;"></div>
<span class="t" style="top:488.00px;left:328.10px;transform:translateX(-50%) scaleX(1.000);font-size:9.5px;color:#4a4e4f;">M</span>
<div style="left:337.20px;top:489.00px;width:15.00px;height:11.00px;background:#b9bbbc;border-radius:2px;"></div>
<span class="t" style="top:488.00px;left:344.70px;transform:translateX(-50%) scaleX(1.000);font-size:9.5px;color:#4a4e4f;">S</span>
<div style="left:354.00px;top:489.00px;width:60.40px;height:11.00px;background:#272d2e;"></div>
<div style="left:408.00px;top:489.00px;width:6.40px;height:11.00px;background:#5a2234;"></div>
<div style="left:319.00px;top:503.00px;width:100.60px;height:1.00px;background:#3f4547;"></div>
<span class="t" style="top:504.00px;left:320.60px;transform-origin:0 50%;transform:scaleX(0.897);font-size:10px;color:#363c3e;">80s_DrumBox_06</span>
<div style="left:320.60px;top:517.55px;width:15.00px;height:11.00px;background:#b9bbbc;border-radius:2px;"></div>
<span class="t" style="top:517.00px;left:328.10px;transform:translateX(-50%) scaleX(1.000);font-size:9.5px;color:#4a4e4f;">M</span>
<div style="left:337.20px;top:517.55px;width:15.00px;height:11.00px;background:#b9bbbc;border-radius:2px;"></div>
<span class="t" style="top:517.00px;left:344.70px;transform:translateX(-50%) scaleX(1.000);font-size:9.5px;color:#4a4e4f;">S</span>
<div style="left:354.00px;top:517.55px;width:60.40px;height:11.00px;background:#272d2e;"></div>
<div style="left:408.00px;top:517.55px;width:6.40px;height:11.00px;background:#5a2234;"></div>
<div style="left:319.00px;top:532.00px;width:100.60px;height:1.00px;background:#3f4547;"></div>
<span class="t" style="top:532.00px;left:320.60px;transform-origin:0 50%;transform:scaleX(0.897);font-size:10px;color:#363c3e;">80s_DrumBox_05</span>
<div style="left:320.60px;top:546.10px;width:15.00px;height:11.00px;background:#b9bbbc;border-radius:2px;"></div>
<span class="t" style="top:545.00px;left:328.10px;transform:translateX(-50%) scaleX(1.000);font-size:9.5px;color:#4a4e4f;">M</span>
<div style="left:337.20px;top:546.10px;width:15.00px;height:11.00px;background:#b9bbbc;border-radius:2px;"></div>
<span class="t" style="top:545.00px;left:344.70px;transform:translateX(-50%) scaleX(1.000);font-size:9.5px;color:#4a4e4f;">S</span>
<div style="left:354.00px;top:546.10px;width:60.40px;height:11.00px;background:#272d2e;"></div>
<div style="left:408.00px;top:546.10px;width:6.40px;height:11.00px;background:#5a2234;"></div>
<div style="left:319.00px;top:560.00px;width:100.60px;height:1.00px;background:#3f4547;"></div>
<span class="t" style="top:561.00px;left:320.60px;transform-origin:0 50%;transform:scaleX(0.891);font-size:10px;color:#4f575a;">Empty Layer</span>
<div style="left:319.00px;top:589.00px;width:100.60px;height:1.00px;background:#3f4547;"></div>
<span class="t" style="top:589.00px;left:320.60px;transform-origin:0 50%;transform:scaleX(0.891);font-size:10px;color:#4f575a;">Empty Layer</span>
<div style="left:319.00px;top:617.00px;width:100.60px;height:1.00px;background:#3f4547;"></div>
<span class="t" style="top:618.00px;left:320.60px;transform-origin:0 50%;transform:scaleX(0.891);font-size:10px;color:#4f575a;">Empty Layer</span>
<div style="left:319.00px;top:646.00px;width:100.60px;height:1.00px;background:#3f4547;"></div>
<span class="t" style="top:646.00px;left:320.60px;transform-origin:0 50%;transform:scaleX(0.891);font-size:10px;color:#4f575a;">Empty Layer</span>
<div style="left:319.00px;top:674.00px;width:100.60px;height:1.00px;background:#3f4547;"></div>
<span class="t" style="top:675.00px;left:320.60px;transform-origin:0 50%;transform:scaleX(0.891);font-size:10px;color:#4f575a;">Empty Layer</span>
<div style="left:419.50px;top:400.00px;width:798.50px;height:303.00px;background:#eef0f1;border-radius:3px 3px 0px 0px;"></div>
<div style="left:424.40px;top:405.00px;width:788.60px;height:27.00px;background:#656d71;border-radius:2px 3px 0px 0px;"></div>
<div style="left:424.4px;top:431.4px;width:788.6px;height:92.8px;background:linear-gradient(to bottom,#c4d4e1 0%,#b9ccdb 25%,#b1c5d6 44%,#b3c7d8 52%,#c0d1df 78%,#c8d7e4 100%);"></div>
<div style="left:424.40px;top:431.00px;width:788.60px;height:1.00px;background:#72a9d9;"></div>
<span class="t" style="top:406.00px;left:428.60px;transform-origin:0 50%;transform:scaleX(0.936);font-size:8.5px;color:#dfe2e4;">1.1.1</span>
<div style="left:621.90px;top:406.00px;width:1.10px;height:25.40px;background:#e3e6e8;"></div>
<div style="left:621.90px;top:431.40px;width:1.10px;height:92.60px;background:rgba(255,255,255,0.16);"></div>
<span class="t" style="top:406.00px;left:625.00px;transform-origin:0 50%;transform:scaleX(0.936);font-size:8.5px;color:#dfe2e4;">1.1.2</span>
<div style="left:818.50px;top:406.00px;width:1.10px;height:25.40px;background:#e3e6e8;"></div>
<div style="left:818.50px;top:431.40px;width:1.10px;height:92.60px;background:rgba(255,255,255,0.16);"></div>
<span class="t" style="top:406.00px;left:821.60px;transform-origin:0 50%;transform:scaleX(0.936);font-size:8.5px;color:#dfe2e4;">1.1.3</span>
<div style="left:1016.10px;top:406.00px;width:1.10px;height:25.40px;background:#e3e6e8;"></div>
<div style="left:1016.10px;top:431.40px;width:1.10px;height:92.60px;background:rgba(255,255,255,0.16);"></div>
<span class="t" style="top:406.00px;left:1019.20px;transform-origin:0 50%;transform:scaleX(0.936);font-size:8.5px;color:#dfe2e4;">1.1.4</span>
<div style="left:427.00px;top:477.20px;width:783.00px;height:0.90px;background:rgba(110,135,155,0.55);"></div>
<svg style="left:424px;top:431px;" width="790" height="94" viewBox="0 0 790 94"><g transform="translate(0.40,0.40)"><path d="M3.1,46.20 L3.6,41.92 L4.1,34.43 L4.6,24.28 L5.1,13.29 L5.6,11.70 L6.1,19.20 L6.6,28.50 L7.1,39.47 L7.6,48.75 L8.1,56.84 L8.6,64.87 L9.1,72.55 L9.6,78.85 L10.1,77.12 L10.6,75.55 L11.1,72.89 L11.6,69.96 L12.1,66.78 L12.6,62.83 L13.1,59.36 L13.6,55.96 L14.1,52.32 L14.6,48.72 L15.1,44.61 L15.6,39.12 L16.1,34.91 L16.6,30.48 L17.1,26.08 L17.6,21.86 L18.1,18.57 L18.6,15.08 L19.1,13.16 L19.6,10.90 L20.1,8.92 L20.6,10.58 L21.1,14.70 L21.6,18.85 L22.1,24.33 L22.6,30.09 L23.1,35.97 L23.6,42.28 L24.1,47.79 L24.6,51.24 L25.1,54.27 L25.6,57.28 L26.1,60.12 L26.6,61.29 L27.1,63.08 L27.6,64.91 L28.1,63.48 L28.6,62.07 L29.1,59.87 L29.6,57.16 L30.1,54.78 L30.6,50.79 L31.1,47.53 L31.6,42.74 L32.1,38.02 L32.6,32.98 L33.1,28.87 L33.6,25.69 L34.1,22.51 L34.6,20.70 L35.1,20.27 L35.6,21.49 L36.1,24.05 L36.6,27.39 L37.1,31.57 L37.6,35.55 L38.1,39.60 L38.6,44.22 L39.1,48.14 L39.6,52.07 L40.1,55.23 L40.6,59.10 L41.1,62.20 L41.6,64.75 L42.1,66.41 L42.6,67.91 L43.1,65.66 L43.6,63.97 L44.1,62.14 L44.6,59.09 L45.1,55.53 L45.6,52.50 L46.1,48.54 L46.6,44.81 L47.1,40.23 L47.6,36.26 L48.1,32.94 L48.6,29.54 L49.1,27.16 L49.6,25.65 L50.1,23.66 L50.6,24.31 L51.1,26.34 L51.6,29.03 L52.1,32.66 L52.6,35.79 L53.1,39.54 L53.6,43.39 L54.1,48.10 L54.6,51.20 L55.1,54.43 L55.6,57.43 L56.1,60.18 L56.6,62.58 L57.1,64.73 L57.6,65.40 L58.1,63.89 L58.6,62.39 L59.1,59.80 L59.6,57.71 L60.1,53.86 L60.6,50.95 L61.1,47.80 L61.6,43.73 L62.1,40.35 L62.6,36.20 L63.1,32.63 L63.6,29.85 L64.1,27.09 L64.6,25.58 L65.1,24.61 L65.6,26.74 L66.1,28.79 L66.6,31.10 L67.1,33.74 L67.6,37.36 L68.1,41.01 L68.6,44.79 L69.1,48.00 L69.6,51.39 L70.1,53.35 L70.6,55.61 L71.1,58.46 L71.6,59.82 L72.1,61.49 L72.6,61.50 L73.1,60.81 L73.6,59.05 L74.1,57.27 L74.6,55.03 L75.1,52.35 L75.6,49.36 L76.1,46.76 L76.6,43.95 L77.1,40.37 L77.6,37.00 L78.1,33.39 L78.6,31.00 L79.1,28.92 L79.6,27.09 L80.1,26.49 L80.6,27.59 L81.1,29.59 L81.6,31.98 L82.1,34.40 L82.6,38.14 L83.1,41.58 L83.6,44.37 L84.1,48.13 L84.6,50.57 L85.1,52.61 L85.6,54.14 L86.1,56.74 L86.6,57.56 L87.1,59.49 L87.6,60.02 L88.1,58.55 L88.6,57.38 L89.1,56.22 L89.6,54.31 L90.1,52.39 L90.6,50.32 L91.1,47.36 L91.6,44.27 L92.1,41.44 L92.6,37.10 L93.1,34.62 L93.6,31.02 L94.1,29.16 L94.6,27.14 L95.1,25.77 L95.6,26.38 L96.1,28.55 L96.6,30.27 L97.1,33.44 L97.6,36.19 L98.1,40.00 L98.6,43.32 L99.1,46.39 L99.6,48.56 L100.1,50.13 L100.6,52.02 L101.1,54.20 L101.6,55.53 L102.1,57.02 L102.6,57.66 L103.1,57.34 L103.6,56.66 L104.1,55.85 L104.6,54.21 L105.1,52.12 L105.6,51.03 L106.1,49.08 L106.6,46.45 L107.1,44.17 L107.6,41.19 L108.1,38.89 L108.6,36.14 L109.1,34.06 L109.6,32.62 L110.1,31.77 L110.6,30.28 L111.1,31.23 L111.6,32.91 L112.1,34.75 L112.6,36.41 L113.1,38.55 L113.6,41.30 L114.1,43.79 L114.6,45.86 L115.1,48.30 L115.6,49.50 L116.1,51.21 L116.6,53.11 L117.1,54.07 L117.6,55.43 L118.1,55.76 L118.6,56.89 L119.1,55.73 L119.6,54.85 L120.1,54.03 L120.6,52.61 L121.1,51.30 L121.6,49.97 L122.1,48.12 L122.6,45.81 L123.1,43.43 L123.6,41.05 L124.1,38.59 L124.6,36.57 L125.1,34.44 L125.6,32.49 L126.1,31.33 L126.6,30.87 L127.1,31.46 L127.6,33.07 L128.1,34.84 L128.6,36.43 L129.1,38.55 L129.6,40.76 L130.1,42.91 L130.6,45.78 L131.1,47.36 L131.6,49.35 L132.1,50.50 L132.6,52.38 L133.1,53.65 L133.6,54.68 L134.1,55.50 L134.6,56.02 L135.1,56.56 L135.6,55.58 L136.1,54.87 L136.6,53.39 L137.1,52.06 L137.6,50.65 L138.1,49.54 L138.6,47.48 L139.1,46.25 L139.6,43.75 L140.1,41.83 L140.6,39.76 L141.1,38.21 L141.6,36.36 L142.1,35.31 L142.6,34.67 L143.1,33.50 L143.6,34.23 L144.1,34.93 L144.6,36.07 L145.1,37.29 L145.6,38.88 L146.1,41.22 L146.6,43.04 L147.1,44.99 L147.6,46.87 L148.1,48.52 L148.6,49.53 L149.1,51.22 L149.6,52.45 L150.1,53.64 L150.6,54.84 L151.1,55.49 L151.6,56.17 L152.1,55.27 L152.6,54.87 L153.1,53.96 L153.6,52.92 L154.1,51.60 L154.6,50.38 L155.1,48.61 L155.6,47.52 L156.1,45.54 L156.6,43.67 L157.1,41.93 L157.6,40.00 L158.1,38.08 L158.6,36.56 L159.1,35.37 L159.6,34.55 L160.1,34.03 L160.6,34.42 L161.1,35.03 L161.6,36.19 L162.1,37.81 L162.6,39.02 L163.1,40.79 L163.6,42.34 L164.1,44.31 L164.6,46.36 L165.1,47.79 L165.6,49.04 L166.1,50.10 L166.6,51.56 L167.1,52.35 L167.6,52.92 L168.1,53.55 L168.6,54.62 L169.1,54.72 L169.6,54.16 L170.1,53.30 L170.6,52.29 L171.1,51.20 L171.6,50.20 L172.1,48.99 L172.6,48.13 L173.1,46.81 L173.6,45.15 L174.1,43.13 L174.6,41.59 L175.1,40.15 L175.6,39.18 L176.1,37.61 L176.6,37.01 L177.1,36.21 L177.6,35.62 L178.1,36.47 L178.6,36.95 L179.1,38.13 L179.6,39.16 L180.1,40.50 L180.6,41.95 L181.1,43.67 L181.6,45.19 L182.1,46.65 L182.6,48.44 L183.1,49.35 L183.6,50.85 L184.1,51.84 L184.6,52.81 L185.1,53.57 L185.6,54.36 L186.1,54.73 L186.6,54.13 L187.1,53.37 L187.6,52.61 L188.1,51.65 L188.6,50.49 L189.1,49.30 L189.6,47.91 L190.1,46.99 L190.6,45.45 L191.1,43.79 L191.6,42.44 L192.1,41.48 L192.6,40.03 L193.1,39.08 L193.6,38.38 L194.1,37.82 L194.6,37.12 L195.1,37.64 L195.6,38.30 L196.1,38.93 L196.6,40.25 L197.1,40.94 L197.6,42.53 L198.1,43.42" fill="none" stroke="#6c8494" stroke-width="2.7" stroke-linejoin="miter" stroke-miterlimit="4" stroke-linecap="round"/><path d="M197.6,42.18 L198.1,43.73 L198.6,45.02 L199.1,46.08 L199.6,47.24 L200.1,48.17 L200.6,49.19 L201.1,49.79 L201.6,50.81 L202.1,51.52 L202.6,51.91 L203.1,52.44 L203.6,52.76 L204.1,52.17 L204.6,51.92 L205.1,51.34 L205.6,50.57 L206.1,49.60 L206.6,48.99 L207.1,48.23 L207.6,47.05 L208.1,46.26 L208.6,45.11 L209.1,43.76 L209.6,42.37 L210.1,41.54 L210.6,40.41 L211.1,39.82 L211.6,39.03 L212.1,38.32 L212.6,38.16 L213.1,38.51 L213.6,38.99 L214.1,39.94 L214.6,40.83 L215.1,41.80 L215.6,42.86 L216.1,43.90 L216.6,45.09 L217.1,46.24 L217.6,47.10 L218.1,48.15 L218.6,48.73 L219.1,49.39 L219.6,50.32 L220.1,50.84 L220.6,51.36 L221.1,51.78 L221.6,51.93 L222.1,51.60 L222.6,51.13 L223.1,50.87 L223.6,50.31 L224.1,49.53 L224.6,48.56 L225.1,48.07 L225.6,47.17 L226.1,46.20 L226.6,44.94 L227.1,44.19 L227.6,43.12 L228.1,42.20 L228.6,41.17 L229.1,40.71 L229.6,39.87 L230.1,39.57 L230.6,39.13 L231.1,39.59 L231.6,40.27 L232.1,40.83 L232.6,41.56 L233.1,42.19 L233.6,43.09 L234.1,44.09 L234.6,44.86 L235.1,45.96 L235.6,46.97 L236.1,47.68 L236.6,48.45 L237.1,48.96 L237.6,49.72 L238.1,50.31 L238.6,50.76 L239.1,51.06 L239.6,51.27 L240.1,51.17 L240.6,51.12 L241.1,50.72 L241.6,50.01 L242.1,49.58 L242.6,48.83 L243.1,48.21 L243.6,47.55 L244.1,46.64 L244.6,45.93 L245.1,44.91 L245.6,44.11 L246.1,43.14 L246.6,42.45 L247.1,41.78 L247.6,41.38 L248.1,40.65 L248.6,40.46 L249.1,40.04 L249.6,40.64 L250.1,40.82 L250.6,41.32 L251.1,41.96 L251.6,42.86 L252.1,43.52 L252.6,44.38 L253.1,45.08 L253.6,45.81 L254.1,46.62 L254.6,47.33 L255.1,48.14 L255.6,48.52 L256.1,49.10 L256.6,49.78 L257.1,50.01 L257.6,50.61 L258.1,50.70 L258.6,50.88 L259.1,50.65 L259.6,50.38 L260.1,49.73 L260.6,49.47 L261.1,48.75 L261.6,48.32 L262.1,47.51 L262.6,47.07 L263.1,46.26 L263.6,45.51 L264.1,44.70 L264.6,44.04 L265.1,43.35 L265.6,42.90 L266.1,42.24 L266.6,41.70 L267.1,41.48 L267.6,40.96 L268.1,40.90 L268.6,41.39 L269.1,41.77 L269.6,42.16 L270.1,42.76 L270.6,43.11 L271.1,43.96 L271.6,44.59 L272.1,45.28 L272.6,46.04 L273.1,46.49 L273.6,47.10 L274.1,47.65 L274.6,48.27 L275.1,48.77 L275.6,49.21 L276.1,49.55 L276.6,49.97 L277.1,50.26 L277.6,50.43 L278.1,50.05 L278.6,49.81 L279.1,49.50 L279.6,49.11 L280.1,48.75 L280.6,48.17 L281.1,47.75 L281.6,47.13 L282.1,46.57 L282.6,46.05 L283.1,45.44 L283.6,44.60 L284.1,44.03 L284.6,43.60 L285.1,42.90 L285.6,42.39 L286.1,42.04 L286.6,41.87 L287.1,41.61 L287.6,41.72 L288.1,41.89 L288.6,42.12 L289.1,42.59 L289.6,43.15 L290.1,43.60 L290.6,44.10 L291.1,44.74 L291.6,45.38 L292.1,45.98 L292.6,46.57 L293.1,47.02 L293.6,47.51 L294.1,48.16 L294.6,48.59 L295.1,48.93 L295.6,49.21 L296.1,49.55 L296.6,49.85 L297.1,50.11 L297.6,49.91 L298.1,49.79 L298.6,49.40 L299.1,48.98 L299.6,48.69 L300.1,48.26 L300.6,47.80 L301.1,47.33 L301.6,46.67 L302.1,46.25 L302.6,45.75 L303.1,45.02 L303.6,44.44 L304.1,43.95 L304.6,43.49 L305.1,43.08 L305.6,42.68 L306.1,42.43 L306.6,42.08 L307.1,41.93 L307.6,42.19 L308.1,42.42 L308.6,42.82 L309.1,43.19 L309.6,43.47 L310.1,43.95 L310.6,44.49 L311.1,45.01 L311.6,45.52 L312.1,46.17 L312.6,46.52 L313.1,47.05 L313.6,47.43 L314.1,48.02 L314.6,48.36 L315.1,48.80 L315.6,48.95 L316.1,49.34 L316.6,49.54 L317.1,49.60 L317.6,49.70 L318.1,49.51 L318.6,49.10 L319.1,48.98 L319.6,48.61 L320.1,48.20 L320.6,47.78 L321.1,47.30 L321.6,46.81 L322.1,46.43 L322.6,46.02 L323.1,45.38 L323.6,44.94 L324.1,44.44 L324.6,44.08 L325.1,43.73 L325.6,43.36 L326.1,42.94 L326.6,42.71 L327.1,42.44 L327.6,42.49 L328.1,42.74 L328.6,42.97 L329.1,43.12 L329.6,43.52 L330.1,43.83 L330.6,44.30 L331.1,44.83 L331.6,45.17 L332.1,45.75 L332.6,46.25 L333.1,46.65 L333.6,46.96 L334.1,47.49 L334.6,47.87 L335.1,48.24 L335.6,48.38 L336.1,48.66 L336.6,48.96 L337.1,49.20 L337.6,49.33 L338.1,49.26 L338.6,49.19 L339.1,48.98 L339.6,48.72 L340.1,48.41 L340.6,48.09 L341.1,47.76 L341.6,47.28 L342.1,46.95 L342.6,46.50 L343.1,46.08 L343.6,45.74 L344.1,45.22 L344.6,44.79 L345.1,44.38 L345.6,44.06 L346.1,43.64 L346.6,43.44 L347.1,43.09 L347.6,43.03 L348.1,42.74 L348.6,42.91 L349.1,43.06 L349.6,43.27 L350.1,43.52 L350.6,43.83 L351.1,44.24 L351.6,44.57 L352.1,44.97 L352.6,45.33 L353.1,45.81 L353.6,46.16 L354.1,46.59 L354.6,46.98 L355.1,47.31 L355.6,47.65 L356.1,47.96 L356.6,48.17 L357.1,48.55 L357.6,48.72 L358.1,48.90 L358.6,49.08 L359.1,49.01 L359.6,48.85 L360.1,48.67 L360.6,48.45 L361.1,48.20 L361.6,47.93 L362.1,47.61 L362.6,47.34 L363.1,46.97 L363.6,46.63 L364.1,46.33 L364.6,45.88 L365.1,45.57 L365.6,45.18 L366.1,44.74 L366.6,44.48 L367.1,44.06 L367.6,43.77 L368.1,43.66 L368.6,43.31 L369.1,43.14 L369.6,43.17 L370.1,43.17 L370.6,43.45 L371.1,43.64 L371.6,43.84 L372.1,44.12 L372.6,44.54 L373.1,44.78 L373.6,45.11 L374.1,45.50 L374.6,45.91 L375.1,46.21 L375.6,46.50 L376.1,46.92 L376.6,47.12 L377.1,47.40 L377.6,47.66 L378.1,48.05 L378.6,48.19 L379.1,48.42 L379.6,48.55 L380.1,48.74 L380.6,48.70 L381.1,48.58 L381.6,48.48 L382.1,48.20 L382.6,48.05 L383.1,47.88 L383.6,47.59 L384.1,47.31 L384.6,47.09 L385.1,46.71 L385.6,46.45 L386.1,46.08 L386.6,45.69 L387.1,45.40 L387.6,45.05 L388.1,44.71 L388.6,44.46 L389.1,44.18 L389.6,44.00 L390.1,43.84 L390.6,43.68 L391.1,43.57 L391.6,43.47 L392.1,43.64 L392.6,43.84 L393.1,43.96 L393.6,44.25 L394.1,44.39 L394.6,44.77 L395.1,45.05 L395.6,45.37 L396.1,45.66 L396.6,45.96 L397.1,46.24 L397.6,46.56 L398.1,46.86 L398.6,47.08 L399.1,47.34 L399.6,47.61 L400.1,47.75 L400.6,47.94 L401.1,48.07 L401.6,48.32 L402.1,48.41 L402.6,48.50 L403.1,48.35 L403.6,48.22 L404.1,48.11 L404.6,47.98 L405.1,47.72 L405.6,47.51 L406.1,47.28 L406.6,47.09 L407.1,46.74 L407.6,46.57 L408.1,46.19 L408.6,45.99 L409.1,45.70 L409.6,45.38 L410.1,45.14 L410.6,44.83 L411.1,44.58 L411.6,44.40 L412.1,44.20 L412.6,44.10 L413.1,43.95 L413.6,43.86 L414.1,43.93 L414.6,44.02 L415.1,44.16 L415.6,44.35 L416.1,44.54 L416.6,44.73 L417.1,44.91 L417.6,45.17 L418.1,45.46 L418.6,45.73 L419.1,46.01 L419.6,46.26 L420.1,46.50 L420.6,46.69 L421.1,46.96 L421.6,47.13 L422.1,47.38 L422.6,47.52 L423.1,47.67 L423.6,47.92 L424.1,48.04 L424.6,48.08 L425.1,48.13 L425.6,48.19 L426.1,48.08 L426.6,47.89 L427.1,47.82 L427.6,47.66 L428.1,47.46 L428.6,47.23 L429.1,47.00 L429.6,46.79 L430.1,46.60 L430.6,46.40 L431.1,46.16 L431.6,45.87 L432.1,45.69 L432.6,45.38 L433.1,45.21 L433.6,44.96 L434.1,44.75 L434.6,44.60 L435.1,44.51 L435.6,44.33 L436.1,44.20 L436.6,44.17 L437.1,44.20 L437.6,44.32 L438.1,44.45 L438.6,44.60 L439.1,44.78 L439.6,44.90 L440.1,45.12 L440.6,45.28 L441.1,45.50 L441.6,45.71 L442.1,46.01 L442.6,46.18 L443.1,46.43 L443.6,46.64 L444.1,46.79 L444.6,46.96 L445.1,47.14 L445.6,47.32 L446.1,47.46 L446.6,47.56 L447.1,47.75 L447.6,47.82 L448.1,47.92 L448.6,47.94 L449.1,47.85 L449.6,47.77 L450.1,47.65 L450.6,47.49 L451.1,47.39 L451.6,47.24 L452.1,47.00 L452.6,46.82 L453.1,46.64 L453.6,46.48 L454.1,46.33 L454.6,46.10 L455.1,45.92 L455.6,45.68 L456.1,45.51 L456.6,45.30 L457.1,45.17 L457.6,44.98 L458.1,44.82 L458.6,44.73 L459.1,44.65 L459.6,44.59 L460.1,44.48 L460.6,44.57 L461.1,44.65 L461.6,44.69 L462.1,44.86 L462.6,45.00 L463.1,45.15 L463.6,45.28 L464.1,45.42 L464.6,45.61 L465.1,45.80 L465.6,45.98 L466.1,46.12 L466.6,46.35 L467.1,46.49 L467.6,46.62 L468.1,46.79 L468.6,46.92 L469.1,47.09 L469.6,47.18 L470.1,47.33 L470.6,47.41 L471.1,47.53 L471.6,47.60 L472.1,47.60 L472.6,47.62 L473.1,47.54 L473.6,47.43 L474.1,47.38 L474.6,47.21 L475.1,47.12 L475.6,47.00" fill="none" stroke="#62788a" stroke-width="1.3" stroke-linejoin="miter" stroke-miterlimit="4" stroke-linecap="round"/><path d="M474.6,47.22 L475.1,47.12 L475.6,47.02 L476.1,46.84 L476.6,46.73 L477.1,46.54 L477.6,46.44 L478.1,46.29 L478.6,46.07 L479.1,45.95 L479.6,45.76 L480.1,45.58 L480.6,45.45 L481.1,45.35 L481.6,45.21 L482.1,45.11 L482.6,44.98 L483.1,44.90 L483.6,44.85 L484.1,44.80 L484.6,44.84 L485.1,44.88 L485.6,44.95 L486.1,45.08 L486.6,45.17 L487.1,45.28 L487.6,45.41 L488.1,45.52 L488.6,45.64 L489.1,45.77 L489.6,45.96 L490.1,46.11 L490.6,46.27 L491.1,46.41 L491.6,46.52 L492.1,46.65 L492.6,46.81 L493.1,46.87 L493.6,47.00 L494.1,47.11 L494.6,47.20 L495.1,47.28 L495.6,47.31 L496.1,47.39 L496.6,47.41 L497.1,47.38 L497.6,47.31 L498.1,47.24 L498.6,47.18 L499.1,47.07 L499.6,46.96 L500.1,46.87 L500.6,46.76 L501.1,46.62 L501.6,46.49 L502.1,46.37 L502.6,46.26 L503.1,46.09 L503.6,45.99 L504.1,45.82 L504.6,45.75 L505.1,45.59 L505.6,45.52 L506.1,45.37 L506.6,45.31 L507.1,45.21 L507.6,45.18 L508.1,45.12 L508.6,45.04 L509.1,45.02 L509.6,45.11 L510.1,45.15 L510.6,45.22 L511.1,45.29 L511.6,45.38 L512.1,45.49 L512.6,45.58 L513.1,45.68 L513.6,45.81 L514.1,45.95 L514.6,46.06 L515.1,46.17 L515.6,46.30 L516.1,46.39 L516.6,46.50 L517.1,46.63 L517.6,46.69 L518.1,46.82 L518.6,46.88 L519.1,46.98 L519.6,47.05 L520.1,47.12 L520.6,47.14 L521.1,47.21 L521.6,47.25 L522.1,47.17 L522.6,47.15 L523.1,47.07 L523.6,47.03 L524.1,46.96 L524.6,46.83 L525.1,46.76 L525.6,46.67 L526.1,46.60 L526.6,46.49 L527.1,46.34 L527.6,46.24 L528.1,46.15 L528.6,46.07 L529.1,45.96 L529.6,45.85 L530.1,45.78 L530.6,45.68 L531.1,45.60 L531.6,45.51 L532.1,45.43 L532.6,45.39 L533.1,45.34 L533.6,45.31 L534.1,45.24 L534.6,45.26 L535.1,45.31 L535.6,45.36 L536.1,45.42 L536.6,45.47 L537.1,45.57 L537.6,45.64 L538.1,45.71 L538.6,45.79 L539.1,45.91 L539.6,45.98 L540.1,46.11 L540.6,46.18 L541.1,46.30 L541.6,46.36 L542.1,46.46 L542.6,46.57 L543.1,46.64 L543.6,46.71 L544.1,46.80 L544.6,46.84 L545.1,46.93 L545.6,46.96 L546.1,47.00 L546.6,47.03 L547.1,47.06 L547.6,47.05 L548.1,47.00 L548.6,46.96 L549.1,46.91 L549.6,46.86 L550.1,46.78 L550.6,46.69 L551.1,46.63 L551.6,46.55 L552.1,46.48 L552.6,46.37 L553.1,46.29 L553.6,46.21 L554.1,46.11 L554.6,46.02 L555.1,45.95 L555.6,45.86 L556.1,45.81 L556.6,45.72 L557.1,45.65 L557.6,45.60 L558.1,45.55 L558.6,45.52 L559.1,45.48 L559.6,45.43 L560.1,45.41 L560.6,45.44 L561.1,45.47 L561.6,45.52 L562.1,45.56 L562.6,45.63 L563.1,45.69 L563.6,45.75 L564.1,45.82 L564.6,45.89 L565.1,45.94 L565.6,46.05 L566.1,46.09 L566.6,46.17 L567.1,46.26 L567.6,46.32 L568.1,46.40 L568.6,46.48 L569.1,46.53 L569.6,46.61 L570.1,46.66 L570.6,46.74 L571.1,46.76 L571.6,46.81 L572.1,46.85 L572.6,46.87 L573.1,46.90 L573.6,46.90 L574.1,46.87 L574.6,46.84 L575.1,46.80 L575.6,46.75 L576.1,46.69 L576.6,46.64 L577.1,46.58 L577.6,46.50 L578.1,46.46 L578.6,46.38 L579.1,46.33 L579.6,46.24 L580.1,46.18 L580.6,46.11 L581.1,46.06 L581.6,46.00 L582.1,45.94 L582.6,45.88 L583.1,45.84 L583.6,45.77 L584.1,45.75 L584.6,45.70 L585.1,45.67 L585.6,45.63 L586.1,45.61 L586.6,45.60 L587.1,45.64 L587.6,45.65 L588.1,45.70 L588.6,45.72 L589.1,45.78 L589.6,45.83 L590.1,45.87 L590.6,45.92 L591.1,45.97 L591.6,46.02 L592.1,46.05 L592.6,46.12 L593.1,46.16 L593.6,46.22 L594.1,46.28 L594.6,46.33 L595.1,46.36 L595.6,46.41 L596.1,46.44 L596.6,46.50 L597.1,46.54 L597.6,46.55 L598.1,46.58 L598.6,46.60 L599.1,46.64 L599.6,46.63 L600.1,46.65 L600.6,46.65 L601.1,46.61 L601.6,46.59 L602.1,46.56 L602.6,46.53 L603.1,46.50 L603.6,46.45 L604.1,46.43 L604.6,46.39 L605.1,46.36 L605.6,46.31 L606.1,46.28 L606.6,46.23 L607.1,46.18 L607.6,46.14 L608.1,46.13 L608.6,46.08 L609.1,46.05 L609.6,46.03 L610.1,45.99 L610.6,45.97 L611.1,45.95 L611.6,45.92 L612.1,45.91 L612.6,45.91 L613.1,45.89 L613.6,45.89 L614.1,45.88 L614.6,45.91 L615.1,45.93 L615.6,45.95 L616.1,45.97 L616.6,45.99 L617.1,46.01 L617.6,46.04 L618.1,46.07 L618.6,46.09 L619.1,46.11 L619.6,46.14 L620.1,46.17 L620.6,46.19 L621.1,46.22 L621.6,46.24 L622.1,46.27 L622.6,46.29 L623.1,46.31 L623.6,46.33 L624.1,46.35 L624.6,46.36 L625.1,46.37 L625.6,46.38 L626.1,46.40 L626.6,46.40 L627.1,46.40 L627.6,46.41 L628.1,46.40 L628.6,46.39 L629.1,46.38 L629.6,46.36 L630.1,46.35 L630.6,46.33 L631.1,46.32 L631.6,46.30 L632.1,46.28 L632.6,46.27 L633.1,46.25 L633.6,46.24 L634.1,46.21 L634.6,46.20 L635.1,46.19 L635.6,46.17 L636.1,46.16 L636.6,46.15 L637.1,46.14 L637.6,46.13 L638.1,46.12 L638.6,46.11 L639.1,46.10 L639.6,46.10 L640.1,46.10 L640.6,46.09 L641.1,46.10 L641.6,46.09 L642.1,46.10 L642.6,46.11 L643.1,46.12 L643.6,46.13 L644.1,46.13 L644.6,46.14 L645.1,46.15 L645.6,46.16 L646.1,46.17 L646.6,46.17 L647.1,46.18 L647.6,46.19 L648.1,46.19 L648.6,46.20 L649.1,46.20 L649.6,46.21 L650.1,46.21 L650.6,46.21 L651.1,46.22 L651.6,46.22 L652.1,46.22 L652.6,46.21 L653.1,46.21 L653.6,46.21 L654.1,46.21 L654.6,46.21 L655.1,46.20 L655.6,46.20 L656.1,46.20 L656.6,46.20 L657.1,46.20 L657.6,46.20 L658.1,46.20 L658.6,46.20 L659.1,46.20 L659.6,46.20 L660.1,46.20 L660.6,46.20 L661.1,46.20 L661.6,46.20 L662.1,46.20 L662.6,46.20 L663.1,46.20 L663.6,46.20 L664.1,46.20 L664.6,46.20 L665.1,46.20 L665.6,46.20 L666.1,46.20 L666.6,46.20 L667.1,46.20 L667.6,46.20 L668.1,46.20 L668.6,46.20 L669.1,46.20 L669.6,46.20 L670.1,46.20 L670.6,46.20 L671.1,46.20 L671.6,46.20 L672.1,46.20 L672.6,46.20 L673.1,46.20 L673.6,46.20 L674.1,46.20 L674.6,46.20 L675.1,46.20 L675.6,46.20 L676.1,46.20 L676.6,46.20 L677.1,46.20 L677.6,46.20 L678.1,46.20 L678.6,46.20 L679.1,46.20 L679.6,46.20 L680.1,46.20 L680.6,46.20 L681.1,46.20 L681.6,46.20 L682.1,46.20 L682.6,46.20 L683.1,46.20 L683.6,46.20 L684.1,46.20 L684.6,46.20 L685.1,46.20 L685.6,46.20 L686.1,46.20 L686.6,46.20 L687.1,46.20 L687.6,46.20 L688.1,46.20 L688.6,46.20 L689.1,46.20 L689.6,46.20 L690.1,46.20 L690.6,46.20 L691.1,46.20 L691.6,46.20 L692.1,46.20 L692.6,46.20 L693.1,46.20 L693.6,46.20 L694.1,46.20 L694.6,46.20 L695.1,46.20 L695.6,46.20 L696.1,46.20 L696.6,46.20 L697.1,46.20 L697.6,46.20 L698.1,46.20 L698.6,46.20 L699.1,46.20 L699.6,46.20 L700.1,46.20 L700.6,46.20 L701.1,46.20 L701.6,46.20 L702.1,46.20 L702.6,46.20 L703.1,46.20 L703.6,46.20 L704.1,46.20 L704.6,46.20 L705.1,46.20 L705.6,46.20 L706.1,46.20 L706.6,46.20 L707.1,46.20 L707.6,46.20 L708.1,46.20 L708.6,46.20 L709.1,46.20 L709.6,46.20 L710.1,46.20 L710.6,46.20 L711.1,46.20 L711.6,46.20 L712.1,46.20 L712.6,46.20 L713.1,46.20 L713.6,46.20 L714.1,46.20 L714.6,46.20 L715.1,46.20 L715.6,46.20 L716.1,46.20 L716.6,46.20 L717.1,46.20 L717.6,46.20 L718.1,46.20 L718.6,46.20 L719.1,46.20 L719.6,46.20 L720.1,46.20 L720.6,46.20 L721.1,46.20 L721.6,46.20 L722.1,46.20 L722.6,46.20 L723.1,46.20 L723.6,46.20 L724.1,46.20 L724.6,46.20 L725.1,46.20 L725.6,46.20 L726.1,46.20 L726.6,46.20 L727.1,46.20 L727.6,46.20 L728.1,46.20 L728.6,46.20 L729.1,46.20 L729.6,46.20 L730.1,46.20 L730.6,46.20 L731.1,46.20 L731.6,46.20 L732.1,46.20 L732.6,46.20 L733.1,46.20 L733.6,46.20 L734.1,46.20 L734.6,46.20 L735.1,46.20 L735.6,46.20 L736.1,46.20 L736.6,46.20 L737.1,46.20 L737.6,46.20 L738.1,46.20 L738.6,46.20 L739.1,46.20 L739.6,46.20 L740.1,46.20 L740.6,46.20 L741.1,46.20 L741.6,46.20 L742.1,46.20 L742.6,46.20 L743.1,46.20 L743.6,46.20 L744.1,46.20 L744.6,46.20 L745.1,46.20 L745.6,46.20 L746.1,46.20 L746.6,46.20 L747.1,46.20 L747.6,46.20 L748.1,46.20 L748.6,46.20 L749.1,46.20 L749.6,46.20 L750.1,46.20 L750.6,46.20 L751.1,46.20 L751.6,46.20 L752.1,46.20 L752.6,46.20 L753.1,46.20 L753.6,46.20 L754.1,46.20 L754.6,46.20 L755.1,46.20 L755.6,46.20 L756.1,46.20 L756.6,46.20 L757.1,46.20 L757.6,46.20 L758.1,46.20 L758.6,46.20 L759.1,46.20 L759.6,46.20 L760.1,46.20 L760.6,46.20 L761.1,46.20 L761.6,46.20 L762.1,46.20 L762.6,46.20 L763.1,46.20 L763.6,46.20 L764.1,46.20 L764.6,46.20 L765.1,46.20 L765.6,46.20 L766.1,46.20 L766.6,46.20 L767.1,46.20 L767.6,46.20 L768.1,46.20 L768.6,46.20 L769.1,46.20 L769.6,46.20 L770.1,46.20 L770.6,46.20 L771.1,46.20 L771.6,46.20 L772.1,46.20 L772.6,46.20 L773.1,46.20 L773.6,46.20 L774.1,46.20 L774.6,46.20 L775.1,46.20 L775.6,46.20 L776.1,46.20 L776.6,46.20 L777.1,46.20 L777.6,46.20 L778.1,46.20 L778.6,46.20 L779.1,46.20 L779.6,46.20 L780.1,46.20 L780.6,46.20 L781.1,46.20 L781.6,46.20 L782.1,46.20 L782.6,46.20 L783.1,46.20 L783.6,46.20 L784.1,46.20 L784.6,46.20" fill="none" stroke="#62788a" stroke-width="1.0" stroke-linejoin="miter" stroke-miterlimit="4" stroke-linecap="round"/></g></svg>
<div style="left:425.20px;top:432.00px;width:1.20px;height:92.00px;background:#6ea8dc;"></div>
<div style="left:1211.00px;top:432.00px;width:1.20px;height:92.00px;background:#5b9ad6;"></div>
<div style="left:784.40px;top:440.00px;width:68.00px;height:19.00px;background:#8d9ba7;border-radius:2px;"></div>
<span class="t" style="top:443.00px;left:818.40px;transform:translateX(-50%) scaleX(0.927);font-size:8px;color:#eef1f3;">AMP ENVELOPE</span>
<div style="left:424.40px;top:524.20px;width:670.60px;height:17.80px;background:#4a4e4f;"></div>
<div style="left:1094.40px;top:524.20px;width:118.60px;height:17.80px;background:#656d71;border-radius:0px 0px 3px 0px;"></div>
<div style="left:1094.00px;top:524.20px;width:1.00px;height:17.80px;background:#f4f5f5;"></div>
<svg style="left:424px;top:524px;" width="672" height="19" viewBox="0 0 672 19"><g transform="translate(0.40,0.00)"><path d="M3.0,8.56 L3.5,10.21 L4.0,11.68 L4.5,12.92 L5.0,13.84 L5.5,14.43 L6.0,14.65 L6.5,14.52 L7.0,14.06 L7.5,13.32 L8.0,12.35 L8.5,11.22 L9.0,10.02 L9.5,8.80 L10.0,7.65 L10.5,6.64 L11.0,5.80 L11.5,5.20 L12.0,4.85 L12.5,4.76 L13.0,4.93 L13.5,5.34 L14.0,5.95 L14.5,6.72 L15.0,7.61 L15.5,8.54 L16.0,9.48 L16.5,10.35 L17.0,11.11 L17.5,11.73 L18.0,12.16 L18.5,12.39 L19.0,12.42 L19.5,12.24 L20.0,11.87 L20.5,11.34 L21.0,10.68 L21.5,9.94 L22.0,9.17 L22.5,8.40 L23.0,7.69 L23.5,7.07 L24.0,6.58 L24.5,6.24 L25.0,6.07 L25.5,6.08 L26.0,6.27 L26.5,6.61 L27.0,7.08 L27.5,7.66 L28.0,8.31 L28.5,8.99 L29.0,9.65 L29.5,10.27 L30.0,10.80 L30.5,11.21 L31.0,11.49 L31.5,11.62 L32.0,11.59 L32.5,11.42 L33.0,11.10 L33.5,10.66 L34.0,10.14 L34.5,9.55 L35.0,8.94 L35.5,8.34 L36.0,7.79 L36.5,7.32 L37.0,6.95 L37.5,6.70 L38.0,6.59 L38.5,6.63 L39.0,6.79 L39.5,7.09 L40.0,7.49 L40.5,7.98 L41.0,8.52 L41.5,9.08 L42.0,9.62 L42.5,10.13 L43.0,10.57 L43.5,10.91 L44.0,11.14 L44.5,11.24 L45.0,11.21 L45.5,11.06 L46.0,10.79 L46.5,10.42 L47.0,9.97 L47.5,9.47 L48.0,8.95 L48.5,8.44 L49.0,7.96 L49.5,7.55 L50.0,7.23 L50.5,7.00 L51.0,6.90 L51.5,6.91 L52.0,7.05 L52.5,7.29 L53.0,7.62 L53.5,8.04 L54.0,8.50 L54.5,8.99 L55.0,9.47 L55.5,9.92 L56.0,10.32 L56.5,10.63 L57.0,10.86 L57.5,10.98 L58.0,10.98 L58.5,10.88 L59.0,10.67 L59.5,10.36 L60.0,9.99 L60.5,9.56 L61.0,9.11 L61.5,8.65 L62.0,8.22 L62.5,7.83 L63.0,7.51 L63.5,7.28 L64.0,7.15 L64.5,7.12 L65.0,7.19 L65.5,7.36 L66.0,7.62 L66.5,7.96 L67.0,8.35 L67.5,8.78 L68.0,9.21 L68.5,9.62 L69.0,10.00 L69.5,10.32 L70.0,10.57 L70.5,10.73 L71.0,10.79 L71.5,10.75 L72.0,10.62 L72.5,10.40 L73.0,10.10 L73.5,9.75 L74.0,9.36 L74.5,8.95 L75.0,8.55 L75.5,8.18 L76.0,7.85 L76.5,7.59 L77.0,7.41 L77.5,7.32 L78.0,7.31 L78.5,7.40 L79.0,7.57 L79.5,7.82 L80.0,8.14 L80.5,8.49 L81.0,8.87 L81.5,9.25 L82.0,9.62 L82.5,9.95 L83.0,10.23 L83.5,10.44 L84.0,10.57 L84.5,10.61 L85.0,10.57 L85.5,10.45 L86.0,10.25 L86.5,9.98 L87.0,9.66 L87.5,9.32 L88.0,8.95 L88.5,8.60 L89.0,8.26 L89.5,7.97 L90.0,7.74 L90.5,7.57 L91.0,7.48 L91.5,7.48 L92.0,7.55 L92.5,7.70 L93.0,7.91 L93.5,8.18 L94.0,8.50 L94.5,8.83 L95.0,9.17 L95.5,9.50 L96.0,9.80 L96.5,10.06 L97.0,10.26 L97.5,10.39 L98.0,10.45 L98.5,10.43 L99.0,10.34 L99.5,10.18 L100.0,9.96 L100.5,9.69 L101.0,9.38 L101.5,9.06 L102.0,8.74 L102.5,8.44 L103.0,8.16 L103.5,7.94 L104.0,7.76 L104.5,7.66 L105.0,7.62 L105.5,7.66 L106.0,7.76 L106.5,7.93 L107.0,8.15 L107.5,8.41 L108.0,8.70 L108.5,9.00 L109.0,9.30 L109.5,9.59 L110.0,9.84 L110.5,10.04 L111.0,10.20 L111.5,10.28 L112.0,10.31 L112.5,10.26 L113.0,10.16 L113.5,9.99 L114.0,9.78 L114.5,9.53 L115.0,9.25 L115.5,8.96 L116.0,8.68 L116.5,8.42 L117.0,8.18 L117.5,7.99 L118.0,7.86 L118.5,7.78 L119.0,7.76 L119.5,7.81 L120.0,7.91 L120.5,8.07 L121.0,8.27 L121.5,8.51 L122.0,8.77 L122.5,9.04 L123.0,9.31 L123.5,9.56 L124.0,9.78 L124.5,9.96 L125.0,10.09 L125.5,10.16 L126.0,10.18 L126.5,10.13 L127.0,10.04 L127.5,9.89 L128.0,9.70 L128.5,9.47 L129.0,9.23 L129.5,8.97 L130.0,8.72 L130.5,8.49 L131.0,8.28 L131.5,8.11 L132.0,7.98 L132.5,7.90 L133.0,7.88 L133.5,7.92 L134.0,8.00 L134.5,8.14 L135.0,8.31 L135.5,8.52 L136.0,8.75 L136.5,8.99 L137.0,9.23 L137.5,9.45 L138.0,9.65 L138.5,9.82 L139.0,9.95 L139.5,10.03 L140.0,10.06 L140.5,10.04 L141.0,9.97 L141.5,9.85 L142.0,9.69 L142.5,9.50 L143.0,9.29 L143.5,9.06 L144.0,8.84 L144.5,8.62 L145.0,8.42 L145.5,8.26 L146.0,8.13 L146.5,8.04 L147.0,8.00 L147.5,8.01 L148.0,8.06 L148.5,8.16 L149.0,8.30 L149.5,8.47 L150.0,8.66 L150.5,8.87 L151.0,9.08 L151.5,9.29 L152.0,9.48 L152.5,9.65 L153.0,9.79 L153.5,9.89 L154.0,9.94 L154.5,9.95 L155.0,9.92 L155.5,9.84 L156.0,9.72 L156.5,9.57 L157.0,9.40 L157.5,9.21 L158.0,9.01 L158.5,8.81 L159.0,8.62 L159.5,8.45 L160.0,8.31 L160.5,8.20 L161.0,8.13 L161.5,8.10 L162.0,8.11 L162.5,8.16 L163.0,8.26 L163.5,8.38 L164.0,8.54 L164.5,8.71 L165.0,8.90 L165.5,9.09 L166.0,9.27 L166.5,9.44 L167.0,9.59 L167.5,9.71 L168.0,9.80 L168.5,9.84 L169.0,9.86 L169.5,9.83 L170.0,9.76 L170.5,9.66 L171.0,9.53 L171.5,9.37 L172.0,9.21 L172.5,9.03 L173.0,8.85 L173.5,8.68 L174.0,8.53 L174.5,8.40 L175.0,8.29 L175.5,8.23 L176.0,8.19 L176.5,8.19 L177.0,8.23 L177.5,8.31 L178.0,8.41 L178.5,8.54 L179.0,8.69 L179.5,8.86 L180.0,9.02 L180.5,9.19 L181.0,9.34 L181.5,9.48 L182.0,9.60 L182.5,9.69 L183.0,9.75 L183.5,9.77 L184.0,9.76 L184.5,9.71 L185.0,9.64 L185.5,9.53 L186.0,9.40 L186.5,9.26 L187.0,9.10 L187.5,8.95 L188.0,8.79 L188.5,8.65 L189.0,8.52 L189.5,8.41 L190.0,8.34 L190.5,8.29 L191.0,8.27 L191.5,8.29 L192.0,8.33 L192.5,8.41 L193.0,8.51 L193.5,8.63 L194.0,8.77 L194.5,8.92 L195.0,9.07 L195.5,9.21 L196.0,9.35 L196.5,9.46 L197.0,9.56 L197.5,9.63 L198.0,9.68 L198.5,9.69 L199.0,9.67 L199.5,9.63 L200.0,9.56 L200.5,9.46 L201.0,9.34 L201.5,9.22 L202.0,9.08 L202.5,8.94 L203.0,8.80 L203.5,8.67 L204.0,8.56 L204.5,8.47 L205.0,8.40 L205.5,8.36 L206.0,8.35 L206.5,8.36 L207.0,8.40 L207.5,8.47 L208.0,8.56 L208.5,8.66 L209.0,8.79 L209.5,8.91 L210.0,9.05 L210.5,9.18 L211.0,9.30 L211.5,9.40 L212.0,9.49 L212.5,9.56 L213.0,9.60 L213.5,9.62 L214.0,9.61 L214.5,9.57 L215.0,9.52 L215.5,9.44 L216.0,9.34 L216.5,9.22 L217.0,9.10 L217.5,8.98 L218.0,8.86 L218.5,8.74 L219.0,8.64 L219.5,8.55 L220.0,8.48 L220.5,8.44 L221.0,8.42 L221.5,8.42 L222.0,8.44 L222.5,8.49 L223.0,8.57 L223.5,8.65 L224.0,8.76 L224.5,8.87 L225.0,8.98 L225.5,9.10 L226.0,9.21 L226.5,9.31 L227.0,9.40 L227.5,9.47 L228.0,9.52 L228.5,9.55 L229.0,9.55 L229.5,9.54 L230.0,9.50 L230.5,9.44 L231.0,9.36 L231.5,9.27 L232.0,9.17 L232.5,9.06 L233.0,8.95 L233.5,8.84 L234.0,8.74 L234.5,8.65 L235.0,8.58 L235.5,8.53 L236.0,8.49 L236.5,8.47 L237.0,8.48 L237.5,8.51 L238.0,8.56 L238.5,8.62 L239.0,8.70 L239.5,8.79 L240.0,8.89 L240.5,9.00 L241.0,9.10 L241.5,9.20 L242.0,9.29 L242.5,9.36 L243.0,9.42 L243.5,9.47 L244.0,9.49 L244.5,9.50 L245.0,9.48 L245.5,9.45 L246.0,9.40 L246.5,9.33 L247.0,9.25 L247.5,9.16 L248.0,9.06 L248.5,8.97 L249.0,8.87 L249.5,8.78 L250.0,8.70 L250.5,8.63 L251.0,8.58 L251.5,8.55 L252.0,8.53 L252.5,8.53 L253.0,8.55 L253.5,8.59 L254.0,8.64 L254.5,8.71 L255.0,8.79 L255.5,8.88 L256.0,8.97 L256.5,9.06 L257.0,9.15 L257.5,9.23 L258.0,9.30 L258.5,9.36 L259.0,9.41 L259.5,9.43 L260.0,9.45 L260.5,9.44 L261.0,9.42 L261.5,9.38 L262.0,9.32 L262.5,9.26 L263.0,9.18 L263.5,9.10 L264.0,9.01 L264.5,8.93 L265.0,8.85 L265.5,8.77 L266.0,8.71 L266.5,8.65 L267.0,8.61 L267.5,8.59 L268.0,8.58 L268.5,8.58 L269.0,8.61 L269.5,8.65 L270.0,8.70 L270.5,8.76 L271.0,8.83 L271.5,8.91 L272.0,8.99 L272.5,9.07 L273.0,9.15 L273.5,9.22 L274.0,9.28 L274.5,9.33 L275.0,9.37 L275.5,9.39 L276.0,9.40 L276.5,9.39 L277.0,9.37 L277.5,9.33 L278.0,9.28 L278.5,9.23 L279.0,9.16 L279.5,9.09 L280.0,9.01 L280.5,8.93 L281.0,8.86 L281.5,8.79 L282.0,8.74 L282.5,8.69 L283.0,8.65 L283.5,8.63 L284.0,8.62 L284.5,8.63 L285.0,8.65 L285.5,8.68 L286.0,8.72 L286.5,8.78 L287.0,8.84 L287.5,8.91 L288.0,8.98 L288.5,9.05 L289.0,9.12 L289.5,9.18 L290.0,9.24 L290.5,9.29 L291.0,9.32 L291.5,9.35 L292.0,9.36 L292.5,9.36 L293.0,9.34 L293.5,9.31 L294.0,9.27 L294.5,9.22 L295.0,9.16 L295.5,9.10 L296.0,9.03 L296.5,8.97 L297.0,8.90 L297.5,8.84 L298.0,8.79 L298.5,8.74 L299.0,8.70 L299.5,8.68 L300.0,8.66 L300.5,8.66 L301.0,8.67 L301.5,8.70 L302.0,8.73 L302.5,8.77 L303.0,8.83 L303.5,8.88 L304.0,8.94 L304.5,9.01 L305.0,9.07 L305.5,9.13 L306.0,9.18 L306.5,9.23 L307.0,9.27 L307.5,9.30 L308.0,9.32 L308.5,9.32 L309.0,9.32 L309.5,9.30 L310.0,9.27 L310.5,9.23 L311.0,9.19 L311.5,9.14 L312.0,9.08 L312.5,9.02 L313.0,8.96 L313.5,8.90 L314.0,8.85 L314.5,8.80 L315.0,8.76 L315.5,8.73 L316.0,8.71 L316.5,8.70 L317.0,8.70 L317.5,8.71 L318.0,8.73 L318.5,8.76 L319.0,8.80 L319.5,8.84 L320.0,8.89 L320.5,8.95 L321.0,9.00 L321.5,9.06 L322.0,9.11 L322.5,9.16 L323.0,9.20 L323.5,9.24 L324.0,9.26 L324.5,9.28 L325.0,9.29 L325.5,9.28 L326.0,9.27 L326.5,9.25 L327.0,9.22 L327.5,9.18 L328.0,9.13 L328.5,9.09 L329.0,9.03 L329.5,8.98 L330.0,8.93 L330.5,8.88 L331.0,8.84 L331.5,8.80 L332.0,8.77 L332.5,8.75 L333.0,8.73 L333.5,8.73 L334.0,8.73 L334.5,8.75 L335.0,8.77 L335.5,8.80 L336.0,8.84 L336.5,8.88 L337.0,8.93 L337.5,8.98 L338.0,9.03 L338.5,9.07 L339.0,9.12 L339.5,9.16 L340.0,9.19 L340.5,9.22 L341.0,9.24 L341.5,9.25 L342.0,9.26 L342.5,9.25 L343.0,9.24 L343.5,9.22 L344.0,9.19 L344.5,9.15 L345.0,9.11 L345.5,9.07 L346.0,9.02 L346.5,8.97 L347.0,8.93 L347.5,8.89 L348.0,8.85 L348.5,8.81 L349.0,8.79 L349.5,8.77 L350.0,8.76 L350.5,8.76 L351.0,8.76 L351.5,8.77 L352.0,8.80 L352.5,8.82 L353.0,8.86 L353.5,8.89 L354.0,8.94 L354.5,8.98 L355.0,9.02 L355.5,9.07 L356.0,9.11 L356.5,9.14 L357.0,9.17 L357.5,9.20 L358.0,9.22 L358.5,9.23 L359.0,9.23 L359.5,9.23 L360.0,9.22 L360.5,9.20 L361.0,9.17 L361.5,9.14 L362.0,9.11 L362.5,9.07 L363.0,9.03 L363.5,8.99 L364.0,8.95 L364.5,8.91 L365.0,8.87 L365.5,8.84 L366.0,8.82 L366.5,8.80 L367.0,8.79 L367.5,8.78 L368.0,8.78 L368.5,8.79 L369.0,8.81 L369.5,8.83 L370.0,8.86 L370.5,8.89 L371.0,8.93 L371.5,8.96 L372.0,9.00 L372.5,9.04 L373.0,9.08 L373.5,9.11 L374.0,9.14 L374.5,9.17 L375.0,9.19 L375.5,9.20 L376.0,9.21 L376.5,9.21 L377.0,9.20 L377.5,9.19 L378.0,9.17 L378.5,9.14 L379.0,9.12 L379.5,9.08 L380.0,9.05 L380.5,9.01 L381.0,8.98 L381.5,8.94 L382.0,8.91 L382.5,8.88 L383.0,8.85 L383.5,8.83 L384.0,8.82 L384.5,8.81 L385.0,8.80 L385.5,8.81 L386.0,8.82 L386.5,8.83 L387.0,8.85 L387.5,8.88 L388.0,8.90 L388.5,8.94 L389.0,8.97 L389.5,9.00 L390.0,9.04 L390.5,9.07 L391.0,9.10 L391.5,9.13 L392.0,9.15 L392.5,9.17 L393.0,9.18 L393.5,9.18 L394.0,9.19 L394.5,9.18 L395.0,9.17 L395.5,9.15 L396.0,9.13 L396.5,9.11 L397.0,9.08 L397.5,9.05 L398.0,9.02 L398.5,8.99 L399.0,8.96 L399.5,8.93 L400.0,8.90 L400.5,8.87 L401.0,8.85 L401.5,8.84 L402.0,8.83 L402.5,8.82 L403.0,8.83 L403.5,8.83 L404.0,8.84 L404.5,8.86 L405.0,8.88 L405.5,8.90 L406.0,8.93 L406.5,8.96 L407.0,8.99 L407.5,9.02 L408.0,9.05 L408.5,9.07 L409.0,9.10 L409.5,9.12 L410.0,9.14 L410.5,9.15 L411.0,9.16 L411.5,9.17 L412.0,9.17 L412.5,9.16 L413.0,9.15 L413.5,9.13 L414.0,9.11 L414.5,9.09 L415.0,9.06 L415.5,9.04 L416.0,9.01 L416.5,8.98 L417.0,8.95 L417.5,8.93 L418.0,8.90 L418.5,8.88 L419.0,8.87 L419.5,8.85 L420.0,8.85 L420.5,8.84 L421.0,8.84 L421.5,8.85 L422.0,8.86 L422.5,8.87 L423.0,8.89 L423.5,8.91 L424.0,8.94 L424.5,8.96 L425.0,8.99 L425.5,9.02 L426.0,9.04 L426.5,9.07 L427.0,9.09 L427.5,9.11 L428.0,9.12 L428.5,9.14 L429.0,9.15 L429.5,9.15 L430.0,9.15 L430.5,9.14 L431.0,9.13 L431.5,9.12 L432.0,9.10 L432.5,9.09 L433.0,9.06 L433.5,9.04 L434.0,9.01 L434.5,8.99 L435.0,8.96 L435.5,8.94 L436.0,8.92 L436.5,8.90 L437.0,8.88 L437.5,8.87 L438.0,8.86 L438.5,8.86 L439.0,8.86 L439.5,8.86 L440.0,8.87 L440.5,8.88 L441.0,8.90 L441.5,8.91 L442.0,8.93 L442.5,8.96 L443.0,8.98 L443.5,9.00 L444.0,9.03 L444.5,9.05 L445.0,9.07 L445.5,9.09 L446.0,9.10 L446.5,9.12 L447.0,9.13 L447.5,9.13 L448.0,9.13 L448.5,9.13 L449.0,9.13 L449.5,9.12 L450.0,9.10 L450.5,9.09 L451.0,9.07 L451.5,9.05 L452.0,9.03 L452.5,9.01 L453.0,8.99 L453.5,8.96 L454.0,8.94 L454.5,8.93 L455.0,8.91 L455.5,8.89 L456.0,8.88 L456.5,8.88 L457.0,8.87 L457.5,8.87 L458.0,8.88 L458.5,8.88 L459.0,8.89 L459.5,8.91 L460.0,8.92 L460.5,8.94 L461.0,8.96 L461.5,8.98 L462.0,9.00 L462.5,9.02 L463.0,9.04 L463.5,9.06 L464.0,9.08 L464.5,9.09 L465.0,9.10 L465.5,9.11 L466.0,9.12 L466.5,9.12 L467.0,9.12 L467.5,9.12 L468.0,9.11 L468.5,9.10 L469.0,9.08 L469.5,9.07 L470.0,9.05 L470.5,9.03 L471.0,9.01 L471.5,8.99 L472.0,8.97 L472.5,8.96 L473.0,8.94 L473.5,8.92 L474.0,8.91 L474.5,8.90 L475.0,8.89 L475.5,8.89 L476.0,8.89 L476.5,8.89 L477.0,8.89 L477.5,8.90 L478.0,8.91 L478.5,8.92 L479.0,8.94 L479.5,8.95 L480.0,8.97 L480.5,8.99 L481.0,9.01 L481.5,9.03 L482.0,9.04 L482.5,9.06 L483.0,9.07 L483.5,9.09 L484.0,9.10 L484.5,9.10 L485.0,9.11 L485.5,9.11 L486.0,9.11 L486.5,9.10 L487.0,9.09 L487.5,9.08 L488.0,9.07 L488.5,9.06 L489.0,9.04 L489.5,9.03 L490.0,9.01 L490.5,8.99 L491.0,8.98 L491.5,8.96 L492.0,8.94 L492.5,8.93 L493.0,8.92 L493.5,8.91 L494.0,8.90 L494.5,8.90 L495.0,8.90 L495.5,8.90 L496.0,8.90 L496.5,8.91 L497.0,8.92 L497.5,8.93 L498.0,8.94 L498.5,8.96 L499.0,8.97 L499.5,8.99 L500.0,9.01 L500.5,9.02 L501.0,9.04 L501.5,9.05 L502.0,9.06 L502.5,9.08 L503.0,9.08 L503.5,9.09 L504.0,9.10 L504.5,9.10 L505.0,9.10 L505.5,9.09 L506.0,9.09 L506.5,9.08 L507.0,9.07 L507.5,9.06 L508.0,9.04 L508.5,9.03 L509.0,9.02 L509.5,9.00 L510.0,8.98 L510.5,8.97 L511.0,8.96 L511.5,8.94 L512.0,8.93 L512.5,8.92 L513.0,8.92 L513.5,8.91 L514.0,8.91 L514.5,8.91 L515.0,8.91 L515.5,8.91 L516.0,8.92 L516.5,8.93 L517.0,8.94 L517.5,8.95 L518.0,8.97 L518.5,8.98 L519.0,8.99 L519.5,9.01 L520.0,9.02 L520.5,9.04 L521.0,9.05 L521.5,9.06 L522.0,9.07 L522.5,9.08 L523.0,9.08 L523.5,9.09 L524.0,9.09 L524.5,9.09 L525.0,9.08 L525.5,9.08 L526.0,9.07 L526.5,9.06 L527.0,9.05 L527.5,9.04 L528.0,9.03 L528.5,9.01 L529.0,9.00 L529.5,8.99 L530.0,8.97 L530.5,8.96 L531.0,8.95 L531.5,8.94 L532.0,8.93 L532.5,8.92 L533.0,8.92 L533.5,8.92 L534.0,8.92 L534.5,8.92 L535.0,8.92 L535.5,8.93 L536.0,8.93 L536.5,8.94 L537.0,8.95 L537.5,8.97 L538.0,8.98 L538.5,8.99 L539.0,9.00 L539.5,9.02 L540.0,9.03 L540.5,9.04 L541.0,9.05 L541.5,9.06 L542.0,9.07 L542.5,9.07 L543.0,9.08 L543.5,9.08 L544.0,9.08 L544.5,9.08 L545.0,9.07 L545.5,9.07 L546.0,9.06 L546.5,9.05 L547.0,9.04 L547.5,9.03 L548.0,9.02 L548.5,9.01 L549.0,9.00 L549.5,8.98 L550.0,8.97 L550.5,8.96 L551.0,8.95 L551.5,8.94 L552.0,8.94 L552.5,8.93 L553.0,8.93 L553.5,8.93 L554.0,8.93 L554.5,8.93 L555.0,8.93 L555.5,8.94 L556.0,8.94 L556.5,8.95 L557.0,8.96 L557.5,8.97 L558.0,8.98 L558.5,8.99 L559.0,9.00 L559.5,9.02 L560.0,9.03 L560.5,9.04 L561.0,9.05 L561.5,9.05 L562.0,9.06 L562.5,9.07 L563.0,9.07 L563.5,9.07 L564.0,9.07 L564.5,9.07 L565.0,9.07 L565.5,9.06 L566.0,9.06 L566.5,9.05 L567.0,9.04 L567.5,9.03 L568.0,9.02 L568.5,9.01 L569.0,9.00 L569.5,8.99 L570.0,8.98 L570.5,8.97 L571.0,8.96 L571.5,8.95 L572.0,8.94 L572.5,8.94 L573.0,8.94 L573.5,8.93 L574.0,8.93 L574.5,8.93 L575.0,8.94 L575.5,8.94 L576.0,8.95 L576.5,8.95 L577.0,8.96 L577.5,8.97 L578.0,8.98 L578.5,8.99 L579.0,9.00 L579.5,9.01 L580.0,9.02 L580.5,9.03 L581.0,9.04 L581.5,9.04 L582.0,9.05 L582.5,9.06 L583.0,9.06 L583.5,9.06 L584.0,9.06 L584.5,9.06 L585.0,9.06 L585.5,9.06 L586.0,9.05 L586.5,9.05 L587.0,9.04 L587.5,9.03 L588.0,9.02 L588.5,9.02 L589.0,9.01 L589.5,9.00 L590.0,8.99 L590.5,8.98 L591.0,8.97 L591.5,8.96 L592.0,8.95 L592.5,8.95 L593.0,8.94 L593.5,8.94 L594.0,8.94 L594.5,8.94 L595.0,8.94 L595.5,8.94 L596.0,8.95 L596.5,8.95 L597.0,8.96 L597.5,8.96 L598.0,8.97 L598.5,8.98 L599.0,8.99 L599.5,9.00 L600.0,9.01 L600.5,9.02 L601.0,9.02 L601.5,9.03 L602.0,9.04 L602.5,9.04 L603.0,9.05 L603.5,9.05 L604.0,9.06 L604.5,9.06 L605.0,9.06 L605.5,9.06 L606.0,9.05 L606.5,9.05 L607.0,9.05 L607.5,9.04 L608.0,9.03 L608.5,9.03 L609.0,9.02 L609.5,9.01 L610.0,9.00 L610.5,8.99 L611.0,8.98 L611.5,8.98 L612.0,8.97 L612.5,8.96 L613.0,8.96 L613.5,8.95 L614.0,8.95 L614.5,8.95 L615.0,8.94 L615.5,8.94 L616.0,8.95 L616.5,8.95 L617.0,8.95 L617.5,8.96 L618.0,8.96 L618.5,8.97 L619.0,8.98 L619.5,8.98 L620.0,8.99 L620.5,9.00 L621.0,9.01 L621.5,9.02 L622.0,9.02 L622.5,9.03 L623.0,9.04 L623.5,9.04 L624.0,9.05 L624.5,9.05 L625.0,9.05 L625.5,9.05 L626.0,9.05 L626.5,9.05 L627.0,9.05 L627.5,9.05 L628.0,9.04 L628.5,9.04 L629.0,9.03 L629.5,9.02 L630.0,9.02 L630.5,9.01 L631.0,9.00 L631.5,8.99 L632.0,8.99 L632.5,8.98 L633.0,8.97 L633.5,8.97 L634.0,8.96 L634.5,8.96 L635.0,8.95 L635.5,8.95 L636.0,8.95 L636.5,8.95 L637.0,8.95 L637.5,8.95 L638.0,8.96 L638.5,8.96 L639.0,8.96 L639.5,8.97 L640.0,8.98 L640.5,8.98 L641.0,8.99 L641.5,9.00 L642.0,9.00 L642.5,9.01 L643.0,9.02 L643.5,9.02 L644.0,9.03 L644.5,9.03 L645.0,9.04 L645.5,9.04 L646.0,9.05 L646.5,9.05 L647.0,9.05 L647.5,9.05 L648.0,9.05 L648.5,9.04 L649.0,9.04 L649.5,9.04 L650.0,9.03 L650.5,9.03 L651.0,9.02 L651.5,9.01 L652.0,9.01 L652.5,9.00 L653.0,8.99 L653.5,8.99 L654.0,8.98 L654.5,8.97 L655.0,8.97 L655.5,8.96 L656.0,8.96 L656.5,8.96 L657.0,8.96 L657.5,8.96 L658.0,8.95 L658.5,8.96 L659.0,8.96 L659.5,8.96 L660.0,8.96 L660.5,8.97 L661.0,8.97 L661.5,8.98 L662.0,8.98 L662.5,8.99 L663.0,9.00 L663.5,9.00 L664.0,9.01 L664.5,9.01 L665.0,9.02 L665.5,9.03 L666.0,9.03 L666.5,9.03 L667.0,9.04 L667.5,9.04 L668.0,9.04 L668.5,9.04" fill="none" stroke="#eef0f1" stroke-width="1.1"/></g></svg>
<svg style="left:424px;top:405px;" width="790" height="138" viewBox="0 0 790 138"><g transform="translate(0.40,0.00)"><circle cx="2.50" cy="18.90" r="4.0" fill="#0a0c0d" stroke="#ffffff" stroke-width="2.0"/><circle cx="2.20" cy="30.50" r="3.6" fill="#0a0c0d" stroke="#ffffff" stroke-width="1.6"/><circle cx="2.00" cy="128.00" r="3.4" fill="#0a0c0d" stroke="#ffffff" stroke-width="1.5"/><circle cx="785.60" cy="18.80" r="4.0" fill="#0a0c0d" stroke="#ffffff" stroke-width="2.0"/><circle cx="786.60" cy="30.60" r="3.6" fill="#0a0c0d" stroke="#ffffff" stroke-width="1.6"/><circle cx="786.60" cy="114.60" r="3.6" fill="#0a0c0d" stroke="#ffffff" stroke-width="1.6"/><circle cx="394.20" cy="30.60" r="3.2" fill="#0a0c0d" stroke="#ffffff" stroke-width="1.4"/><circle cx="669.20" cy="128.00" r="3.4" fill="#0a0c0d" stroke="#ffffff" stroke-width="1.5"/></g></svg>
<span class="t" style="top:526.00px;left:1100.80px;transform-origin:0 50%;transform:scaleX(0.976);font-size:10.5px;color:#8ccbfa;font-weight:bold;">A</span>
<span class="t" style="top:526.00px;left:1115.20px;transform-origin:0 50%;transform:scaleX(0.873);font-size:10.5px;color:#d9dcde;font-weight:bold;">F</span>
<svg style="left:1128px;top:528px;" width="13" height="10" viewBox="0 0 13 10"><g transform="translate(0.00,0.50)"><path d="M0.6,4.5 H3 M9,4.5 H11.4 M4,1.6 V7.4 M8,1.6 V7.4 M4,4.5 H8" stroke="#c3c7c9" stroke-width="0.9" fill="none"/></g></svg>
<svg style="left:1142px;top:528px;" width="13" height="10" viewBox="0 0 13 10"><g transform="translate(0.60,0.50)"><path d="M0.8,1.4 V7.6 M11.2,1.4 V7.6" stroke="#8ccbfa" stroke-width="1.1"/><polygon points="1.4,4.5 5.6,1.8 5.6,7.2" fill="#8ccbfa"/><polygon points="10.6,4.5 6.4,1.8 6.4,7.2" fill="#8ccbfa"/></g></svg>
<svg style="left:1157px;top:528px;" width="12" height="10" viewBox="0 0 12 10"><g transform="translate(0.00,0.50)"><path d="M0.8,1.2 V7.8 M1.6,4.5 H10.4" stroke="#c3c7c9" stroke-width="1" fill="none"/><polygon points="1.4,4.5 5,2 5,7" fill="#c3c7c9"/></g></svg>
<svg style="left:1172px;top:528px;" width="12" height="10" viewBox="0 0 12 10"><g transform="translate(0.00,0.50)"><path d="M10.2,1.2 V7.8 M0.6,4.5 H9.4" stroke="#c3c7c9" stroke-width="1" fill="none"/><polygon points="9.6,4.5 6,2 6,7" fill="#c3c7c9"/></g></svg>
<div style="left:1189.00px;top:532.20px;width:6.40px;height:1.60px;background:#c3c7c9;"></div>
<div style="left:1201.40px;top:532.20px;width:7.00px;height:1.60px;background:#e3e6e8;"></div>
<div style="left:1204.10px;top:529.40px;width:1.60px;height:7.20px;background:#e3e6e8;"></div>
<div style="left:424.00px;top:545.20px;width:79.80px;height:16.50px;background:#b9bbbc;"></div>
<span class="t" style="top:547.00px;left:463.90px;transform:translateX(-50%) scaleX(1.008);font-size:10px;color:#33383a;">SETUP</span>
<div style="left:504.00px;top:561.70px;width:1.00px;height:120.80px;background:#dfe2e4;"></div>
<div style="left:509.80px;top:545.20px;width:45.20px;height:16.50px;background:#b9bbbc;"></div>
<span class="t" style="top:547.00px;left:532.40px;transform:translateX(-50%) scaleX(1.046);font-size:10px;color:#33383a;">MIX</span>
<div style="left:555.20px;top:561.70px;width:1.00px;height:120.80px;background:#dfe2e4;"></div>
<div style="left:561.00px;top:545.20px;width:83.30px;height:16.50px;background:#b9bbbc;"></div>
<span class="t" style="top:547.00px;left:602.65px;transform:translateX(-50%) scaleX(0.976);font-size:10px;color:#33383a;">TUNING</span>
<div style="left:644.50px;top:561.70px;width:1.00px;height:120.80px;background:#dfe2e4;"></div>
<div style="left:650.00px;top:545.20px;width:96.00px;height:16.50px;background:#b9bbbc;"></div>
<span class="t" style="top:547.00px;left:698.00px;transform:translateX(-50%) scaleX(0.908);font-size:10px;color:#33383a;">FILTER</span>
<div style="left:746.20px;top:561.70px;width:1.00px;height:120.80px;background:#dfe2e4;"></div>
<div style="left:752.00px;top:545.20px;width:49.70px;height:16.50px;background:#b9bbbc;"></div>
<span class="t" style="top:547.00px;left:776.85px;transform:translateX(-50%) scaleX(0.967);font-size:10px;color:#33383a;">PLAY</span>
<div style="left:801.90px;top:561.70px;width:1.00px;height:120.80px;background:#dfe2e4;"></div>
<div style="left:807.20px;top:545.20px;width:95.80px;height:16.50px;background:#b9bbbc;"></div>
<span class="t" style="top:547.00px;left:855.10px;transform:translateX(-50%) scaleX(0.935);font-size:10px;color:#33383a;">LOOPING</span>
<div style="left:903.20px;top:561.70px;width:1.00px;height:120.80px;background:#dfe2e4;"></div>
<div style="left:909.00px;top:545.20px;width:41.50px;height:16.50px;background:#b9bbbc;"></div>
<span class="t" style="top:547.00px;left:929.75px;transform:translateX(-50%) scaleX(0.861);font-size:10px;color:#33383a;">TS</span>
<div style="left:950.70px;top:561.70px;width:1.00px;height:120.80px;background:#dfe2e4;"></div>
<div style="left:956.20px;top:545.20px;width:125.40px;height:16.50px;background:#b9bbbc;"></div>
<span class="t" style="top:547.00px;left:1018.90px;transform:translateX(-50%) scaleX(0.895);font-size:10px;color:#33383a;">AMP ENVELOPE</span>
<div style="left:1081.80px;top:561.70px;width:1.00px;height:120.80px;background:#dfe2e4;"></div>
<div style="left:1087.50px;top:545.20px;width:125.70px;height:16.50px;background:#b9bbbc;"></div>
<span class="t" style="top:547.00px;left:1150.35px;transform:translateX(-50%) scaleX(0.878);font-size:10px;color:#33383a;">FREE ENVELOPE</span>
<div style="left:1213.40px;top:561.70px;width:1.00px;height:120.80px;background:#dfe2e4;"></div>
<div style="left:424.00px;top:567.00px;width:76.20px;height:16.30px;background:#b9bbbc;border-radius:2.5px;"></div>
<span class="t" style="top:569.00px;left:425.80px;transform-origin:0 50%;transform:scaleX(0.996);font-size:10px;color:#33383a;">One shot</span>
<svg style="left:488px;top:572px;" width="8" height="7" viewBox="0 0 8 7"><g transform="translate(0.20,0.15)"><polygon points="0,0 6.8,0 3.4,6.4" fill="#272d2e"/></g></svg>
<span class="t" style="top:584.00px;left:461.00px;transform:translateX(-50%) scaleX(0.876);font-size:9px;color:#858b8e;">Playback</span>
<div style="left:424.00px;top:601.70px;width:76.20px;height:16.10px;background:#b9bbbc;border-radius:2.5px;"></div>
<span class="t" style="top:603.00px;left:425.80px;transform-origin:0 50%;transform:scaleX(0.952);font-size:10px;color:#33383a;">Self</span>
<svg style="left:488px;top:606px;" width="8" height="8" viewBox="0 0 8 8"><g transform="translate(0.20,0.75)"><polygon points="0,0 6.8,0 3.4,6.4" fill="#272d2e"/></g></svg>
<span class="t" style="top:618.00px;left:461.40px;transform:translateX(-50%) scaleX(0.899);font-size:9px;color:#858b8e;">Choke</span>
<div style="left:424.00px;top:636.20px;width:76.20px;height:16.20px;background:#b9bbbc;border-radius:2.5px;"></div>
<span class="t" style="top:638.00px;left:462.10px;transform:translateX(-50%) scaleX(0.959);font-size:10px;color:#33383a;">Track Pitch</span>
<span class="t" style="top:652.00px;left:461.40px;transform:translateX(-50%) scaleX(0.888);font-size:9px;color:#858b8e;">Env Mode</span>
<svg style="left:514px;top:564px;" width="35" height="35" viewBox="0 0 35 35"><g transform="translate(0.00,0.40)"><path d="M10.90,30.70 A15.00,15.00 0 1 1 23.10,30.70 L21.90,28.01 A12.05,12.05 0 1 0 12.10,28.01 Z" fill="#d6d9db"/><path d="M11.30,27.73 A12.15,12.15 0 1 1 22.70,27.73 L19.54,21.77 A5.40,5.40 0 1 0 14.46,21.77 Z" fill="#858c91"/><path d="M11.30,27.73 A12.15,12.15 0 1 1 29.06,18.48 L22.36,17.66 A5.40,5.40 0 1 0 14.46,21.77 Z" fill="#4a4e4f"/><circle cx="25.56" cy="18.05" r="2.03" fill="#1b2021" stroke="#f4f5f5" stroke-width="0.90"/><rect x="8.53" y="28.40" width="2.4" height="2.4" fill="#1f4a6b" transform="rotate(30 9.73 29.60)"/></g></svg>
<span class="t" style="top:595.00px;left:530.60px;transform:translateX(-50%) scaleX(0.873);font-size:9px;color:#858b8e;">Gain</span>
<svg style="left:514px;top:606px;" width="35" height="35" viewBox="0 0 35 35"><g transform="translate(0.00,0.60)"><path d="M10.90,30.70 A15.00,15.00 0 1 1 23.10,30.70 L21.90,28.01 A12.05,12.05 0 1 0 12.10,28.01 Z" fill="#d6d9db"/><path d="M11.30,27.73 A12.15,12.15 0 1 1 22.70,27.73 L19.54,21.77 A5.40,5.40 0 1 0 14.46,21.77 Z" fill="#858c91"/><circle cx="17.00" cy="8.38" r="2.03" fill="#1b2021" stroke="#f4f5f5" stroke-width="0.90"/><rect x="8.53" y="28.40" width="2.4" height="2.4" fill="#1f4a6b" transform="rotate(30 9.73 29.60)"/></g></svg>
<span class="t" style="top:637.00px;left:530.20px;transform:translateX(-50%) scaleX(0.849);font-size:9px;color:#858b8e;">Pan</span>
<div style="left:512.00px;top:652.90px;width:39.00px;height:16.10px;background:#b9bbbc;border-radius:2.5px;"></div>
<span class="t" style="top:654.00px;left:531.50px;transform:translateX(-50%) scaleX(0.990);font-size:10px;color:#33383a;">Vintage</span>
<div style="left:512.00px;top:671.40px;width:18.40px;height:16.20px;background:#b9bbbc;border-radius:2.5px;"></div>
<div style="left:532.40px;top:671.40px;width:18.60px;height:16.20px;background:#b9bbbc;border-radius:2.5px;"></div>
<svg style="left:515px;top:673px;" width="13" height="13" viewBox="0 0 13 13"><g transform="translate(0.40,0.70)"><circle cx="6" cy="6" r="4.4" fill="none" stroke="#272d2e" stroke-width="1.1"/><polygon points="3.6,6 7.4,4 7.4,8" fill="#272d2e"/></g></svg>
<svg style="left:535px;top:673px;" width="13" height="13" viewBox="0 0 13 13"><g transform="translate(0.80,0.70)"><circle cx="6" cy="6" r="4" fill="none" stroke="#272d2e" stroke-width="1.1"/><line x1="2.4" y1="10.6" x2="9.6" y2="1.4" stroke="#272d2e" stroke-width="1.1"/></g></svg>
<svg style="left:561px;top:562px;" width="85" height="126" viewBox="0 0 85 126"><line x1="31.6" y1="50" x2="20.8" y2="88.5" stroke="#c6c9cb" stroke-width="1.3"/><line x1="53" y1="50" x2="63.6" y2="88.5" stroke="#c6c9cb" stroke-width="1.3"/></svg>
<svg style="left:576px;top:564px;" width="55" height="55" viewBox="0 0 55 55"><g transform="translate(0.00,0.40)"><path d="M16.83,49.84 A25.00,25.00 0 1 1 37.17,49.84 L35.11,45.23 A19.95,19.95 0 1 0 18.89,45.23 Z" fill="#d6d9db"/><path d="M17.59,44.70 A20.05,20.05 0 1 1 36.41,44.70 L31.23,34.95 A9.00,9.00 0 1 0 22.77,34.95 Z" fill="#858c91"/><circle cx="27.00" cy="12.63" r="3.38" fill="#1b2021" stroke="#f4f5f5" stroke-width="1.38"/><rect x="13.68" y="46.80" width="2.4" height="2.4" fill="#1f4a6b" transform="rotate(30 14.88 48.00)"/></g></svg>
<span class="t" style="top:618.00px;left:603.00px;transform:translateX(-50%) scaleX(0.981);font-size:10px;color:#33383a;">Tune</span>
<svg style="left:564px;top:648px;" width="35" height="35" viewBox="0 0 35 35"><g transform="translate(0.00,0.20)"><path d="M10.90,30.70 A15.00,15.00 0 1 1 23.10,30.70 L21.90,28.01 A12.05,12.05 0 1 0 12.10,28.01 Z" fill="#d6d9db"/><path d="M11.30,27.73 A12.15,12.15 0 1 1 22.70,27.73 L19.54,21.77 A5.40,5.40 0 1 0 14.46,21.77 Z" fill="#858c91"/><circle cx="17.00" cy="8.38" r="2.03" fill="#1b2021" stroke="#f4f5f5" stroke-width="0.90"/><rect x="8.53" y="28.40" width="2.4" height="2.4" fill="#1f4a6b" transform="rotate(30 9.73 29.60)"/></g></svg>
<span class="t" style="top:678.00px;left:580.20px;transform:translateX(-50%) scaleX(0.898);font-size:9px;color:#858b8e;">Octave</span>
<svg style="left:607px;top:648px;" width="35" height="35" viewBox="0 0 35 35"><g transform="translate(0.50,0.20)"><path d="M10.90,30.70 A15.00,15.00 0 1 1 23.10,30.70 L21.90,28.01 A12.05,12.05 0 1 0 12.10,28.01 Z" fill="#d6d9db"/><path d="M11.30,27.73 A12.15,12.15 0 1 1 22.70,27.73 L19.54,21.77 A5.40,5.40 0 1 0 14.46,21.77 Z" fill="#858c91"/><circle cx="17.00" cy="8.38" r="2.03" fill="#1b2021" stroke="#f4f5f5" stroke-width="0.90"/><rect x="8.53" y="28.40" width="2.4" height="2.4" fill="#1f4a6b" transform="rotate(30 9.73 29.60)"/></g></svg>
<span class="t" style="top:678.00px;left:624.00px;transform:translateX(-50%) scaleX(0.891);font-size:9px;color:#858b8e;">Fine</span>
<svg style="left:650px;top:562px;" width="97" height="91" viewBox="0 0 97 91"><line x1="47" y1="17.2" x2="62.4" y2="14.6" stroke="#cdd0d2" stroke-width="1.3"/><line x1="46.6" y1="44.4" x2="62.4" y2="56.4" stroke="#cdd0d2" stroke-width="1.3"/></svg>
<svg style="left:648px;top:564px;" width="55" height="55" viewBox="0 0 55 55"><g transform="translate(0.20,0.40)"><path d="M16.83,49.84 A25.00,25.00 0 1 1 37.17,49.84 L35.11,45.23 A19.95,19.95 0 1 0 18.89,45.23 Z" fill="#e1e3e5"/><path d="M17.59,44.70 A20.05,20.05 0 1 1 36.41,44.70 L31.23,34.95 A9.00,9.00 0 1 0 22.77,34.95 Z" fill="#a9aeb2"/></g></svg>
<span class="t" style="top:618.00px;left:675.20px;transform:translateX(-50%) scaleX(1.019);font-size:10px;color:#33383a;">Cutoff</span>
<svg style="left:709px;top:564px;" width="35" height="35" viewBox="0 0 35 35"><g transform="translate(0.40,0.40)"><path d="M10.90,30.70 A15.00,15.00 0 1 1 23.10,30.70 L21.90,28.01 A12.05,12.05 0 1 0 12.10,28.01 Z" fill="#e1e3e5"/><path d="M11.30,27.73 A12.15,12.15 0 1 1 22.70,27.73 L19.54,21.77 A5.40,5.40 0 1 0 14.46,21.77 Z" fill="#a9aeb2"/></g></svg>
<span class="t" style="top:595.00px;left:726.20px;transform:translateX(-50%) scaleX(0.924);font-size:9px;color:#858b8e;">Drive</span>
<svg style="left:709px;top:606px;" width="35" height="35" viewBox="0 0 35 35"><g transform="translate(0.40,0.60)"><path d="M10.90,30.70 A15.00,15.00 0 1 1 23.10,30.70 L21.90,28.01 A12.05,12.05 0 1 0 12.10,28.01 Z" fill="#e1e3e5"/><path d="M11.30,27.73 A12.15,12.15 0 1 1 22.70,27.73 L19.54,21.77 A5.40,5.40 0 1 0 14.46,21.77 Z" fill="#a9aeb2"/></g></svg>
<span class="t" style="top:637.00px;left:726.40px;transform:translateX(-50%) scaleX(0.837);font-size:9px;color:#858b8e;">Res</span>
<div style="left:650.00px;top:634.30px;width:59.00px;height:16.20px;background:#b9bbbc;border-radius:2.5px;"></div>
<span class="t" style="top:636.00px;left:679.50px;transform:translateX(-50%) scaleX(0.991);font-size:10px;color:#33383a;">Active</span>
<div style="left:650.00px;top:652.90px;width:92.00px;height:16.10px;background:#b9bbbc;border-radius:2.5px;"></div>
<span class="t" style="top:654.00px;left:651.80px;transform-origin:0 50%;transform:scaleX(0.843);font-size:10px;color:#6f7578;">SVF</span>
<svg style="left:730px;top:657px;" width="7" height="8" viewBox="0 0 7 8"><g transform="translate(0.00,0.95)"><polygon points="0,0 6.8,0 3.4,6.4" fill="#3a3f41"/></g></svg>
<div style="left:650.00px;top:671.40px;width:92.00px;height:16.20px;background:#b9bbbc;border-radius:2.5px;"></div>
<span class="t" style="top:673.00px;left:651.80px;transform-origin:0 50%;transform:scaleX(0.951);font-size:10px;color:#6f7578;">LPF 2 pole</span>
<svg style="left:730px;top:676px;" width="7" height="7" viewBox="0 0 7 7"><g transform="translate(0.00,0.50)"><polygon points="0,0 6.8,0 3.4,6.4" fill="#3a3f41"/></g></svg>
<svg style="left:759px;top:564px;" width="35" height="35" viewBox="0 0 35 35"><g transform="translate(0.20,0.40)"><path d="M10.90,30.70 A15.00,15.00 0 1 1 23.10,30.70 L21.90,28.01 A12.05,12.05 0 1 0 12.10,28.01 Z" fill="#d6d9db"/><path d="M11.30,27.73 A12.15,12.15 0 1 1 22.70,27.73 L19.54,21.77 A5.40,5.40 0 1 0 14.46,21.77 Z" fill="#858c91"/><circle cx="14.05" cy="25.10" r="2.03" fill="#1b2021" stroke="#f4f5f5" stroke-width="0.90"/><rect x="8.53" y="28.40" width="2.4" height="2.4" fill="#1f4a6b" transform="rotate(30 9.73 29.60)"/></g></svg>
<span class="t" style="top:595.00px;left:775.60px;transform:translateX(-50%) scaleX(0.894);font-size:9px;color:#858b8e;">Pre delay</span>
<svg style="left:759px;top:606px;" width="35" height="35" viewBox="0 0 35 35"><g transform="translate(0.20,0.60)"><path d="M10.90,30.70 A15.00,15.00 0 1 1 23.10,30.70 L21.90,28.01 A12.05,12.05 0 1 0 12.10,28.01 Z" fill="#d6d9db"/><path d="M11.30,27.73 A12.15,12.15 0 1 1 22.70,27.73 L19.54,21.77 A5.40,5.40 0 1 0 14.46,21.77 Z" fill="#858c91"/><circle cx="17.00" cy="8.38" r="2.03" fill="#1b2021" stroke="#f4f5f5" stroke-width="0.90"/><rect x="8.53" y="28.40" width="2.4" height="2.4" fill="#1f4a6b" transform="rotate(30 9.73 29.60)"/></g></svg>
<span class="t" style="top:637.00px;left:775.60px;transform:translateX(-50%) scaleX(0.935);font-size:9px;color:#858b8e;">Start Offset</span>
<svg style="left:759px;top:648px;" width="35" height="35" viewBox="0 0 35 35"><g transform="translate(0.20,0.20)"><path d="M10.90,30.70 A15.00,15.00 0 1 1 23.10,30.70 L21.90,28.01 A12.05,12.05 0 1 0 12.10,28.01 Z" fill="#d6d9db"/><path d="M11.30,27.73 A12.15,12.15 0 1 1 22.70,27.73 L19.54,21.77 A5.40,5.40 0 1 0 14.46,21.77 Z" fill="#858c91"/><circle cx="17.00" cy="8.38" r="2.03" fill="#1b2021" stroke="#f4f5f5" stroke-width="0.90"/><rect x="8.53" y="28.40" width="2.4" height="2.4" fill="#1f4a6b" transform="rotate(30 9.73 29.60)"/></g></svg>
<span class="t" style="top:678.00px;left:775.60px;transform:translateX(-50%) scaleX(0.921);font-size:9px;color:#858b8e;">End Offset</span>
<svg style="left:812px;top:564px;" width="35" height="35" viewBox="0 0 35 35"><g transform="translate(0.00,0.40)"><path d="M10.90,30.70 A15.00,15.00 0 1 1 23.10,30.70 L21.90,28.01 A12.05,12.05 0 1 0 12.10,28.01 Z" fill="#e1e3e5"/><path d="M11.30,27.73 A12.15,12.15 0 1 1 22.70,27.73 L19.54,21.77 A5.40,5.40 0 1 0 14.46,21.77 Z" fill="#a9aeb2"/></g></svg>
<span class="t" style="top:595.00px;left:828.60px;transform:translateX(-50%) scaleX(0.935);font-size:9px;color:#858b8e;">Start Offset</span>
<svg style="left:860px;top:564px;" width="35" height="35" viewBox="0 0 35 35"><g transform="translate(0.90,0.40)"><path d="M10.90,30.70 A15.00,15.00 0 1 1 23.10,30.70 L21.90,28.01 A12.05,12.05 0 1 0 12.10,28.01 Z" fill="#e1e3e5"/><path d="M11.30,27.73 A12.15,12.15 0 1 1 22.70,27.73 L19.54,21.77 A5.40,5.40 0 1 0 14.46,21.77 Z" fill="#a9aeb2"/></g></svg>
<span class="t" style="top:595.00px;left:877.60px;transform:translateX(-50%) scaleX(0.921);font-size:9px;color:#858b8e;">End Offset</span>
<svg style="left:812px;top:606px;" width="35" height="35" viewBox="0 0 35 35"><g transform="translate(0.00,0.60)"><path d="M10.90,30.70 A15.00,15.00 0 1 1 23.10,30.70 L21.90,28.01 A12.05,12.05 0 1 0 12.10,28.01 Z" fill="#e1e3e5"/><path d="M11.30,27.73 A12.15,12.15 0 1 1 22.70,27.73 L19.54,21.77 A5.40,5.40 0 1 0 14.46,21.77 Z" fill="#a9aeb2"/></g></svg>
<span class="t" style="top:637.00px;left:829.00px;transform:translateX(-50%) scaleX(0.847);font-size:9px;color:#858b8e;">X-Fade</span>
<svg style="left:860px;top:606px;" width="35" height="35" viewBox="0 0 35 35"><g transform="translate(0.90,0.60)"><path d="M10.90,30.70 A15.00,15.00 0 1 1 23.10,30.70 L21.90,28.01 A12.05,12.05 0 1 0 12.10,28.01 Z" fill="#e1e3e5"/><path d="M11.30,27.73 A12.15,12.15 0 1 1 22.70,27.73 L19.54,21.77 A5.40,5.40 0 1 0 14.46,21.77 Z" fill="#a9aeb2"/></g></svg>
<span class="t" style="top:637.00px;left:877.60px;transform:translateX(-50%) scaleX(0.891);font-size:9px;color:#858b8e;">Curve</span>
<div style="left:807.40px;top:652.90px;width:91.40px;height:16.10px;background:#b9bbbc;border-radius:2.5px;"></div>
<span class="t" style="top:654.00px;left:853.10px;transform:translateX(-50%) scaleX(0.938);font-size:10px;color:#33383a;">Release</span>
<div style="left:807.40px;top:671.40px;width:91.40px;height:16.20px;background:#b9bbbc;border-radius:2.5px;"></div>
<span class="t" style="top:673.00px;left:853.10px;transform:translateX(-50%) scaleX(1.014);font-size:10px;color:#33383a;">Alternate</span>
<div style="left:909.00px;top:567.00px;width:37.00px;height:16.30px;background:#b9bbbc;border-radius:2.5px;"></div>
<span class="t" style="top:569.00px;left:927.50px;transform:translateX(-50%) scaleX(0.991);font-size:10px;color:#33383a;">Active</span>
<svg style="left:910px;top:591px;" width="35" height="35" viewBox="0 0 35 35"><g transform="translate(0.40,0.80)"><path d="M10.90,30.70 A15.00,15.00 0 1 1 23.10,30.70 L21.90,28.01 A12.05,12.05 0 1 0 12.10,28.01 Z" fill="#d6d9db"/><path d="M11.30,27.73 A12.15,12.15 0 1 1 22.70,27.73 L19.54,21.77 A5.40,5.40 0 1 0 14.46,21.77 Z" fill="#858c91"/><circle cx="17.00" cy="8.38" r="2.03" fill="#1b2021" stroke="#f4f5f5" stroke-width="0.90"/><rect x="8.53" y="28.40" width="2.4" height="2.4" fill="#1f4a6b" transform="rotate(30 9.73 29.60)"/></g></svg>
<span class="t" style="top:622.00px;left:926.80px;transform:translateX(-50%) scaleX(0.948);font-size:9px;color:#858b8e;">Amount</span>
<div style="left:909.00px;top:652.90px;width:37.00px;height:16.10px;background:#b9bbbc;border-radius:2.5px;"></div>
<span class="t" style="top:654.00px;left:927.50px;transform:translateX(-50%) scaleX(0.926);font-size:10px;color:#33383a;">Fast</span>
<div style="left:909.00px;top:671.40px;width:37.00px;height:16.20px;background:#b9bbbc;border-radius:2.5px;"></div>
<span class="t" style="top:673.00px;left:927.50px;transform:translateX(-50%) scaleX(0.950);font-size:10px;color:#33383a;">Track</span>
<div style="left:960.70px;top:566.00px;width:10.00px;height:112.00px;background:#858c91;"></div>
<div style="left:970.70px;top:566.00px;width:3.00px;height:112.00px;background:#b7bbbe;"></div>
<div style="left:964.70px;top:672.80px;width:9.40px;height:1.60px;background:#1f4a6b;"></div>
<svg style="left:960px;top:667px;" width="12" height="12" viewBox="0 0 12 12"><g transform="translate(0.20,0.10)"><circle cx="5.5" cy="5.5" r="3.6" fill="#1b2021" stroke="#f4f5f5" stroke-width="1.3"/></g></svg>
<span class="t" style="top:678.00px;left:966.90px;transform:translateX(-50%) scaleX(1.000);font-size:9px;color:#858b8e;">A</span>
<div style="left:977.57px;top:566.00px;width:10.00px;height:112.00px;background:#858c91;"></div>
<div style="left:987.57px;top:566.00px;width:3.00px;height:112.00px;background:#b7bbbe;"></div>
<div style="left:981.57px;top:672.80px;width:9.40px;height:1.60px;background:#1f4a6b;"></div>
<svg style="left:977px;top:664px;" width="12" height="12" viewBox="0 0 12 12"><g transform="translate(0.07,0.70)"><circle cx="5.5" cy="5.5" r="3.6" fill="#1b2021" stroke="#f4f5f5" stroke-width="1.3"/></g></svg>
<span class="t" style="top:678.00px;left:983.77px;transform:translateX(-50%) scaleX(1.000);font-size:9px;color:#858b8e;">D</span>
<div style="left:994.44px;top:566.00px;width:10.00px;height:112.00px;background:#858c91;"></div>
<div style="left:1004.44px;top:566.00px;width:3.00px;height:112.00px;background:#b7bbbe;"></div>
<div style="left:994.44px;top:641.40px;width:10.00px;height:36.60px;background:#4a4e4f;"></div>
<div style="left:994.44px;top:672.80px;width:13.40px;height:1.60px;background:#1f4a6b;"></div>
<svg style="left:993px;top:635px;" width="12" height="12" viewBox="0 0 12 12"><g transform="translate(0.94,0.90)"><circle cx="5.5" cy="5.5" r="3.6" fill="#1b2021" stroke="#f4f5f5" stroke-width="1.3"/></g></svg>
<span class="t" style="top:678.00px;left:1000.64px;transform:translateX(-50%) scaleX(1.000);font-size:9px;color:#858b8e;">H</span>
<div style="left:1011.31px;top:566.00px;width:10.00px;height:112.00px;background:#858c91;"></div>
<div style="left:1021.31px;top:566.00px;width:3.00px;height:112.00px;background:#b7bbbe;"></div>
<div style="left:1011.31px;top:570.70px;width:10.00px;height:107.30px;background:#4a4e4f;"></div>
<div style="left:1011.31px;top:672.80px;width:13.40px;height:1.60px;background:#1f4a6b;"></div>
<svg style="left:1010px;top:565px;" width="12" height="12" viewBox="0 0 12 12"><g transform="translate(0.81,0.20)"><circle cx="5.5" cy="5.5" r="3.6" fill="#1b2021" stroke="#f4f5f5" stroke-width="1.3"/></g></svg>
<span class="t" style="top:678.00px;left:1017.51px;transform:translateX(-50%) scaleX(1.000);font-size:9px;color:#858b8e;">S</span>
<div style="left:1028.18px;top:566.00px;width:10.00px;height:112.00px;background:#858c91;"></div>
<div style="left:1038.18px;top:566.00px;width:3.00px;height:112.00px;background:#b7bbbe;"></div>
<div style="left:1032.18px;top:672.80px;width:9.40px;height:1.60px;background:#1f4a6b;"></div>
<svg style="left:1027px;top:666px;" width="12" height="12" viewBox="0 0 12 12"><g transform="translate(0.68,0.70)"><circle cx="5.5" cy="5.5" r="3.6" fill="#1b2021" stroke="#f4f5f5" stroke-width="1.3"/></g></svg>
<span class="t" style="top:678.00px;left:1034.38px;transform:translateX(-50%) scaleX(1.000);font-size:9px;color:#858b8e;">R</span>
<svg style="left:1046px;top:564px;" width="35" height="35" viewBox="0 0 35 35"><g transform="translate(0.00,0.40)"><path d="M10.90,30.70 A15.00,15.00 0 1 1 23.10,30.70 L21.90,28.01 A12.05,12.05 0 1 0 12.10,28.01 Z" fill="#d6d9db"/><path d="M11.30,27.73 A12.15,12.15 0 1 1 22.70,27.73 L19.54,21.77 A5.40,5.40 0 1 0 14.46,21.77 Z" fill="#858c91"/><circle cx="17.00" cy="8.38" r="2.03" fill="#1b2021" stroke="#f4f5f5" stroke-width="0.90"/><rect x="8.53" y="28.40" width="2.4" height="2.4" fill="#1f4a6b" transform="rotate(30 9.73 29.60)"/></g></svg>
<span class="t" style="top:595.00px;left:1062.80px;transform:translateX(-50%) scaleX(0.864);font-size:9px;color:#858b8e;">A-C</span>
<svg style="left:1046px;top:606px;" width="35" height="35" viewBox="0 0 35 35"><g transform="translate(0.00,0.60)"><path d="M10.90,30.70 A15.00,15.00 0 1 1 23.10,30.70 L21.90,28.01 A12.05,12.05 0 1 0 12.10,28.01 Z" fill="#d6d9db"/><path d="M11.30,27.73 A12.15,12.15 0 1 1 22.70,27.73 L19.54,21.77 A5.40,5.40 0 1 0 14.46,21.77 Z" fill="#858c91"/><circle cx="17.00" cy="8.38" r="2.03" fill="#1b2021" stroke="#f4f5f5" stroke-width="0.90"/><rect x="8.53" y="28.40" width="2.4" height="2.4" fill="#1f4a6b" transform="rotate(30 9.73 29.60)"/></g></svg>
<span class="t" style="top:637.00px;left:1062.80px;transform:translateX(-50%) scaleX(0.850);font-size:9px;color:#858b8e;">D-C</span>
<svg style="left:1046px;top:648px;" width="35" height="35" viewBox="0 0 35 35"><g transform="translate(0.00,0.20)"><path d="M10.90,30.70 A15.00,15.00 0 1 1 23.10,30.70 L21.90,28.01 A12.05,12.05 0 1 0 12.10,28.01 Z" fill="#d6d9db"/><path d="M11.30,27.73 A12.15,12.15 0 1 1 22.70,27.73 L19.54,21.77 A5.40,5.40 0 1 0 14.46,21.77 Z" fill="#858c91"/><circle cx="17.00" cy="8.38" r="2.03" fill="#1b2021" stroke="#f4f5f5" stroke-width="0.90"/><rect x="8.53" y="28.40" width="2.4" height="2.4" fill="#1f4a6b" transform="rotate(30 9.73 29.60)"/></g></svg>
<span class="t" style="top:678.00px;left:1062.80px;transform:translateX(-50%) scaleX(0.838);font-size:9px;color:#858b8e;">R-C</span>
<div style="left:1091.80px;top:566.00px;width:10.00px;height:112.00px;background:#858c91;"></div>
<div style="left:1101.80px;top:566.00px;width:3.00px;height:112.00px;background:#b7bbbe;"></div>
<div style="left:1095.80px;top:672.80px;width:9.40px;height:1.60px;background:#1f4a6b;"></div>
<svg style="left:1091px;top:667px;" width="12" height="12" viewBox="0 0 12 12"><g transform="translate(0.30,0.10)"><circle cx="5.5" cy="5.5" r="3.6" fill="#1b2021" stroke="#f4f5f5" stroke-width="1.3"/></g></svg>
<span class="t" style="top:678.00px;left:1098.00px;transform:translateX(-50%) scaleX(1.000);font-size:9px;color:#858b8e;">A</span>
<div style="left:1108.67px;top:566.00px;width:10.00px;height:112.00px;background:#858c91;"></div>
<div style="left:1118.67px;top:566.00px;width:3.00px;height:112.00px;background:#b7bbbe;"></div>
<div style="left:1112.67px;top:672.80px;width:9.40px;height:1.60px;background:#1f4a6b;"></div>
<svg style="left:1108px;top:664px;" width="12" height="12" viewBox="0 0 12 12"><g transform="translate(0.17,0.70)"><circle cx="5.5" cy="5.5" r="3.6" fill="#1b2021" stroke="#f4f5f5" stroke-width="1.3"/></g></svg>
<span class="t" style="top:678.00px;left:1114.87px;transform:translateX(-50%) scaleX(1.000);font-size:9px;color:#858b8e;">D</span>
<div style="left:1125.54px;top:566.00px;width:10.00px;height:112.00px;background:#858c91;"></div>
<div style="left:1135.54px;top:566.00px;width:3.00px;height:112.00px;background:#b7bbbe;"></div>
<div style="left:1125.54px;top:641.40px;width:10.00px;height:36.60px;background:#4a4e4f;"></div>
<div style="left:1125.54px;top:672.80px;width:13.40px;height:1.60px;background:#1f4a6b;"></div>
<svg style="left:1125px;top:635px;" width="12" height="12" viewBox="0 0 12 12"><g transform="translate(0.04,0.90)"><circle cx="5.5" cy="5.5" r="3.6" fill="#1b2021" stroke="#f4f5f5" stroke-width="1.3"/></g></svg>
<span class="t" style="top:678.00px;left:1131.74px;transform:translateX(-50%) scaleX(1.000);font-size:9px;color:#858b8e;">H</span>
<div style="left:1142.41px;top:566.00px;width:10.00px;height:112.00px;background:#858c91;"></div>
<div style="left:1152.41px;top:566.00px;width:3.00px;height:112.00px;background:#b7bbbe;"></div>
<div style="left:1142.41px;top:570.70px;width:10.00px;height:107.30px;background:#4a4e4f;"></div>
<div style="left:1142.41px;top:672.80px;width:13.40px;height:1.60px;background:#1f4a6b;"></div>
<svg style="left:1141px;top:565px;" width="12" height="12" viewBox="0 0 12 12"><g transform="translate(0.91,0.20)"><circle cx="5.5" cy="5.5" r="3.6" fill="#1b2021" stroke="#f4f5f5" stroke-width="1.3"/></g></svg>
<span class="t" style="top:678.00px;left:1148.61px;transform:translateX(-50%) scaleX(1.000);font-size:9px;color:#858b8e;">S</span>
<div style="left:1159.28px;top:566.00px;width:10.00px;height:112.00px;background:#858c91;"></div>
<div style="left:1169.28px;top:566.00px;width:3.00px;height:112.00px;background:#b7bbbe;"></div>
<div style="left:1163.28px;top:672.80px;width:9.40px;height:1.60px;background:#1f4a6b;"></div>
<svg style="left:1158px;top:666px;" width="12" height="12" viewBox="0 0 12 12"><g transform="translate(0.78,0.70)"><circle cx="5.5" cy="5.5" r="3.6" fill="#1b2021" stroke="#f4f5f5" stroke-width="1.3"/></g></svg>
<span class="t" style="top:678.00px;left:1165.48px;transform:translateX(-50%) scaleX(1.000);font-size:9px;color:#858b8e;">R</span>
<svg style="left:1177px;top:564px;" width="35" height="35" viewBox="0 0 35 35"><g transform="translate(0.20,0.40)"><path d="M10.90,30.70 A15.00,15.00 0 1 1 23.10,30.70 L21.90,28.01 A12.05,12.05 0 1 0 12.10,28.01 Z" fill="#d6d9db"/><path d="M11.30,27.73 A12.15,12.15 0 1 1 22.70,27.73 L19.54,21.77 A5.40,5.40 0 1 0 14.46,21.77 Z" fill="#858c91"/><circle cx="17.00" cy="8.38" r="2.03" fill="#1b2021" stroke="#f4f5f5" stroke-width="0.90"/><rect x="8.53" y="28.40" width="2.4" height="2.4" fill="#1f4a6b" transform="rotate(30 9.73 29.60)"/></g></svg>
<span class="t" style="top:595.00px;left:1194.00px;transform:translateX(-50%) scaleX(0.864);font-size:9px;color:#858b8e;">A-C</span>
<svg style="left:1177px;top:606px;" width="35" height="35" viewBox="0 0 35 35"><g transform="translate(0.20,0.60)"><path d="M10.90,30.70 A15.00,15.00 0 1 1 23.10,30.70 L21.90,28.01 A12.05,12.05 0 1 0 12.10,28.01 Z" fill="#d6d9db"/><path d="M11.30,27.73 A12.15,12.15 0 1 1 22.70,27.73 L19.54,21.77 A5.40,5.40 0 1 0 14.46,21.77 Z" fill="#858c91"/><circle cx="17.00" cy="8.38" r="2.03" fill="#1b2021" stroke="#f4f5f5" stroke-width="0.90"/><rect x="8.53" y="28.40" width="2.4" height="2.4" fill="#1f4a6b" transform="rotate(30 9.73 29.60)"/></g></svg>
<span class="t" style="top:637.00px;left:1194.00px;transform:translateX(-50%) scaleX(0.850);font-size:9px;color:#858b8e;">D-C</span>
<svg style="left:1177px;top:648px;" width="35" height="35" viewBox="0 0 35 35"><g transform="translate(0.20,0.20)"><path d="M10.90,30.70 A15.00,15.00 0 1 1 23.10,30.70 L21.90,28.01 A12.05,12.05 0 1 0 12.10,28.01 Z" fill="#d6d9db"/><path d="M11.30,27.73 A12.15,12.15 0 1 1 22.70,27.73 L19.54,21.77 A5.40,5.40 0 1 0 14.46,21.77 Z" fill="#858c91"/><circle cx="17.00" cy="8.38" r="2.03" fill="#1b2021" stroke="#f4f5f5" stroke-width="0.90"/><rect x="8.53" y="28.40" width="2.4" height="2.4" fill="#1f4a6b" transform="rotate(30 9.73 29.60)"/></g></svg>
<span class="t" style="top:678.00px;left:1194.00px;transform:translateX(-50%) scaleX(0.838);font-size:9px;color:#858b8e;">R-C</span>
<div style="left:4.00px;top:711.20px;width:34.00px;height:16.80px;background:#8ccbfa;"></div>
<span class="t" style="top:714.00px;left:21.00px;transform:translateX(-50%) scaleX(0.867);font-size:10px;color:#272d2e;">Src</span>
<div style="left:42.00px;top:711.20px;width:34.80px;height:16.80px;background:#535858;"></div>
<span class="t" style="top:714.00px;left:59.40px;transform:translateX(-50%) scaleX(1.000);font-size:10px;color:#eceeee;">A-En</span>
<div style="left:78.17px;top:711.20px;width:34.80px;height:16.80px;background:#535858;"></div>
<span class="t" style="top:714.00px;left:95.57px;transform:translateX(-50%) scaleX(1.000);font-size:10px;color:#eceeee;">F-En</span>
<div style="left:114.34px;top:711.20px;width:34.80px;height:16.80px;background:#535858;"></div>
<span class="t" style="top:714.00px;left:131.74px;transform:translateX(-50%) scaleX(1.000);font-size:10px;color:#eceeee;">Vel</span>
<div style="left:150.51px;top:711.20px;width:34.80px;height:16.80px;background:#535858;"></div>
<span class="t" style="top:714.00px;left:167.91px;transform:translateX(-50%) scaleX(1.000);font-size:10px;color:#eceeee;">Rnd</span>
<div style="left:186.68px;top:711.20px;width:34.80px;height:16.80px;background:#535858;"></div>
<span class="t" style="top:714.00px;left:204.08px;transform:translateX(-50%) scaleX(1.000);font-size:10px;color:#eceeee;">S 1</span>
<div style="left:222.85px;top:711.20px;width:34.80px;height:16.80px;background:#535858;"></div>
<span class="t" style="top:714.00px;left:240.25px;transform:translateX(-50%) scaleX(1.000);font-size:10px;color:#eceeee;">S 2</span>
<div style="left:259.02px;top:711.20px;width:34.80px;height:16.80px;background:#535858;"></div>
<span class="t" style="top:714.00px;left:276.42px;transform:translateX(-50%) scaleX(1.000);font-size:10px;color:#eceeee;">S 3</span>
<div style="left:295.19px;top:711.20px;width:34.80px;height:16.80px;background:#535858;"></div>
<span class="t" style="top:714.00px;left:312.59px;transform:translateX(-50%) scaleX(1.000);font-size:10px;color:#eceeee;">S 4</span>
<div style="left:331.36px;top:711.20px;width:34.80px;height:16.80px;background:#535858;"></div>
<span class="t" style="top:714.00px;left:348.76px;transform:translateX(-50%) scaleX(1.000);font-size:10px;color:#eceeee;">S 5</span>
<div style="left:367.53px;top:711.20px;width:34.80px;height:16.80px;background:#535858;"></div>
<span class="t" style="top:714.00px;left:384.93px;transform:translateX(-50%) scaleX(1.000);font-size:10px;color:#eceeee;">S 6</span>
<div style="left:403.70px;top:711.20px;width:34.80px;height:16.80px;background:#535858;"></div>
<span class="t" style="top:714.00px;left:421.10px;transform:translateX(-50%) scaleX(1.000);font-size:10px;color:#eceeee;">S 7</span>
<div style="left:439.87px;top:711.20px;width:34.80px;height:16.80px;background:#535858;"></div>
<span class="t" style="top:714.00px;left:457.27px;transform:translateX(-50%) scaleX(1.000);font-size:10px;color:#eceeee;">S 8</span>
<div style="left:476.04px;top:711.20px;width:34.80px;height:16.80px;background:#535858;"></div>
<span class="t" style="top:714.00px;left:493.44px;transform:translateX(-50%) scaleX(1.000);font-size:10px;color:#eceeee;">S 9</span>
<div style="left:512.21px;top:711.20px;width:34.80px;height:16.80px;background:#535858;"></div>
<span class="t" style="top:714.00px;left:529.61px;transform:translateX(-50%) scaleX(1.000);font-size:10px;color:#eceeee;">S 10</span>
<div style="left:548.38px;top:711.20px;width:34.80px;height:16.80px;background:#535858;"></div>
<span class="t" style="top:714.00px;left:565.78px;transform:translateX(-50%) scaleX(1.000);font-size:10px;color:#eceeee;">S 11</span>
<div style="left:584.55px;top:711.20px;width:34.80px;height:16.80px;background:#535858;"></div>
<span class="t" style="top:714.00px;left:601.95px;transform:translateX(-50%) scaleX(1.000);font-size:10px;color:#eceeee;">S 12</span>
<div style="left:620.72px;top:711.20px;width:34.80px;height:16.80px;background:#535858;"></div>
<span class="t" style="top:714.00px;left:638.12px;transform:translateX(-50%) scaleX(1.000);font-size:10px;color:#eceeee;">S 13</span>
<div style="left:656.89px;top:711.20px;width:34.80px;height:16.80px;background:#535858;"></div>
<span class="t" style="top:714.00px;left:674.29px;transform:translateX(-50%) scaleX(1.000);font-size:10px;color:#eceeee;">S 14</span>
<div style="left:693.06px;top:711.20px;width:34.80px;height:16.80px;background:#535858;"></div>
<span class="t" style="top:714.00px;left:710.46px;transform:translateX(-50%) scaleX(1.000);font-size:10px;color:#eceeee;">S 15</span>
<div style="left:729.23px;top:711.20px;width:34.80px;height:16.80px;background:#535858;"></div>
<span class="t" style="top:714.00px;left:746.63px;transform:translateX(-50%) scaleX(1.000);font-size:10px;color:#eceeee;">S 16</span>
<div style="left:765.40px;top:711.20px;width:34.80px;height:16.80px;background:#535858;"></div>
<span class="t" style="top:714.00px;left:782.80px;transform:translateX(-50%) scaleX(1.000);font-size:10px;color:#eceeee;">M 1</span>
<div style="left:801.57px;top:711.20px;width:34.80px;height:16.80px;background:#535858;"></div>
<span class="t" style="top:714.00px;left:818.97px;transform:translateX(-50%) scaleX(1.000);font-size:10px;color:#eceeee;">M 2</span>
<div style="left:837.74px;top:711.20px;width:34.80px;height:16.80px;background:#535858;"></div>
<span class="t" style="top:714.00px;left:855.14px;transform:translateX(-50%) scaleX(1.000);font-size:10px;color:#eceeee;">M 3</span>
<div style="left:873.91px;top:711.20px;width:34.80px;height:16.80px;background:#535858;"></div>
<span class="t" style="top:714.00px;left:891.31px;transform:translateX(-50%) scaleX(1.000);font-size:10px;color:#eceeee;">M 4</span>
<div style="left:910.08px;top:711.20px;width:34.80px;height:16.80px;background:#535858;"></div>
<span class="t" style="top:714.00px;left:927.48px;transform:translateX(-50%) scaleX(1.000);font-size:10px;color:#eceeee;">Mod</span>
<div style="left:946.25px;top:711.20px;width:34.80px;height:16.80px;background:#535858;"></div>
<span class="t" style="top:714.00px;left:963.65px;transform:translateX(-50%) scaleX(1.000);font-size:10px;color:#eceeee;">Pch</span>
<div style="left:982.42px;top:711.20px;width:34.80px;height:16.80px;background:#535858;"></div>
<span class="t" style="top:714.00px;left:999.82px;transform:translateX(-50%) scaleX(1.000);font-size:10px;color:#eceeee;">Pres</span>
<div style="left:1018.59px;top:711.20px;width:34.80px;height:16.80px;background:#535858;"></div>
<span class="t" style="top:714.00px;left:1035.99px;transform:translateX(-50%) scaleX(1.000);font-size:10px;color:#eceeee;">Tprt</span>
<svg style="left:1074px;top:705px;" width="20" height="20" viewBox="0 0 20 20"><g transform="translate(0.20,0.20)"><circle cx="9.8" cy="9.8" r="8.8" fill="#4a4e4f"/><polygon points="7.77,12.02 11.83,12.02 13.79,18.75 5.81,18.75" fill="#282e2e"/><circle cx="9.8" cy="9.8" r="3.70" fill="#282e2e"/></g></svg>
<span class="t" style="top:721.00px;left:1083.60px;transform:translateX(-50%) scaleX(0.964);font-size:8.5px;color:#8c9eae;">Macro 1</span>
<svg style="left:1112px;top:705px;" width="20" height="20" viewBox="0 0 20 20"><g transform="translate(0.20,0.20)"><circle cx="9.8" cy="9.8" r="8.8" fill="#4a4e4f"/><polygon points="7.77,12.02 11.83,12.02 13.79,18.75 5.81,18.75" fill="#282e2e"/><circle cx="9.8" cy="9.8" r="3.70" fill="#282e2e"/></g></svg>
<span class="t" style="top:721.00px;left:1121.60px;transform:translateX(-50%) scaleX(0.964);font-size:8.5px;color:#8c9eae;">Macro 2</span>
<svg style="left:1149px;top:705px;" width="21" height="20" viewBox="0 0 21 20"><g transform="translate(0.80,0.20)"><circle cx="9.8" cy="9.8" r="8.8" fill="#4a4e4f"/><polygon points="7.77,12.02 11.83,12.02 13.79,18.75 5.81,18.75" fill="#282e2e"/><circle cx="9.8" cy="9.8" r="3.70" fill="#282e2e"/></g></svg>
<span class="t" style="top:721.00px;left:1159.20px;transform:translateX(-50%) scaleX(0.964);font-size:8.5px;color:#8c9eae;">Macro 3</span>
<svg style="left:1187px;top:705px;" width="21" height="20" viewBox="0 0 21 20"><g transform="translate(0.80,0.20)"><circle cx="9.8" cy="9.8" r="8.8" fill="#4a4e4f"/><polygon points="7.77,12.02 11.83,12.02 13.79,18.75 5.81,18.75" fill="#282e2e"/><circle cx="9.8" cy="9.8" r="3.70" fill="#282e2e"/></g></svg>
<span class="t" style="top:721.00px;left:1197.20px;transform:translateX(-50%) scaleX(0.964);font-size:8.5px;color:#8c9eae;">Macro 4</span></body></html>
